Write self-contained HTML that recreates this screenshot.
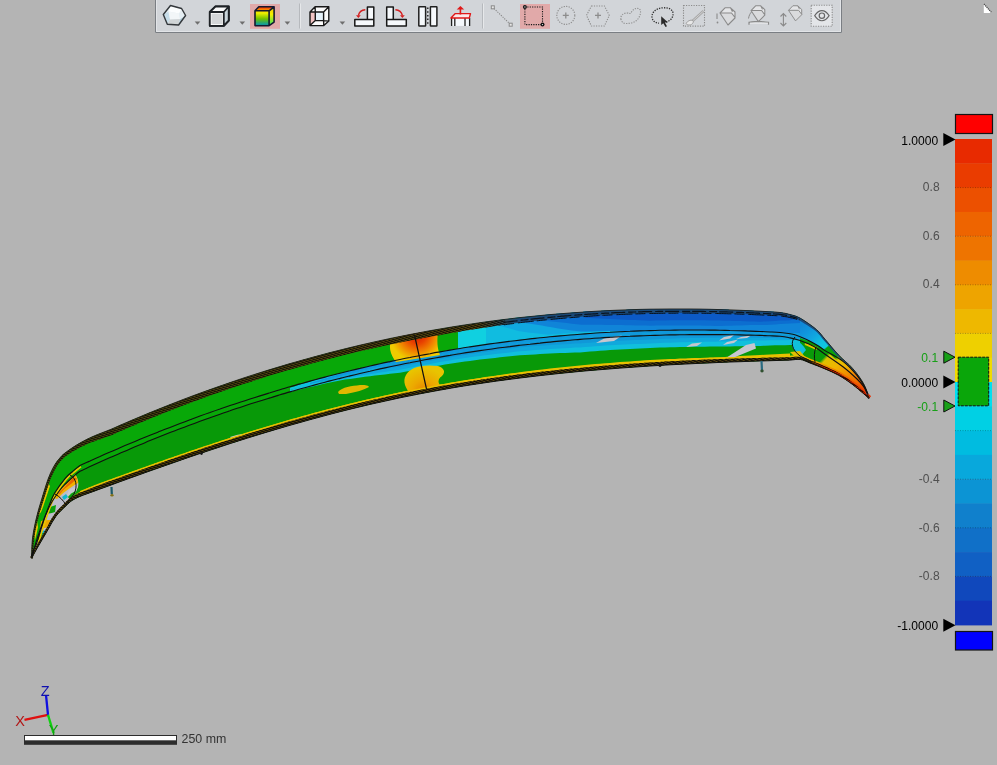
<!DOCTYPE html>
<html><head><meta charset="utf-8">
<style>
html,body{margin:0;padding:0;}
body{width:997px;height:765px;background:#b4b4b4;overflow:hidden;position:relative;font-family:"Liberation Sans",sans-serif;}
svg{position:absolute;left:0;top:0;font-family:"Liberation Sans",sans-serif;}
</style></head><body>
<svg width="997" height="765" viewBox="0 0 997 765">
<defs><clipPath id="bandclip"><path d="M31.5,558.3 C31.7,555.0 31.7,545.2 32.5,538.4 C33.3,531.6 35.0,524.0 36.5,517.5 C38.0,511.0 39.7,505.8 41.7,499.2 C43.7,492.6 46.3,483.8 48.5,478.0 C50.7,472.2 52.9,468.0 55.1,464.3 C57.4,460.6 59.9,457.9 62.0,455.6 C64.2,453.4 65.6,452.6 68.0,450.8 C70.4,449.1 73.3,447.0 76.5,445.1 C79.7,443.2 83.4,441.1 86.9,439.3 C90.4,437.6 93.6,436.2 97.4,434.6 C101.2,433.0 106.2,431.3 110.0,429.7 C113.8,428.2 116.7,426.8 120.0,425.3 C123.3,423.9 126.7,422.4 130.0,421.0 C133.3,419.6 136.7,418.2 140.0,416.8 C143.3,415.4 146.7,414.0 150.0,412.6 C153.3,411.3 156.7,409.9 160.0,408.6 C163.3,407.2 166.7,405.9 170.0,404.6 C173.3,403.3 176.7,402.0 180.0,400.7 C183.3,399.4 186.7,398.2 190.0,396.9 C193.3,395.7 196.7,394.4 200.0,393.2 C203.3,392.0 206.7,390.8 210.0,389.6 C213.3,388.4 216.7,387.2 220.0,386.1 C223.3,384.9 226.7,383.7 230.0,382.6 C233.3,381.5 236.7,380.3 240.0,379.2 C243.3,378.1 246.7,377.0 250.0,375.9 C253.3,374.9 256.7,373.8 260.0,372.7 C263.3,371.7 266.7,370.6 270.0,369.6 C273.3,368.6 276.7,367.6 280.0,366.6 C283.3,365.6 286.7,364.6 290.0,363.6 C293.3,362.7 296.7,361.7 300.0,360.8 C303.3,359.8 306.7,358.9 310.0,358.0 C313.3,357.0 316.7,356.1 320.0,355.3 C323.3,354.4 326.7,353.5 330.0,352.6 C333.3,351.8 336.7,350.9 340.0,350.1 C343.3,349.2 346.7,348.4 350.0,347.6 C353.3,346.8 356.7,346.0 360.0,345.2 C363.3,344.4 366.7,343.7 370.0,342.9 C373.3,342.2 376.7,341.4 380.0,340.7 C383.3,340.0 386.7,339.3 390.0,338.5 C393.3,337.8 396.7,337.2 400.0,336.5 C403.3,335.8 406.7,335.1 410.0,334.5 C413.3,333.8 416.7,333.2 420.0,332.6 C423.3,332.0 426.7,331.3 430.0,330.7 C433.3,330.1 436.7,329.6 440.0,329.0 C443.3,328.4 446.7,327.8 450.0,327.3 C453.3,326.8 456.7,326.2 460.0,325.7 C463.3,325.2 466.7,324.7 470.0,324.2 C473.3,323.7 476.7,323.2 480.0,322.7 C483.3,322.2 486.7,321.8 490.0,321.3 C493.3,320.9 496.7,320.5 500.0,320.0 C503.3,319.6 506.7,319.2 510.0,318.8 C513.3,318.4 516.7,318.0 520.0,317.6 C523.3,317.3 526.7,316.9 530.0,316.6 C533.3,316.2 536.7,315.9 540.0,315.6 C543.3,315.2 546.7,314.9 550.0,314.6 C553.3,314.3 556.7,314.0 560.0,313.8 C563.3,313.5 566.7,313.2 570.0,313.0 C573.3,312.7 576.7,312.5 580.0,312.3 C583.3,312.0 586.7,311.8 590.0,311.6 C593.3,311.4 596.7,311.2 600.0,311.0 C603.3,310.9 606.7,310.7 610.0,310.5 C613.3,310.4 616.7,310.2 620.0,310.1 C623.3,310.0 626.7,309.9 630.0,309.7 C633.3,309.6 636.7,309.5 640.0,309.4 C643.3,309.4 646.7,309.3 650.0,309.2 C653.3,309.2 656.7,309.1 660.0,309.1 C663.3,309.0 666.7,309.0 670.0,309.0 C673.3,309.0 676.7,309.0 680.0,309.0 C683.3,309.0 686.7,309.0 690.0,309.0 C693.3,309.0 696.7,309.1 700.0,309.1 C703.3,309.2 706.7,309.2 710.0,309.3 C713.3,309.4 716.7,309.5 720.0,309.6 C723.3,309.7 726.7,309.8 730.0,309.9 C733.3,310.0 736.7,310.1 740.0,310.3 C743.3,310.4 746.7,310.6 750.0,310.7 C753.3,310.9 756.7,311.1 760.0,311.2 C763.3,311.4 766.7,311.6 770.0,311.8 C773.3,312.0 776.7,312.0 780.0,312.5 C783.3,312.9 786.6,313.5 790.0,314.5 C793.4,315.5 796.0,315.8 800.4,318.3 C804.8,320.8 812.3,326.0 816.4,329.5 C820.5,333.0 821.3,334.9 825.0,339.2 C828.7,343.5 834.1,350.2 838.7,355.1 C843.3,360.0 848.4,363.6 852.5,368.3 C856.6,373.0 860.8,378.5 863.5,383.5 C866.2,388.5 868.1,396.0 869.0,398.5 L869.0,398.5 C868.1,397.7 866.2,395.9 863.5,393.6 C860.8,391.3 856.6,387.6 852.5,384.5 C848.4,381.4 843.3,377.9 838.7,375.3 C834.1,372.7 829.8,370.9 825.0,368.9 C820.2,366.8 814.1,364.6 810.0,363.0 C805.9,361.4 803.7,360.0 800.4,359.5 C797.1,359.0 793.4,359.9 790.0,360.1 C786.6,360.2 783.3,360.3 780.0,360.4 C776.7,360.5 773.3,360.6 770.0,360.7 C766.7,360.8 763.3,360.9 760.0,361.0 C756.7,361.1 753.3,361.2 750.0,361.3 C746.7,361.4 743.3,361.5 740.0,361.7 C736.7,361.8 733.3,361.9 730.0,362.0 C726.7,362.2 723.3,362.3 720.0,362.4 C716.7,362.6 713.3,362.7 710.0,362.9 C706.7,363.0 703.3,363.2 700.0,363.3 C696.7,363.5 693.3,363.6 690.0,363.8 C686.7,364.0 683.3,364.1 680.0,364.3 C676.7,364.5 673.3,364.7 670.0,364.8 C666.7,365.0 663.3,365.2 660.0,365.4 C656.7,365.6 653.3,365.8 650.0,366.0 C646.7,366.2 643.3,366.5 640.0,366.7 C636.7,366.9 633.3,367.1 630.0,367.4 C626.7,367.6 623.3,367.8 620.0,368.1 C616.7,368.3 613.3,368.6 610.0,368.9 C606.7,369.1 603.3,369.4 600.0,369.7 C596.7,370.0 593.3,370.2 590.0,370.5 C586.7,370.8 583.3,371.1 580.0,371.4 C576.7,371.8 573.3,372.1 570.0,372.4 C566.7,372.7 563.3,373.1 560.0,373.4 C556.7,373.8 553.3,374.1 550.0,374.5 C546.7,374.8 543.3,375.2 540.0,375.6 C536.7,376.0 533.3,376.4 530.0,376.8 C526.7,377.2 523.3,377.6 520.0,378.0 C516.7,378.4 513.3,378.8 510.0,379.3 C506.7,379.7 503.3,380.2 500.0,380.6 C496.7,381.1 493.3,381.5 490.0,382.0 C486.7,382.5 483.3,383.0 480.0,383.5 C476.7,384.0 473.3,384.5 470.0,385.0 C466.7,385.6 463.3,386.1 460.0,386.6 C456.7,387.2 453.3,387.8 450.0,388.3 C446.7,388.9 443.3,389.5 440.0,390.1 C436.7,390.7 433.3,391.3 430.0,391.9 C426.7,392.5 423.3,393.2 420.0,393.8 C416.7,394.4 413.3,395.1 410.0,395.8 C406.7,396.4 403.3,397.1 400.0,397.8 C396.7,398.5 393.3,399.2 390.0,400.0 C386.7,400.7 383.3,401.4 380.0,402.2 C376.7,402.9 373.3,403.7 370.0,404.4 C366.7,405.2 363.3,406.0 360.0,406.8 C356.7,407.6 353.3,408.4 350.0,409.2 C346.7,410.1 343.3,410.9 340.0,411.7 C336.7,412.6 333.3,413.5 330.0,414.3 C326.7,415.2 323.3,416.1 320.0,417.0 C316.7,417.9 313.3,418.8 310.0,419.7 C306.7,420.6 303.3,421.5 300.0,422.5 C296.7,423.4 293.3,424.3 290.0,425.3 C286.7,426.3 283.3,427.2 280.0,428.2 C276.7,429.2 273.3,430.2 270.0,431.2 C266.7,432.2 263.3,433.2 260.0,434.2 C256.7,435.2 253.3,436.3 250.0,437.3 C246.7,438.3 243.3,439.4 240.0,440.4 C236.7,441.5 233.3,442.6 230.0,443.6 C226.7,444.7 223.3,445.8 220.0,446.9 C216.7,448.0 213.3,449.1 210.0,450.2 C206.7,451.3 203.3,452.4 200.0,453.5 C196.7,454.7 193.3,455.8 190.0,456.9 C186.7,458.1 183.3,459.2 180.0,460.4 C176.7,461.5 173.3,462.7 170.0,463.9 C166.7,465.0 163.3,466.2 160.0,467.4 C156.7,468.6 153.3,469.7 150.0,470.9 C146.7,472.1 143.3,473.3 140.0,474.5 C136.7,475.7 133.3,476.9 130.0,478.1 C126.7,479.3 123.3,480.5 120.0,481.7 C116.7,482.9 113.3,484.2 110.0,485.4 C106.7,486.6 103.3,487.8 100.0,489.0 C96.7,490.3 93.3,491.5 90.0,492.7 C86.7,493.9 83.0,495.1 80.0,496.4 C77.0,497.7 74.3,498.9 72.0,500.5 C69.7,502.1 68.7,503.2 66.0,505.8 C63.3,508.4 59.0,512.3 56.0,516.2 C53.0,520.1 51.0,524.5 48.2,529.3 C45.4,534.1 41.8,540.2 39.0,545.0 C36.2,549.8 32.8,556.1 31.5,558.3Z"/></clipPath></defs>
<defs>
<radialGradient id="ob" cx="417" cy="334" r="27" gradientUnits="userSpaceOnUse"><stop offset="0" stop-color="#d01800"/><stop offset="0.35" stop-color="#e84000"/><stop offset="0.65" stop-color="#f08000"/><stop offset="0.9" stop-color="#f0b800"/><stop offset="1" stop-color="#f0cc00"/></radialGradient>
<radialGradient id="yb" cx="424" cy="392" r="24" gradientUnits="userSpaceOnUse"><stop offset="0" stop-color="#e88000"/><stop offset="0.5" stop-color="#eca800"/><stop offset="1" stop-color="#e8c400"/></radialGradient>
<linearGradient id="rimT" gradientUnits="userSpaceOnUse" x1="0" y1="0" x2="997" y2="0"><stop offset="0" stop-color="#4a4a14"/><stop offset="0.48" stop-color="#5a4a12"/><stop offset="0.52" stop-color="#1a4a78"/><stop offset="1" stop-color="#1a4a80"/></linearGradient>
<linearGradient id="tipU" gradientUnits="userSpaceOnUse" x1="805" y1="322" x2="868" y2="398"><stop offset="0" stop-color="#1088d8"/><stop offset="0.08" stop-color="#1094dc"/><stop offset="0.18" stop-color="#10a8e0"/><stop offset="0.26" stop-color="#10c0e0"/><stop offset="0.33" stop-color="#10c8e0"/><stop offset="0.345" stop-color="#0aa00a"/><stop offset="0.47" stop-color="#0aa00a"/><stop offset="0.51" stop-color="#e0c800"/><stop offset="0.62" stop-color="#f0b000"/><stop offset="0.74" stop-color="#f08000"/><stop offset="0.9" stop-color="#f04800"/><stop offset="1" stop-color="#e02000"/></linearGradient>
<linearGradient id="tipL" gradientUnits="userSpaceOnUse" x1="812" y1="345" x2="868" y2="398"><stop offset="0" stop-color="#0a9a0a"/><stop offset="0.22" stop-color="#0a9a0a"/><stop offset="0.26" stop-color="#e0c000"/><stop offset="0.42" stop-color="#f0b400"/><stop offset="0.58" stop-color="#f09000"/><stop offset="0.78" stop-color="#f06000"/><stop offset="1" stop-color="#e02800"/></linearGradient>
</defs>
<path d="M31.5,558.3 C31.7,555.0 31.7,545.2 32.5,538.4 C33.3,531.6 35.0,524.0 36.5,517.5 C38.0,511.0 39.7,505.8 41.7,499.2 C43.7,492.6 46.3,483.8 48.5,478.0 C50.7,472.2 52.9,468.0 55.1,464.3 C57.4,460.6 59.9,457.9 62.0,455.6 C64.2,453.4 65.6,452.6 68.0,450.8 C70.4,449.1 73.3,447.0 76.5,445.1 C79.7,443.2 83.4,441.1 86.9,439.3 C90.4,437.6 93.6,436.2 97.4,434.6 C101.2,433.0 106.2,431.3 110.0,429.7 C113.8,428.2 116.7,426.8 120.0,425.3 C123.3,423.9 126.7,422.4 130.0,421.0 C133.3,419.6 136.7,418.2 140.0,416.8 C143.3,415.4 146.7,414.0 150.0,412.6 C153.3,411.3 156.7,409.9 160.0,408.6 C163.3,407.2 166.7,405.9 170.0,404.6 C173.3,403.3 176.7,402.0 180.0,400.7 C183.3,399.4 186.7,398.2 190.0,396.9 C193.3,395.7 196.7,394.4 200.0,393.2 C203.3,392.0 206.7,390.8 210.0,389.6 C213.3,388.4 216.7,387.2 220.0,386.1 C223.3,384.9 226.7,383.7 230.0,382.6 C233.3,381.5 236.7,380.3 240.0,379.2 C243.3,378.1 246.7,377.0 250.0,375.9 C253.3,374.9 256.7,373.8 260.0,372.7 C263.3,371.7 266.7,370.6 270.0,369.6 C273.3,368.6 276.7,367.6 280.0,366.6 C283.3,365.6 286.7,364.6 290.0,363.6 C293.3,362.7 296.7,361.7 300.0,360.8 C303.3,359.8 306.7,358.9 310.0,358.0 C313.3,357.0 316.7,356.1 320.0,355.3 C323.3,354.4 326.7,353.5 330.0,352.6 C333.3,351.8 336.7,350.9 340.0,350.1 C343.3,349.2 346.7,348.4 350.0,347.6 C353.3,346.8 356.7,346.0 360.0,345.2 C363.3,344.4 366.7,343.7 370.0,342.9 C373.3,342.2 376.7,341.4 380.0,340.7 C383.3,340.0 386.7,339.3 390.0,338.5 C393.3,337.8 396.7,337.2 400.0,336.5 C403.3,335.8 406.7,335.1 410.0,334.5 C413.3,333.8 416.7,333.2 420.0,332.6 C423.3,332.0 426.7,331.3 430.0,330.7 C433.3,330.1 436.7,329.6 440.0,329.0 C443.3,328.4 446.7,327.8 450.0,327.3 C453.3,326.8 456.7,326.2 460.0,325.7 C463.3,325.2 466.7,324.7 470.0,324.2 C473.3,323.7 476.7,323.2 480.0,322.7 C483.3,322.2 486.7,321.8 490.0,321.3 C493.3,320.9 496.7,320.5 500.0,320.0 C503.3,319.6 506.7,319.2 510.0,318.8 C513.3,318.4 516.7,318.0 520.0,317.6 C523.3,317.3 526.7,316.9 530.0,316.6 C533.3,316.2 536.7,315.9 540.0,315.6 C543.3,315.2 546.7,314.9 550.0,314.6 C553.3,314.3 556.7,314.0 560.0,313.8 C563.3,313.5 566.7,313.2 570.0,313.0 C573.3,312.7 576.7,312.5 580.0,312.3 C583.3,312.0 586.7,311.8 590.0,311.6 C593.3,311.4 596.7,311.2 600.0,311.0 C603.3,310.9 606.7,310.7 610.0,310.5 C613.3,310.4 616.7,310.2 620.0,310.1 C623.3,310.0 626.7,309.9 630.0,309.7 C633.3,309.6 636.7,309.5 640.0,309.4 C643.3,309.4 646.7,309.3 650.0,309.2 C653.3,309.2 656.7,309.1 660.0,309.1 C663.3,309.0 666.7,309.0 670.0,309.0 C673.3,309.0 676.7,309.0 680.0,309.0 C683.3,309.0 686.7,309.0 690.0,309.0 C693.3,309.0 696.7,309.1 700.0,309.1 C703.3,309.2 706.7,309.2 710.0,309.3 C713.3,309.4 716.7,309.5 720.0,309.6 C723.3,309.7 726.7,309.8 730.0,309.9 C733.3,310.0 736.7,310.1 740.0,310.3 C743.3,310.4 746.7,310.6 750.0,310.7 C753.3,310.9 756.7,311.1 760.0,311.2 C763.3,311.4 766.7,311.6 770.0,311.8 C773.3,312.0 776.7,312.0 780.0,312.5 C783.3,312.9 786.6,313.5 790.0,314.5 C793.4,315.5 796.0,315.8 800.4,318.3 C804.8,320.8 812.3,326.0 816.4,329.5 C820.5,333.0 821.3,334.9 825.0,339.2 C828.7,343.5 834.1,350.2 838.7,355.1 C843.3,360.0 848.4,363.6 852.5,368.3 C856.6,373.0 860.8,378.5 863.5,383.5 C866.2,388.5 868.1,396.0 869.0,398.5 L869.0,398.5 C868.1,397.7 866.2,395.9 863.5,393.6 C860.8,391.3 856.6,387.6 852.5,384.5 C848.4,381.4 843.3,377.9 838.7,375.3 C834.1,372.7 829.8,370.9 825.0,368.9 C820.2,366.8 814.1,364.6 810.0,363.0 C805.9,361.4 803.7,360.0 800.4,359.5 C797.1,359.0 793.4,359.9 790.0,360.1 C786.6,360.2 783.3,360.3 780.0,360.4 C776.7,360.5 773.3,360.6 770.0,360.7 C766.7,360.8 763.3,360.9 760.0,361.0 C756.7,361.1 753.3,361.2 750.0,361.3 C746.7,361.4 743.3,361.5 740.0,361.7 C736.7,361.8 733.3,361.9 730.0,362.0 C726.7,362.2 723.3,362.3 720.0,362.4 C716.7,362.6 713.3,362.7 710.0,362.9 C706.7,363.0 703.3,363.2 700.0,363.3 C696.7,363.5 693.3,363.6 690.0,363.8 C686.7,364.0 683.3,364.1 680.0,364.3 C676.7,364.5 673.3,364.7 670.0,364.8 C666.7,365.0 663.3,365.2 660.0,365.4 C656.7,365.6 653.3,365.8 650.0,366.0 C646.7,366.2 643.3,366.5 640.0,366.7 C636.7,366.9 633.3,367.1 630.0,367.4 C626.7,367.6 623.3,367.8 620.0,368.1 C616.7,368.3 613.3,368.6 610.0,368.9 C606.7,369.1 603.3,369.4 600.0,369.7 C596.7,370.0 593.3,370.2 590.0,370.5 C586.7,370.8 583.3,371.1 580.0,371.4 C576.7,371.8 573.3,372.1 570.0,372.4 C566.7,372.7 563.3,373.1 560.0,373.4 C556.7,373.8 553.3,374.1 550.0,374.5 C546.7,374.8 543.3,375.2 540.0,375.6 C536.7,376.0 533.3,376.4 530.0,376.8 C526.7,377.2 523.3,377.6 520.0,378.0 C516.7,378.4 513.3,378.8 510.0,379.3 C506.7,379.7 503.3,380.2 500.0,380.6 C496.7,381.1 493.3,381.5 490.0,382.0 C486.7,382.5 483.3,383.0 480.0,383.5 C476.7,384.0 473.3,384.5 470.0,385.0 C466.7,385.6 463.3,386.1 460.0,386.6 C456.7,387.2 453.3,387.8 450.0,388.3 C446.7,388.9 443.3,389.5 440.0,390.1 C436.7,390.7 433.3,391.3 430.0,391.9 C426.7,392.5 423.3,393.2 420.0,393.8 C416.7,394.4 413.3,395.1 410.0,395.8 C406.7,396.4 403.3,397.1 400.0,397.8 C396.7,398.5 393.3,399.2 390.0,400.0 C386.7,400.7 383.3,401.4 380.0,402.2 C376.7,402.9 373.3,403.7 370.0,404.4 C366.7,405.2 363.3,406.0 360.0,406.8 C356.7,407.6 353.3,408.4 350.0,409.2 C346.7,410.1 343.3,410.9 340.0,411.7 C336.7,412.6 333.3,413.5 330.0,414.3 C326.7,415.2 323.3,416.1 320.0,417.0 C316.7,417.9 313.3,418.8 310.0,419.7 C306.7,420.6 303.3,421.5 300.0,422.5 C296.7,423.4 293.3,424.3 290.0,425.3 C286.7,426.3 283.3,427.2 280.0,428.2 C276.7,429.2 273.3,430.2 270.0,431.2 C266.7,432.2 263.3,433.2 260.0,434.2 C256.7,435.2 253.3,436.3 250.0,437.3 C246.7,438.3 243.3,439.4 240.0,440.4 C236.7,441.5 233.3,442.6 230.0,443.6 C226.7,444.7 223.3,445.8 220.0,446.9 C216.7,448.0 213.3,449.1 210.0,450.2 C206.7,451.3 203.3,452.4 200.0,453.5 C196.7,454.7 193.3,455.8 190.0,456.9 C186.7,458.1 183.3,459.2 180.0,460.4 C176.7,461.5 173.3,462.7 170.0,463.9 C166.7,465.0 163.3,466.2 160.0,467.4 C156.7,468.6 153.3,469.7 150.0,470.9 C146.7,472.1 143.3,473.3 140.0,474.5 C136.7,475.7 133.3,476.9 130.0,478.1 C126.7,479.3 123.3,480.5 120.0,481.7 C116.7,482.9 113.3,484.2 110.0,485.4 C106.7,486.6 103.3,487.8 100.0,489.0 C96.7,490.3 93.3,491.5 90.0,492.7 C86.7,493.9 83.0,495.1 80.0,496.4 C77.0,497.7 74.3,498.9 72.0,500.5 C69.7,502.1 68.7,503.2 66.0,505.8 C63.3,508.4 59.0,512.3 56.0,516.2 C53.0,520.1 51.0,524.5 48.2,529.3 C45.4,534.1 41.8,540.2 39.0,545.0 C36.2,549.8 32.8,556.1 31.5,558.3Z" fill="#08a808"/>
<g clip-path="url(#bandclip)">
<path d="M32.5,556.0 C32.7,555.0 32.7,553.8 33.8,550.0 C34.9,546.2 37.0,538.8 39.0,533.0 C41.0,527.2 43.4,520.2 45.6,515.0 C47.8,509.8 49.6,506.0 52.0,501.8 C54.4,497.6 57.7,493.1 60.0,490.0 C62.3,486.9 63.7,485.8 66.0,483.5 C68.3,481.2 71.7,478.0 74.0,476.0 C76.3,474.0 77.3,472.9 80.0,471.3 C82.7,469.7 86.7,468.2 90.0,466.6 C93.3,465.1 96.7,463.6 100.0,462.1 C103.3,460.6 106.7,459.1 110.0,457.6 C113.3,456.1 116.7,454.7 120.0,453.2 C123.3,451.8 126.7,450.4 130.0,448.9 C133.3,447.5 136.7,446.1 140.0,444.7 C143.3,443.3 146.7,442.0 150.0,440.6 C153.3,439.3 156.7,437.9 160.0,436.6 C163.3,435.3 166.7,433.9 170.0,432.6 C173.3,431.3 176.7,430.1 180.0,428.8 C183.3,427.5 186.7,426.3 190.0,425.0 C193.3,423.8 196.7,422.5 200.0,421.3 C203.3,420.1 206.7,418.9 210.0,417.7 C213.3,416.5 216.7,415.4 220.0,414.2 C223.3,413.0 226.7,411.9 230.0,410.8 C233.3,409.6 236.7,408.5 240.0,407.4 C243.3,406.3 246.7,405.2 250.0,404.1 C253.3,403.1 256.7,402.0 260.0,401.0 C263.3,399.9 266.7,398.9 270.0,397.9 C273.3,396.8 276.7,395.8 280.0,394.8 C283.3,393.8 286.7,392.9 290.0,391.9 C293.3,390.9 296.7,390.0 300.0,389.0 C303.3,388.1 306.7,387.2 310.0,386.2 C313.3,385.3 316.7,384.4 320.0,383.5 C323.3,382.6 326.7,381.8 330.0,380.9 C333.3,380.0 336.7,379.2 340.0,378.4 C343.3,377.5 346.7,376.7 350.0,375.9 C353.3,375.1 356.7,374.3 360.0,373.5 C363.3,372.7 366.7,371.9 370.0,371.2 C373.3,370.4 376.7,369.7 380.0,368.9 C383.3,368.2 386.7,367.5 390.0,366.8 C393.3,366.1 396.7,365.4 400.0,364.7 C403.3,364.0 406.7,363.3 410.0,362.7 C413.3,362.0 416.7,361.4 420.0,360.7 C423.3,360.1 426.7,359.5 430.0,358.9 C433.3,358.3 436.7,357.7 440.0,357.1 C443.3,356.5 446.7,355.9 450.0,355.4 C453.3,354.8 456.7,354.3 460.0,353.7 C463.3,353.2 466.7,352.7 470.0,352.1 C473.3,351.6 476.7,351.1 480.0,350.6 C483.3,350.2 486.7,349.7 490.0,349.2 C493.3,348.7 496.7,348.3 500.0,347.8 C503.3,347.4 506.7,347.0 510.0,346.6 C513.3,346.1 516.7,345.7 520.0,345.3 C523.3,344.9 526.7,344.5 530.0,344.2 C533.3,343.8 536.7,343.4 540.0,343.1 C543.3,342.7 546.7,342.4 550.0,342.1 C553.3,341.7 556.7,341.4 560.0,341.1 C563.3,340.8 566.7,340.5 570.0,340.2 C573.3,339.9 576.7,339.7 580.0,339.4 C583.3,339.1 586.7,338.9 590.0,338.7 C593.3,338.4 596.7,338.2 600.0,338.0 C603.3,337.7 606.7,337.5 610.0,337.3 C613.3,337.1 616.7,337.0 620.0,336.8 C623.3,336.6 626.7,336.4 630.0,336.3 C633.3,336.1 636.7,336.0 640.0,335.9 C643.3,335.7 646.7,335.6 650.0,335.5 C653.3,335.4 656.7,335.3 660.0,335.2 C663.3,335.1 666.7,335.0 670.0,334.9 C673.3,334.9 676.7,334.8 680.0,334.8 C683.3,334.7 686.7,334.7 690.0,334.6 C693.3,334.6 696.7,334.6 700.0,334.6 C703.3,334.6 706.7,334.6 710.0,334.6 C713.3,334.6 716.7,334.6 720.0,334.6 C723.3,334.7 726.7,334.7 730.0,334.7 C733.3,334.8 736.7,334.8 740.0,334.9 C743.3,335.0 746.7,335.1 750.0,335.1 C753.3,335.2 756.7,335.3 760.0,335.4 C763.3,335.5 766.7,335.7 770.0,335.8 C773.3,335.9 777.0,335.9 780.0,336.2 C783.0,336.5 785.1,336.8 788.3,337.5 C791.5,338.2 795.0,338.8 799.3,340.3 C803.6,341.8 809.6,344.2 813.9,346.5 C818.2,348.8 820.1,350.8 825.0,354.2 C829.9,357.6 838.0,362.9 843.3,367.0 C848.6,371.1 853.6,375.8 857.0,379.0 C860.4,382.2 861.8,384.0 863.5,386.3 C865.2,388.6 866.4,391.9 867.0,393.0 L870,430 L20,620Z" fill="#089908"/>
<path d="M32,558 C34,550 36,542 39,533 C41,526 43,520 45.6,515 C48,509 50,505 52,501.8 C55,497 57,493 60,490 C63,487 64,485 66,483.5 C70,480 72,477 75,474.5 C78,478 79,483 78,487 C76,493 73,497 69,501 L40,562Z" fill="#bcbcc8"/>
<path d="M54,498 C56,495 58,492 60,490 C64,486 68,481 75,474.5 C77,477 78,480 78,483 C74,485 70,488 66,491 C62,494 60,496 57,499Z" fill="#f0b000"/>
<path d="M58,494 C62,490 66,486 72,479 C74,477.5 76,477 77,479 C73,482 70,485 67,487 C64,489 62,491 60,494Z" fill="#e86800"/>
<path d="M69,490 C72,488 75,487 78,486 C77,490 74,494 71,497 L67,495Z" fill="#c8c8d0"/>
<path d="M68,497 C70,494 73,492 76,491 L74,496 L70,500Z" fill="#0aa00a"/>
<path d="M62,497 L66,494 L68,497 L64,500Z" fill="#10b8d0"/>
<path d="M47,508 C50,507 53,506 56,505 L55,512 C52,513 49,513.6 46.5,513.6Z" fill="#0aa00a"/>
<path d="M41,521 C44,520 48,520 51,520 L49,527 C46,528 43,528 40,528Z" fill="#eca800"/>
<path d="M40,531 C42,530.6 44,530.6 45.6,530.6 L43,535 C41,535.5 40.5,535.8 39.5,536Z" fill="#10b8d0"/>
<path d="M35,535 C37,534 40,533 43,533 L41,539 L34.5,542Z" fill="#0aa00a"/>
<path d="M38.5,500 C40,493 43,487 47,482 L50,486 C48,492 46,498 44,504 C43,507 42,510 41,512Z" fill="#e8c400"/>
<path d="M38,510 C39,508 40,507 41,506 L41,512 L39,515Z" fill="#e8c400"/>
<path d="M33.5,531 C34.5,527 35.5,524 37,521 L38,527 C37,532 36,536 35,540Z" fill="#e8c400"/>
<path d="M72,468 C76,467 80,466 84,465 L86,470 C82,471 78,472 74,473Z" fill="#08a808"/>
<path d="M32.1,556.2 L32.3,555.5 L32.6,554.6 L32.9,553.6 L33.3,552.4 L33.6,551.3 L34.1,550.2 L34.4,549.4 L34.8,548.8 L35.2,548.1 L35.7,547.2 L36.3,545.8 L37.1,543.9 L38.0,541.2 L39.0,537.9 L40.1,534.1 L41.3,530.2 L42.4,526.4 L43.6,522.9 L44.7,519.6 L45.8,516.4 L46.9,513.2 L48.0,510.1 L49.0,507.2 L50.1,504.6 L51.0,502.3 L51.7,500.3 L52.5,498.5 L53.2,496.8 L54.2,495.0 L55.3,493.0 L56.8,490.7 L58.5,488.1 L60.4,485.5 L62.3,483.0 L64.1,480.6 L65.7,478.7 L67.0,477.2 L68.1,476.0 L69.1,475.1 L70.2,474.3 L71.2,473.4 L72.4,472.5 L73.7,471.3 L75.3,470.1 L76.8,468.8 L78.3,467.7 L79.5,466.7 L80.4,466.0 L81.5,467.4 L80.6,468.1 L79.4,469.1 L77.9,470.2 L76.4,471.5 L74.9,472.7 L73.5,473.8 L72.4,474.8 L71.3,475.7 L70.3,476.5 L69.3,477.3 L68.3,478.4 L67.0,479.8 L65.5,481.7 L63.7,484.0 L61.8,486.6 L60.0,489.2 L58.3,491.7 L56.9,493.9 L55.7,495.9 L54.9,497.6 L54.1,499.3 L53.4,501.0 L52.6,503.0 L51.7,505.3 L50.7,507.9 L49.7,510.7 L48.6,513.8 L47.5,516.9 L46.4,520.2 L45.3,523.4 L44.2,526.9 L43.0,530.7 L41.8,534.6 L40.7,538.4 L39.7,541.7 L38.8,544.5 L38.0,546.5 L37.4,548.0 L36.8,549.0 L36.3,549.7 L36.0,550.2 L35.7,550.9 L35.3,551.9 L35.0,553.0 L34.6,554.1 L34.3,555.2 L34.0,556.1 L33.8,556.7Z" fill="#e8c400"/>
<path d="M458.0,318.0 L463.0,317.2 L468.1,316.5 L473.1,315.7 L478.1,315.0 L483.1,314.3 L488.2,313.6 L493.2,312.9 L498.2,312.3 L503.3,311.6 L508.3,311.0 L513.3,310.4 L518.4,309.8 L523.4,309.3 L528.4,308.7 L533.4,308.2 L538.5,307.7 L543.5,307.2 L548.5,306.8 L553.6,306.3 L558.6,305.9 L563.6,305.5 L568.6,305.1 L573.7,304.7 L578.7,304.3 L583.7,304.0 L588.8,303.7 L593.8,303.4 L598.8,303.1 L603.9,302.8 L608.9,302.6 L613.9,302.4 L618.9,302.1 L624.0,302.0 L629.0,301.8 L634.0,301.6 L639.1,301.5 L644.1,301.3 L649.1,301.2 L654.1,301.2 L659.2,301.1 L664.2,301.0 L669.2,301.0 L674.3,301.0 L679.3,301.0 L684.3,301.0 L689.4,301.0 L694.4,301.1 L699.4,301.1 L704.4,301.2 L709.5,301.3 L714.5,301.4 L719.5,301.6 L724.6,301.7 L729.6,301.9 L734.6,302.1 L739.6,302.3 L744.7,302.5 L749.7,302.7 L754.7,303.0 L759.8,303.2 L764.8,303.5 L769.8,303.8 L774.9,304.1 L779.9,304.5 L784.9,304.8 L789.9,305.2 L795.0,305.6 L800.0,306.0 L800.0,334.8 L795.0,334.4 L789.9,334.1 L784.9,333.8 L779.9,333.5 L774.9,333.2 L769.8,333.0 L764.8,332.7 L759.8,332.5 L754.7,332.3 L749.7,332.1 L744.7,331.9 L739.6,331.7 L734.6,331.6 L729.6,331.4 L724.6,331.3 L719.5,331.2 L714.5,331.2 L709.5,331.1 L704.4,331.0 L699.4,331.0 L694.4,331.0 L689.4,331.0 L684.3,331.0 L679.3,331.0 L674.3,331.1 L669.2,331.2 L664.2,331.3 L659.2,331.4 L654.1,331.5 L649.1,331.6 L644.1,331.8 L639.1,331.9 L634.0,332.1 L629.0,332.3 L624.0,332.6 L618.9,332.8 L613.9,333.0 L608.9,333.3 L603.9,333.6 L598.8,333.9 L593.8,334.2 L588.8,334.6 L583.7,335.0 L578.7,335.3 L573.7,335.7 L568.6,336.1 L563.6,336.6 L558.6,337.0 L553.6,337.5 L548.5,338.0 L543.5,338.5 L538.5,339.0 L533.4,339.5 L528.4,340.1 L523.4,340.7 L518.4,341.3 L513.3,341.9 L508.3,342.5 L503.3,343.1 L498.2,343.8 L493.2,344.5 L488.2,345.2 L483.1,345.9 L478.1,346.7 L473.1,347.4 L468.1,348.2 L463.0,349.0 L458.0,349.8Z" fill="#10d0e0" />
<path d="M486.0,313.9 L491.0,313.2 L496.0,312.5 L501.0,311.9 L505.9,311.3 L510.9,310.7 L515.9,310.1 L520.9,309.5 L525.9,309.0 L530.9,308.5 L535.8,308.0 L540.8,307.5 L545.8,307.0 L550.8,306.6 L555.8,306.1 L560.8,305.7 L565.7,305.3 L570.7,304.9 L575.7,304.6 L580.7,304.2 L585.7,303.9 L590.7,303.6 L595.7,303.3 L600.6,303.0 L605.6,302.7 L610.6,302.5 L615.6,302.3 L620.6,302.1 L625.6,301.9 L630.5,301.7 L635.5,301.6 L640.5,301.4 L645.5,301.3 L650.5,301.2 L655.5,301.1 L660.4,301.1 L665.4,301.0 L670.4,301.0 L675.4,301.0 L680.4,301.0 L685.4,301.0 L690.3,301.0 L695.3,301.1 L700.3,301.1 L705.3,301.2 L710.3,301.3 L715.3,301.4 L720.3,301.6 L725.2,301.7 L730.2,301.9 L735.2,302.1 L740.2,302.3 L745.2,302.5 L750.2,302.7 L755.1,303.0 L760.1,303.2 L765.1,303.5 L770.1,303.8 L775.1,304.1 L780.1,304.5 L785.0,304.8 L790.0,305.2 L795.0,305.6 L800.0,306.0 L800.0,334.8 L795.0,334.4 L790.0,334.1 L785.0,333.8 L780.1,333.5 L775.1,333.2 L770.1,333.0 L765.1,332.7 L760.1,332.5 L755.1,332.3 L750.2,332.1 L745.2,331.9 L740.2,331.7 L735.2,331.6 L730.2,331.5 L725.2,331.3 L720.3,331.2 L715.3,331.2 L710.3,331.1 L705.3,331.0 L700.3,331.0 L695.3,331.0 L690.3,331.0 L685.4,331.0 L680.4,331.0 L675.4,331.1 L670.4,331.1 L665.4,331.2 L660.4,331.3 L655.5,331.4 L650.5,331.6 L645.5,331.7 L640.5,331.9 L635.5,332.1 L630.5,332.3 L625.6,332.5 L620.6,332.7 L615.6,333.0 L610.6,333.2 L605.6,333.5 L600.6,333.8 L595.7,334.1 L590.7,334.5 L585.7,334.8 L580.7,335.2 L575.7,335.6 L570.7,336.0 L565.7,336.4 L560.8,336.8 L555.8,337.3 L550.8,337.8 L545.8,338.2 L540.8,338.8 L535.8,339.3 L530.9,339.8 L525.9,340.4 L520.9,341.0 L515.9,341.6 L510.9,342.2 L505.9,342.8 L501.0,343.5 L496.0,344.1 L491.0,344.8 L486.0,345.5Z" fill="#10bce0" />
<path d="M498.0,312.3 L503.0,311.7 L508.1,311.0 L513.1,310.4 L518.1,309.9 L523.2,309.3 L528.2,308.8 L533.2,308.2 L538.3,307.7 L543.3,307.2 L548.3,306.8 L553.4,306.3 L558.4,305.9 L563.4,305.5 L568.5,305.1 L573.5,304.7 L578.5,304.4 L583.6,304.0 L588.6,303.7 L593.6,303.4 L598.7,303.1 L603.7,302.8 L608.7,302.6 L613.8,302.4 L618.8,302.2 L623.8,302.0 L628.9,301.8 L633.9,301.6 L638.9,301.5 L644.0,301.4 L649.0,301.2 L654.0,301.2 L659.1,301.1 L664.1,301.0 L669.1,301.0 L674.2,301.0 L679.2,301.0 L684.2,301.0 L689.3,301.0 L694.3,301.1 L699.3,301.1 L704.4,301.2 L709.4,301.3 L714.4,301.4 L719.5,301.6 L724.5,301.7 L729.5,301.9 L734.6,302.1 L739.6,302.3 L744.6,302.5 L749.7,302.7 L754.7,303.0 L759.7,303.2 L764.8,303.5 L769.8,303.8 L774.8,304.1 L779.9,304.5 L784.9,304.8 L789.9,305.2 L795.0,305.6 L800.0,306.0 L800.0,334.0 L795.0,333.6 L789.9,333.2 L784.9,332.8 L779.9,332.5 L774.8,332.1 L769.8,331.8 L764.8,331.5 L759.7,331.2 L754.7,331.0 L749.7,330.7 L744.6,330.5 L739.6,330.3 L734.6,330.1 L729.5,329.9 L724.5,329.7 L719.5,329.6 L714.4,329.4 L709.4,329.3 L704.4,329.2 L699.3,329.1 L694.3,329.1 L689.3,329.0 L684.2,329.0 L679.2,329.0 L674.2,329.0 L669.1,329.0 L664.1,329.0 L659.1,329.1 L654.0,329.2 L649.0,329.2 L644.0,329.4 L638.9,329.5 L633.9,329.6 L628.9,329.8 L623.8,330.0 L618.8,330.2 L613.8,330.4 L608.7,330.6 L603.7,330.8 L598.7,331.1 L593.6,331.4 L588.6,331.7 L583.6,332.0 L578.5,332.4 L573.5,332.7 L568.5,333.1 L563.4,333.5 L558.4,333.9 L553.4,334.3 L548.3,334.8 L543.3,334.2 L538.3,333.6 L533.2,333.0 L528.2,332.4 L523.2,331.8 L518.1,330.9 L513.1,329.5 L508.1,328.1 L503.0,326.7 L498.0,325.3Z" fill="#10a8e0" />
<path d="M522.0,309.4 L527.0,308.9 L531.9,308.4 L536.9,307.9 L541.9,307.4 L546.8,306.9 L551.8,306.5 L556.8,306.0 L561.7,305.6 L566.7,305.2 L571.6,304.9 L576.6,304.5 L581.6,304.2 L586.5,303.8 L591.5,303.5 L596.5,303.2 L601.4,303.0 L606.4,302.7 L611.4,302.5 L616.3,302.3 L621.3,302.1 L626.2,301.9 L631.2,301.7 L636.2,301.6 L641.1,301.4 L646.1,301.3 L651.1,301.2 L656.0,301.1 L661.0,301.1 L666.0,301.0 L670.9,301.0 L675.9,301.0 L680.9,301.0 L685.8,301.0 L690.8,301.0 L695.8,301.1 L700.7,301.1 L705.7,301.2 L710.6,301.3 L715.6,301.5 L720.6,301.6 L725.5,301.7 L730.5,301.9 L735.5,302.1 L740.4,302.3 L745.4,302.5 L750.4,302.7 L755.3,303.0 L760.3,303.3 L765.2,303.5 L770.2,303.8 L775.2,304.1 L780.1,304.5 L785.1,304.8 L790.1,305.2 L795.0,305.6 L800.0,306.0 L800.0,335.0 L795.0,334.6 L790.1,334.2 L785.1,333.8 L780.1,333.5 L775.2,333.1 L770.2,332.8 L765.2,332.5 L760.3,332.3 L755.3,332.0 L750.4,331.7 L745.4,331.5 L740.4,331.3 L735.5,331.1 L730.5,330.9 L725.5,330.7 L720.6,330.6 L715.6,330.5 L710.6,330.5 L705.7,330.4 L700.7,330.4 L695.8,330.4 L690.8,330.4 L685.8,330.5 L680.9,330.5 L675.9,330.6 L670.9,330.7 L666.0,330.8 L661.0,330.9 L656.0,331.0 L651.1,331.2 L646.1,331.2 L641.1,331.1 L636.2,331.0 L631.2,331.0 L626.2,331.0 L621.3,331.0 L616.3,331.0 L611.4,331.0 L606.4,331.1 L601.4,331.2 L596.5,331.2 L591.5,331.4 L586.5,331.5 L581.6,331.6 L576.6,331.1 L571.6,330.4 L566.7,329.7 L561.7,329.0 L556.8,328.2 L551.8,327.3 L546.8,326.4 L541.9,325.6 L536.9,324.8 L531.9,324.0 L527.0,323.2 L522.0,322.4Z" fill="#1084d8" />
<path d="M542.0,307.4 L547.0,306.9 L551.9,306.5 L556.9,306.0 L561.9,305.6 L566.8,305.2 L571.8,304.8 L576.7,304.5 L581.7,304.1 L586.7,303.8 L591.6,303.5 L596.6,303.2 L601.6,303.0 L606.5,302.7 L611.5,302.5 L616.5,302.2 L621.4,302.0 L626.4,301.9 L631.3,301.7 L636.3,301.5 L641.3,301.4 L646.2,301.3 L651.2,301.2 L656.2,301.1 L661.1,301.1 L666.1,301.0 L671.1,301.0 L676.0,301.0 L681.0,301.0 L685.9,301.0 L690.9,301.0 L695.9,301.1 L700.8,301.1 L705.8,301.2 L710.8,301.3 L715.7,301.5 L720.7,301.6 L725.7,301.7 L730.6,301.9 L735.6,302.1 L740.5,302.3 L745.5,302.5 L750.5,302.7 L755.4,303.0 L760.4,303.3 L765.4,303.5 L770.3,303.8 L775.3,304.2 L780.3,304.5 L785.2,304.8 L790.2,305.2 L795.1,305.6 L800.1,306.0 L805.1,306.4 L810.0,306.8 L815.0,307.2 L815.0,319.2 L810.0,320.4 L805.1,321.7 L800.1,322.9 L795.1,323.2 L790.2,323.5 L785.2,323.8 L780.3,324.1 L775.3,324.5 L770.3,324.8 L765.4,324.9 L760.4,324.9 L755.4,325.0 L750.5,325.1 L745.5,325.2 L740.5,325.4 L735.6,325.5 L730.6,325.7 L725.7,325.8 L720.7,326.0 L715.7,326.0 L710.8,325.8 L705.8,325.7 L700.8,325.6 L695.9,325.6 L690.9,325.5 L685.9,325.5 L681.0,325.5 L676.0,325.5 L671.1,325.5 L666.1,325.5 L661.1,325.6 L656.2,325.6 L651.2,325.7 L646.2,325.6 L641.3,325.5 L636.3,325.4 L631.3,325.3 L626.4,325.2 L621.4,325.1 L616.5,325.0 L611.5,324.9 L606.5,324.9 L601.6,324.8 L596.6,324.8 L591.6,324.7 L586.7,324.7 L581.7,324.8 L576.7,324.3 L571.8,323.7 L566.8,323.1 L561.9,322.5 L556.9,322.0 L551.9,321.4 L547.0,320.9 L542.0,320.4Z" fill="#0c6ed0" />
<path d="M585.0,303.9 L590.0,303.6 L595.0,303.3 L600.0,303.0 L605.0,302.8 L610.0,302.5 L615.0,302.3 L620.0,302.1 L625.0,301.9 L630.0,301.7 L635.0,301.6 L640.0,301.4 L645.0,301.3 L650.0,301.2 L655.0,301.1 L660.0,301.1 L665.0,301.0 L670.0,301.0 L675.0,301.0 L680.0,301.0 L685.0,301.0 L690.0,301.0 L695.0,301.1 L700.0,301.1 L705.0,301.2 L710.0,301.3 L715.0,301.4 L720.0,301.6 L725.0,301.7 L730.0,301.9 L735.0,302.1 L740.0,302.3 L745.0,302.5 L750.0,302.7 L755.0,303.0 L760.0,303.2 L765.0,303.5 L770.0,303.8 L775.0,304.1 L780.0,304.5 L785.0,304.8 L790.0,305.2 L795.0,305.6 L800.0,306.0 L805.0,306.4 L805.0,317.4 L800.0,318.3 L795.0,319.2 L790.0,320.2 L785.0,320.4 L780.0,320.6 L775.0,320.9 L770.0,321.2 L765.0,321.4 L760.0,321.7 L755.0,321.5 L750.0,321.4 L745.0,321.2 L740.0,321.0 L735.0,320.9 L730.0,320.8 L725.0,320.7 L720.0,320.6 L715.0,320.5 L710.0,320.4 L705.0,320.3 L700.0,320.3 L695.0,320.2 L690.0,320.2 L685.0,320.2 L680.0,320.3 L675.0,320.3 L670.0,320.3 L665.0,320.4 L660.0,320.5 L655.0,320.6 L650.0,320.7 L645.0,320.5 L640.0,320.3 L635.0,320.1 L630.0,319.9 L625.0,319.7 L620.0,319.6 L615.0,319.3 L610.0,319.0 L605.0,318.8 L600.0,318.5 L595.0,318.3 L590.0,318.1 L585.0,317.9Z" fill="#0c5ac6" />
<path d="M290.0,387.8 L295.0,386.2 L300.0,384.6 L305.0,383.0 L310.0,381.5 L315.0,379.9 L320.0,378.4 L325.0,377.1 L330.0,375.8 L335.0,374.5 L340.0,373.2 L345.0,372.0 L350.0,370.8 L355.0,369.5 L360.0,368.4 L365.0,367.2 L370.0,366.0 L375.0,364.9 L380.0,363.8 L385.0,362.7 L390.0,361.6 L395.0,360.5 L400.0,359.5 L405.0,358.5 L410.0,357.5 L415.0,356.5 L420.0,355.5 L425.0,354.6 L430.0,353.7 L435.0,352.7 L440.0,351.9 L445.0,351.0 L450.0,350.1 L455.0,349.3 L460.0,348.5 L465.0,347.7 L470.0,346.9 L475.0,346.1 L480.0,345.4 L485.0,344.7 L490.0,343.9 L495.0,343.3 L500.0,342.6 L505.0,341.9 L510.0,341.3 L515.0,340.7 L520.0,340.1 L525.0,339.5 L530.0,338.9 L535.0,338.4 L540.0,337.8 L545.0,337.3 L550.0,336.8 L555.0,336.4 L560.0,335.9 L565.0,335.5 L570.0,335.0 L575.0,334.6 L580.0,334.2 L585.0,333.9 L590.0,333.5 L595.0,333.2 L600.0,332.8 L605.0,332.5 L610.0,332.3 L615.0,332.0 L620.0,331.7 L625.0,331.5 L630.0,331.3 L635.0,331.1 L640.0,330.9 L645.0,330.7 L650.0,330.6 L655.0,330.5 L660.0,330.3 L665.0,330.2 L670.0,330.2 L675.0,330.1 L680.0,330.0 L685.0,330.0 L690.0,330.0 L695.0,330.0 L700.0,330.0 L705.0,330.0 L710.0,330.1 L715.0,330.2 L720.0,330.2 L725.0,330.3 L730.0,330.5 L735.0,330.6 L740.0,330.7 L745.0,330.9 L750.0,331.1 L755.0,331.3 L760.0,331.5 L765.0,331.7 L770.0,332.0 L775.0,332.2 L780.0,332.5 L785.0,332.8 L790.0,333.1 L795.0,333.4 L800.0,333.8 L800.0,337.2 L795.0,336.9 L790.0,336.6 L785.0,336.4 L780.0,336.2 L775.0,336.0 L770.0,335.8 L765.0,335.6 L760.0,335.4 L755.0,335.3 L750.0,335.1 L745.0,335.0 L740.0,334.9 L735.0,334.8 L730.0,334.7 L725.0,334.7 L720.0,334.6 L715.0,334.6 L710.0,334.6 L705.0,334.6 L700.0,334.6 L695.0,334.6 L690.0,334.6 L685.0,334.7 L680.0,334.8 L675.0,334.8 L670.0,334.9 L665.0,335.1 L660.0,335.2 L655.0,335.3 L650.0,335.5 L645.0,335.7 L640.0,335.9 L635.0,336.1 L630.0,336.3 L625.0,336.5 L620.0,336.8 L615.0,337.1 L610.0,337.3 L605.0,337.6 L600.0,338.0 L595.0,338.3 L590.0,338.7 L585.0,339.0 L580.0,339.4 L575.0,339.8 L570.0,340.2 L565.0,340.7 L560.0,341.1 L555.0,341.6 L550.0,342.1 L545.0,342.6 L540.0,343.1 L535.0,343.6 L530.0,344.2 L525.0,344.7 L520.0,345.3 L515.0,345.9 L510.0,346.6 L505.0,347.2 L500.0,347.8 L495.0,348.5 L490.0,349.2 L485.0,349.9 L480.0,350.6 L475.0,351.4 L470.0,352.1 L465.0,352.9 L460.0,353.7 L455.0,354.5 L450.0,355.4 L445.0,356.2 L440.0,357.1 L435.0,358.0 L430.0,358.9 L425.0,359.8 L420.0,360.7 L415.0,361.7 L410.0,362.7 L405.0,363.7 L400.0,364.7 L395.0,365.7 L390.0,366.8 L385.0,367.9 L380.0,368.9 L375.0,370.1 L370.0,371.2 L365.0,372.3 L360.0,373.5 L355.0,374.7 L350.0,375.9 L345.0,377.1 L340.0,378.4 L335.0,379.6 L330.0,380.9 L325.0,382.0 L320.0,383.0 L315.0,384.1 L310.0,385.2 L305.0,386.4 L300.0,387.5 L295.0,388.7 L290.0,389.9Z" fill="#10c0e0" />
<path d="M310.0,383.1 L315.0,381.6 L320.0,380.0 L325.0,378.5 L330.0,377.0 L335.0,375.5 L340.0,374.0 L345.0,372.6 L350.0,371.2 L355.0,369.7 L360.0,368.4 L365.0,367.2 L370.0,366.0 L375.0,364.9 L380.0,363.8 L385.0,362.7 L390.0,361.6 L395.0,360.5 L400.0,359.5 L405.0,358.5 L410.0,357.5 L415.0,356.5 L420.0,355.5 L425.0,354.6 L430.0,353.7 L435.0,352.7 L440.0,351.9 L445.0,351.0 L450.0,350.1 L455.0,349.3 L460.0,348.5 L465.0,347.7 L470.0,346.9 L475.0,346.1 L480.0,345.4 L485.0,344.7 L490.0,343.9 L495.0,343.3 L500.0,342.6 L505.0,341.9 L510.0,341.3 L515.0,340.7 L520.0,340.1 L525.0,339.5 L530.0,338.9 L535.0,338.4 L540.0,337.8 L545.0,337.3 L550.0,336.8 L555.0,336.4 L560.0,335.9 L565.0,335.5 L570.0,335.0 L575.0,334.6 L580.0,334.2 L585.0,333.9 L590.0,333.5 L595.0,333.2 L600.0,332.8 L605.0,332.5 L610.0,332.3 L615.0,332.0 L620.0,331.7 L625.0,331.5 L630.0,331.3 L635.0,331.1 L640.0,330.9 L645.0,330.7 L650.0,330.6 L655.0,330.5 L660.0,330.3 L665.0,330.2 L670.0,330.2 L675.0,330.1 L680.0,330.0 L685.0,330.0 L690.0,330.0 L695.0,330.0 L700.0,330.0 L705.0,330.0 L710.0,330.1 L715.0,330.2 L720.0,330.2 L725.0,330.3 L730.0,330.5 L735.0,330.6 L740.0,330.7 L745.0,330.9 L750.0,331.1 L755.0,331.3 L760.0,331.5 L765.0,331.7 L770.0,332.0 L775.0,332.2 L780.0,332.5 L785.0,332.8 L790.0,333.1 L795.0,333.4 L800.0,333.8 L800.0,337.2 L795.0,336.9 L790.0,336.6 L785.0,336.4 L780.0,336.2 L775.0,336.0 L770.0,335.8 L765.0,335.6 L760.0,335.4 L755.0,335.3 L750.0,335.1 L745.0,335.0 L740.0,334.9 L735.0,334.8 L730.0,334.7 L725.0,334.7 L720.0,334.6 L715.0,334.6 L710.0,334.6 L705.0,334.6 L700.0,334.6 L695.0,334.6 L690.0,334.6 L685.0,334.7 L680.0,334.8 L675.0,334.8 L670.0,334.9 L665.0,335.1 L660.0,335.2 L655.0,335.3 L650.0,335.5 L645.0,335.7 L640.0,335.9 L635.0,336.1 L630.0,336.3 L625.0,336.5 L620.0,336.8 L615.0,337.1 L610.0,337.3 L605.0,337.6 L600.0,338.0 L595.0,338.3 L590.0,338.7 L585.0,339.0 L580.0,339.4 L575.0,339.8 L570.0,340.2 L565.0,340.7 L560.0,341.1 L555.0,341.6 L550.0,342.1 L545.0,342.6 L540.0,343.1 L535.0,343.6 L530.0,344.2 L525.0,344.7 L520.0,345.3 L515.0,345.9 L510.0,346.6 L505.0,347.2 L500.0,347.8 L495.0,348.5 L490.0,349.2 L485.0,349.9 L480.0,350.6 L475.0,351.4 L470.0,352.1 L465.0,352.9 L460.0,353.7 L455.0,354.5 L450.0,355.4 L445.0,356.2 L440.0,357.1 L435.0,358.0 L430.0,358.9 L425.0,359.8 L420.0,360.7 L415.0,361.7 L410.0,362.7 L405.0,363.7 L400.0,364.7 L395.0,365.7 L390.0,366.8 L385.0,367.9 L380.0,368.9 L375.0,370.1 L370.0,371.2 L365.0,372.3 L360.0,373.5 L355.0,374.5 L350.0,375.5 L345.0,376.5 L340.0,377.6 L335.0,378.6 L330.0,379.7 L325.0,380.8 L320.0,381.9 L315.0,383.1 L310.0,384.2Z" fill="#1098dc" />
<path d="M290.0,389.9 L295.0,388.4 L300.0,387.0 L305.0,385.6 L310.0,384.2 L315.0,382.9 L320.0,381.5 L325.0,380.2 L330.0,378.9 L335.0,377.6 L340.0,376.4 L345.0,375.1 L350.0,373.9 L355.0,372.7 L360.0,371.5 L365.0,370.3 L370.0,369.2 L375.0,368.1 L380.0,366.9 L385.0,365.9 L390.0,364.8 L395.0,363.7 L400.0,362.7 L405.0,361.7 L410.0,360.7 L415.0,359.7 L420.0,358.7 L425.0,357.8 L430.0,356.9 L435.0,356.0 L440.0,355.1 L445.0,354.2 L450.0,353.4 L455.0,352.5 L460.0,351.7 L465.0,350.9 L470.0,350.1 L475.0,349.4 L480.0,348.6 L485.0,347.9 L490.0,347.2 L495.0,346.5 L500.0,345.8 L505.0,345.2 L510.0,344.6 L515.0,343.9 L520.0,343.3 L525.0,342.7 L530.0,342.2 L535.0,341.6 L540.0,341.1 L545.0,340.6 L550.0,340.1 L555.0,339.6 L560.0,339.1 L565.0,338.7 L570.0,338.2 L575.0,337.8 L580.0,337.4 L585.0,337.0 L590.0,336.7 L595.0,336.3 L600.0,336.0 L605.0,335.6 L610.0,335.3 L615.0,335.1 L620.0,334.8 L625.0,334.5 L630.0,334.3 L635.0,334.1 L640.0,333.9 L645.0,333.7 L650.0,333.5 L655.0,333.3 L660.0,333.2 L665.0,333.1 L670.0,332.9 L675.0,332.8 L680.0,332.8 L685.0,332.7 L690.0,332.6 L695.0,332.6 L700.0,332.6 L705.0,332.6 L710.0,332.6 L715.0,332.6 L720.0,332.6 L725.0,332.7 L730.0,332.7 L735.0,332.8 L740.0,332.9 L745.0,333.0 L750.0,333.1 L755.0,333.3 L760.0,333.4 L765.0,333.6 L770.0,333.8 L775.0,334.0 L780.0,334.2 L785.0,334.4 L790.0,334.6 L795.0,334.9 L800.0,335.2 L800.0,345.2 L795.0,345.1 L790.0,345.1 L785.0,345.2 L780.0,345.2 L775.0,345.3 L770.0,345.5 L765.0,345.7 L760.0,345.9 L755.0,346.0 L750.0,346.0 L745.0,346.1 L740.0,346.2 L735.0,346.3 L730.0,346.4 L725.0,346.5 L720.0,346.6 L715.0,346.6 L710.0,346.6 L705.0,346.7 L700.0,346.7 L695.0,346.8 L690.0,346.8 L685.0,346.9 L680.0,347.0 L675.0,347.2 L670.0,347.3 L665.0,347.4 L660.0,347.6 L655.0,347.8 L650.0,348.0 L645.0,348.2 L640.0,348.4 L635.0,348.7 L630.0,348.9 L625.0,349.2 L620.0,349.5 L615.0,349.8 L610.0,350.1 L605.0,350.5 L600.0,350.8 L595.0,351.2 L590.0,351.6 L585.0,352.0 L580.0,352.4 L575.0,352.6 L570.0,352.7 L565.0,352.9 L560.0,353.1 L555.0,353.3 L550.0,353.6 L545.0,353.8 L540.0,354.1 L535.0,354.4 L530.0,354.7 L525.0,355.0 L520.0,355.3 L515.0,355.8 L510.0,356.3 L505.0,356.8 L500.0,357.3 L495.0,357.9 L490.0,358.5 L485.0,359.0 L480.0,359.6 L475.0,360.3 L470.0,360.9 L465.0,361.5 L460.0,362.2 L455.0,363.0 L450.0,363.8 L445.0,364.6 L440.0,365.4 L435.0,366.3 L430.0,367.1 L425.0,368.0 L420.0,368.9 L415.0,369.8 L410.0,370.8 L405.0,371.7 L400.0,372.7 L395.0,373.2 L390.0,373.8 L385.0,374.4 L380.0,374.9 L375.0,375.6 L370.0,376.2 L365.0,376.8 L360.0,377.5 L355.0,378.2 L350.0,378.9 L345.0,379.6 L340.0,380.4 L335.0,381.4 L330.0,382.5 L325.0,383.6 L320.0,384.7 L315.0,385.9 L310.0,387.0 L305.0,388.2 L300.0,389.4 L295.0,390.6 L290.0,391.9Z" fill="#10c0dc" />
<path d="M320.0,381.5 L325.0,380.2 L330.0,378.9 L335.0,377.6 L340.0,376.4 L345.0,375.1 L350.0,373.9 L355.0,372.7 L360.0,371.5 L365.0,370.3 L370.0,369.2 L375.0,368.1 L380.0,366.9 L385.0,365.9 L390.0,364.8 L395.0,363.7 L400.0,362.7 L405.0,361.7 L410.0,360.7 L415.0,359.7 L420.0,358.7 L425.0,357.8 L430.0,356.9 L435.0,356.0 L440.0,355.1 L445.0,354.2 L450.0,353.4 L455.0,352.5 L460.0,351.7 L465.0,350.9 L470.0,350.1 L475.0,349.4 L480.0,348.6 L485.0,347.9 L490.0,347.2 L495.0,346.5 L500.0,345.8 L505.0,345.2 L510.0,344.6 L515.0,343.9 L520.0,343.3 L525.0,342.7 L530.0,342.2 L535.0,341.6 L540.0,341.1 L545.0,340.6 L550.0,340.1 L555.0,339.6 L560.0,339.1 L565.0,338.7 L570.0,338.2 L575.0,337.8 L580.0,337.4 L585.0,337.0 L590.0,336.7 L595.0,336.3 L600.0,336.0 L605.0,335.6 L610.0,335.3 L615.0,335.1 L620.0,334.8 L625.0,334.5 L630.0,334.3 L635.0,334.1 L640.0,333.9 L645.0,333.7 L650.0,333.5 L655.0,333.3 L660.0,333.2 L665.0,333.1 L670.0,332.9 L675.0,332.8 L680.0,332.8 L685.0,332.7 L690.0,332.6 L695.0,332.6 L700.0,332.6 L705.0,332.6 L710.0,332.6 L715.0,332.6 L720.0,332.6 L725.0,332.7 L730.0,332.7 L735.0,332.8 L740.0,332.9 L745.0,333.0 L750.0,333.1 L755.0,333.3 L760.0,333.4 L765.0,333.6 L770.0,333.8 L775.0,334.0 L780.0,334.2 L785.0,334.4 L790.0,334.6 L795.0,334.9 L800.0,335.2 L800.0,340.2 L795.0,340.1 L790.0,340.1 L785.0,340.2 L780.0,340.2 L775.0,340.2 L770.0,340.3 L765.0,340.4 L760.0,340.4 L755.0,340.5 L750.0,340.6 L745.0,340.8 L740.0,340.9 L735.0,341.1 L730.0,341.2 L725.0,341.4 L720.0,341.6 L715.0,341.7 L710.0,341.7 L705.0,341.8 L700.0,341.9 L695.0,342.0 L690.0,342.1 L685.0,342.2 L680.0,342.3 L675.0,342.5 L670.0,342.7 L665.0,342.8 L660.0,343.0 L655.0,343.3 L650.0,343.5 L645.0,343.7 L640.0,343.9 L635.0,344.1 L630.0,344.3 L625.0,344.5 L620.0,344.8 L615.0,345.1 L610.0,345.3 L605.0,345.6 L600.0,346.0 L595.0,346.3 L590.0,346.7 L585.0,347.0 L580.0,347.4 L575.0,347.6 L570.0,347.9 L565.0,348.2 L560.0,348.4 L555.0,348.7 L550.0,349.1 L545.0,349.4 L540.0,349.8 L535.0,350.1 L530.0,350.5 L525.0,350.9 L520.0,351.3 L515.0,351.8 L510.0,352.4 L505.0,352.9 L500.0,353.5 L495.0,354.1 L490.0,354.7 L485.0,355.3 L480.0,356.0 L475.0,356.6 L470.0,357.3 L465.0,358.0 L460.0,358.7 L455.0,359.5 L450.0,360.4 L445.0,361.2 L440.0,362.1 L435.0,363.0 L430.0,363.9 L425.0,364.8 L420.0,365.7 L415.0,366.7 L410.0,367.7 L405.0,368.7 L400.0,369.7 L395.0,370.4 L390.0,371.1 L385.0,371.9 L380.0,372.6 L375.0,373.4 L370.0,374.2 L365.0,375.0 L360.0,375.8 L355.0,376.7 L350.0,377.6 L345.0,378.5 L340.0,379.4 L335.0,380.4 L330.0,381.4 L325.0,382.5 L320.0,383.5Z" fill="#10a8dc" />
<path d="M380.0,366.9 L385.0,365.9 L390.0,364.8 L395.0,363.7 L400.0,362.7 L405.0,361.7 L410.0,360.7 L415.0,359.7 L420.0,358.7 L425.0,357.8 L430.0,356.9 L435.0,356.0 L440.0,355.1 L445.0,354.2 L450.0,353.4 L455.0,352.5 L460.0,351.7 L465.0,350.9 L470.0,350.1 L475.0,349.4 L480.0,348.6 L485.0,347.9 L490.0,347.2 L495.0,346.5 L500.0,345.8 L505.0,345.2 L510.0,344.6 L515.0,343.9 L520.0,343.3 L525.0,342.7 L530.0,342.2 L535.0,341.6 L540.0,341.1 L545.0,340.6 L550.0,340.1 L555.0,339.6 L560.0,339.1 L565.0,338.7 L570.0,338.2 L575.0,337.8 L580.0,337.4 L585.0,337.0 L590.0,336.7 L595.0,336.3 L600.0,336.0 L605.0,335.6 L610.0,335.3 L615.0,335.1 L620.0,334.8 L625.0,334.5 L630.0,334.3 L635.0,334.1 L640.0,333.9 L645.0,333.7 L650.0,333.5 L655.0,333.3 L660.0,333.2 L665.0,333.1 L670.0,332.9 L675.0,332.8 L680.0,332.8 L685.0,332.7 L690.0,332.6 L695.0,332.6 L700.0,332.6 L705.0,332.6 L710.0,332.6 L715.0,332.6 L720.0,332.6 L725.0,332.7 L730.0,332.7 L735.0,332.8 L740.0,332.9 L745.0,333.0 L750.0,333.1 L755.0,333.3 L760.0,333.4 L765.0,333.6 L770.0,333.8 L775.0,334.0 L780.0,334.2 L785.0,334.4 L790.0,334.6 L795.0,334.9 L800.0,335.2 L800.0,338.2 L795.0,338.1 L790.0,338.1 L785.0,338.2 L780.0,338.2 L775.0,338.1 L770.0,337.9 L765.0,337.9 L760.0,337.8 L755.0,337.7 L750.0,337.6 L745.0,337.6 L740.0,337.6 L735.0,337.6 L730.0,337.6 L725.0,337.6 L720.0,337.6 L715.0,337.7 L710.0,337.7 L705.0,337.8 L700.0,337.9 L695.0,338.0 L690.0,338.1 L685.0,338.2 L680.0,338.3 L675.0,338.5 L670.0,338.7 L665.0,338.8 L660.0,339.0 L655.0,339.3 L650.0,339.5 L645.0,339.7 L640.0,339.9 L635.0,340.1 L630.0,340.3 L625.0,340.5 L620.0,340.8 L615.0,341.1 L610.0,341.3 L605.0,341.6 L600.0,342.0 L595.0,342.3 L590.0,342.7 L585.0,343.0 L580.0,343.4 L575.0,343.6 L570.0,343.9 L565.0,344.2 L560.0,344.4 L555.0,344.7 L550.0,345.1 L545.0,345.4 L540.0,345.8 L535.0,346.1 L530.0,346.5 L525.0,346.9 L520.0,347.3 L515.0,347.9 L510.0,348.6 L505.0,349.2 L500.0,349.8 L495.0,350.5 L490.0,351.2 L485.0,351.9 L480.0,352.6 L475.0,353.4 L470.0,354.1 L465.0,354.9 L460.0,355.7 L455.0,356.5 L450.0,357.4 L445.0,358.2 L440.0,359.1 L435.0,360.0 L430.0,360.9 L425.0,361.8 L420.0,362.7 L415.0,363.7 L410.0,364.7 L405.0,365.7 L400.0,366.7 L395.0,367.2 L390.0,367.8 L385.0,368.4 L380.0,368.9Z" fill="#1098d8" />
<path d="M80.0,490.9 L85.0,489.1 L90.0,487.2 L95.0,485.4 L100.0,483.5 L105.0,481.7 L110.0,479.9 L115.0,478.1 L120.0,476.2 L125.0,474.4 L130.0,472.6 L135.0,470.8 L140.0,469.0 L145.0,467.2 L150.0,465.4 L155.0,463.6 L160.0,461.9 L165.0,460.1 L170.0,458.4 L175.0,456.6 L180.0,454.9 L185.0,453.2 L190.0,451.4 L195.0,449.7 L200.0,448.0 L205.0,446.4 L210.0,444.7 L215.0,443.0 L220.0,441.4 L225.0,439.8 L230.0,438.1 L235.0,436.5 L240.0,434.9 L245.0,433.4 L250.0,431.8 L255.0,430.2 L260.0,428.7 L265.0,427.2 L270.0,425.7 L275.0,424.2 L280.0,422.7 L285.0,421.2 L290.0,419.8 L295.0,418.4 L300.0,417.0 L305.0,415.6 L310.0,414.2 L315.0,412.8 L320.0,411.5 L325.0,410.1 L330.0,408.8 L335.0,407.5 L340.0,406.2 L345.0,405.0 L350.0,403.7 L355.0,402.5 L360.0,401.3 L365.0,400.1 L370.0,398.9 L375.0,397.8 L380.0,396.7 L385.0,395.5 L390.0,394.5 L395.0,393.4 L400.0,392.3 L405.0,391.3 L410.0,390.3 L415.0,389.3 L420.0,388.3 L425.0,387.3 L430.0,386.4 L435.0,385.5 L440.0,384.6 L445.0,383.7 L450.0,382.8 L455.0,382.0 L460.0,381.1 L465.0,380.3 L470.0,379.5 L475.0,378.7 L480.0,377.9 L485.0,377.1 L490.0,376.4 L495.0,375.7 L500.0,374.9 L505.0,374.2 L510.0,373.6 L515.0,372.9 L520.0,372.2 L525.0,371.6 L530.0,371.0 L535.0,370.3 L540.0,369.7 L545.0,369.2 L550.0,368.6 L555.0,368.0 L560.0,367.5 L565.0,367.0 L570.0,366.4 L575.0,365.9 L580.0,365.4 L585.0,365.0 L590.0,364.5 L595.0,364.1 L600.0,363.7 L605.0,363.3 L610.0,362.9 L615.0,362.5 L620.0,362.1 L625.0,361.7 L630.0,361.4 L635.0,361.0 L640.0,360.7 L645.0,360.3 L650.0,360.0 L655.0,359.8 L660.0,359.5 L665.0,359.3 L670.0,359.1 L675.0,358.9 L680.0,358.6 L685.0,358.4 L690.0,358.2 L695.0,358.1 L700.0,357.9 L705.0,357.7 L710.0,357.5 L715.0,357.4 L720.0,357.2 L725.0,356.9 L730.0,356.6 L735.0,356.4 L740.0,356.1 L745.0,355.8 L750.0,355.5 L755.0,355.2 L760.0,355.0 L765.0,354.7 L770.0,354.5 L775.0,354.3 L780.0,354.0 L785.0,353.8 L790.0,353.6 L790.0,360.1 L785.0,360.2 L780.0,360.4 L775.0,360.5 L770.0,360.7 L765.0,360.8 L760.0,361.0 L755.0,361.1 L750.0,361.3 L745.0,361.5 L740.0,361.7 L735.0,361.9 L730.0,362.0 L725.0,362.2 L720.0,362.4 L715.0,362.6 L710.0,362.9 L705.0,363.1 L700.0,363.3 L695.0,363.5 L690.0,363.8 L685.0,364.0 L680.0,364.3 L675.0,364.6 L670.0,364.8 L665.0,365.1 L660.0,365.4 L655.0,365.7 L650.0,366.0 L645.0,366.3 L640.0,366.7 L635.0,367.0 L630.0,367.4 L625.0,367.7 L620.0,368.1 L615.0,368.5 L610.0,368.9 L605.0,369.3 L600.0,369.7 L595.0,370.1 L590.0,370.5 L585.0,371.0 L580.0,371.4 L575.0,371.9 L570.0,372.4 L565.0,372.9 L560.0,373.4 L555.0,373.9 L550.0,374.5 L545.0,375.0 L540.0,375.6 L535.0,376.2 L530.0,376.8 L525.0,377.4 L520.0,378.0 L515.0,378.6 L510.0,379.3 L505.0,379.9 L500.0,380.6 L495.0,381.3 L490.0,382.0 L485.0,382.8 L480.0,383.5 L475.0,384.3 L470.0,385.0 L465.0,385.8 L460.0,386.6 L455.0,387.5 L450.0,388.3 L445.0,389.2 L440.0,390.1 L435.0,391.0 L430.0,391.9 L425.0,392.8 L420.0,393.8 L415.0,394.8 L410.0,395.8 L405.0,396.8 L400.0,397.8 L395.0,398.9 L390.0,400.0 L385.0,401.0 L380.0,402.2 L375.0,403.3 L370.0,404.4 L365.0,405.6 L360.0,406.8 L355.0,408.0 L350.0,409.2 L345.0,410.5 L340.0,411.7 L335.0,413.0 L330.0,414.3 L325.0,415.6 L320.0,417.0 L315.0,418.3 L310.0,419.7 L305.0,421.1 L300.0,422.5 L295.0,423.9 L290.0,425.3 L285.0,426.7 L280.0,428.2 L275.0,429.7 L270.0,431.2 L265.0,432.7 L260.0,434.2 L255.0,435.7 L250.0,437.3 L245.0,438.9 L240.0,440.4 L235.0,442.0 L230.0,443.6 L225.0,445.3 L220.0,446.9 L215.0,448.5 L210.0,450.2 L205.0,451.9 L200.0,453.5 L195.0,455.2 L190.0,456.9 L185.0,458.7 L180.0,460.4 L175.0,462.1 L170.0,463.9 L165.0,465.6 L160.0,467.4 L155.0,469.1 L150.0,470.9 L145.0,472.7 L140.0,474.5 L135.0,476.3 L130.0,478.1 L125.0,479.9 L120.0,481.7 L115.0,483.6 L110.0,485.4 L105.0,487.2 L100.0,489.0 L95.0,490.9 L90.0,492.7 L85.0,494.6 L80.0,496.4Z" fill="#e8c000" />
<path d="M392,338 C388,346 390,354 396,362 L440,355 C437,348 437,340 438,332 L412,332 Z" fill="url(#ob)"/>
<path d="M406,375 C410,368 420,364 438,366 C444,368 446,372 442,376 C436,380 438,386 446,390 L410,394 C406,388 402,382 406,375Z" fill="url(#yb)"/>
<path d="M338,392 C342,387 352,386 360,385 C364,385 368,385 369,387 C364,390 356,392 346,394 L339,394Z" fill="#e0b800"/>
<path d="M596,343 L604,338.5 L622,335.5 L614,341Z" fill="#c6c6ce"/>
<path d="M686,347 L692,343.5 L702,342.5 L697,346Z" fill="#c6c6ce"/>
<path d="M719,340.5 L724,337 L734,335 L730,338.5Z" fill="#c6c6ce"/>
<path d="M723,345 L727,342 L738,339.5 L734,343Z" fill="#c6c6ce"/>
<path d="M736,339 L741,337 L751,335.5 L747,338Z" fill="#c6c6ce"/>
<path d="M726,358 L734,357.5 L756,348.5 L754.5,343 L746,345Z" fill="#c6c6ce"/>
<path d="M230,437 C236,435 240,434 244,434 C240,436 236,437 231,438Z" fill="#c6c6ce"/>
<path d="M800,300 L840,330 L880,400 L868,400 C855,383 842,366 826,352 C818,346 810,341 800,338Z" fill="url(#tipU)"/>
<path d="M808,340 C820,346 832,355 843,366 C852,376 860,386 868,398 L870,420 L800,380 L800,352Z" fill="url(#tipL)"/>
<path d="M793,340 C790,346 794,352 801,356 L806,350 C804,346 800,342 795,339Z" fill="#10c0dc"/>
<path d="M804.8,343 C810,344 815,346 818,348 L816,350 C812,348 808,346 804.8,345Z" fill="#e0c000"/>
<path d="M790,352 L800,351 L806,358 L796,358Z" fill="#e0c000"/>
</g>
<defs><pattern id="hatch" patternUnits="userSpaceOnUse" width="2.3" height="4" patternTransform="rotate(-68)"><rect x="0" y="0" width="1.2" height="4" fill="#000" fill-opacity="0.8"/></pattern><pattern id="hatchB" patternUnits="userSpaceOnUse" width="2.4" height="4" patternTransform="rotate(-66)"><rect x="0" y="0" width="1.4" height="4" fill="#000" fill-opacity="0.85"/></pattern></defs>
<defs><linearGradient id="yBg" gradientUnits="userSpaceOnUse" x1="0" y1="0" x2="997" y2="0"><stop offset="0" stop-color="#e8c000"/><stop offset="0.8" stop-color="#e8c000"/><stop offset="0.84" stop-color="#f08000"/><stop offset="0.87" stop-color="#e83000"/><stop offset="1" stop-color="#e02000"/></linearGradient></defs>
<path d="M30.2,557.6 L30.9,556.1 L32.0,554.2 L33.3,551.8 L34.6,549.3 L36.1,546.7 L37.5,544.1 L38.9,541.6 L40.4,538.9 L41.9,536.2 L43.4,533.4 L44.9,530.7 L46.4,528.2 L47.7,525.9 L48.9,523.6 L50.1,521.3 L51.3,519.1 L52.6,516.9 L54.1,514.7 L55.7,512.6 L57.4,510.6 L59.2,508.6 L61.0,506.8 L62.6,505.2 L64.0,503.8 L65.2,502.5 L66.2,501.5 L67.1,500.6 L68.1,499.7 L69.1,498.8 L70.3,497.9 L71.6,497.1 L72.9,496.3 L74.3,495.5 L75.7,494.8 L77.2,494.0 L78.7,493.3 L80.3,492.6 L82.0,491.9 L83.7,491.2 L85.4,490.6 L87.1,489.9 L88.7,489.3 L90.4,488.6 L92.0,487.9 L93.7,487.3 L95.3,486.6 L97.0,486.0 L98.6,485.3 L100.3,484.7 L102.0,484.1 L103.6,483.5 L105.3,482.8 L107.0,482.2 L108.6,481.6 L110.3,481.0 L112.0,480.4 L113.6,479.8 L115.3,479.2 L117.0,478.6 L118.6,478.0 L120.3,477.4 L122.0,476.8 L123.6,476.2 L125.3,475.6 L127.0,475.0 L128.6,474.4 L130.3,473.8 L132.0,473.2 L133.7,472.6 L135.3,472.0 L137.0,471.4 L138.7,470.8 L140.3,470.2 L142.0,469.6 L143.7,469.0 L145.3,468.4 L147.0,467.8 L148.7,467.2 L150.3,466.6 L152.0,466.0 L153.7,465.4 L155.3,464.8 L157.0,464.2 L158.7,463.7 L160.4,463.1 L162.0,462.5 L163.7,461.9 L165.4,461.3 L167.0,460.7 L168.7,460.1 L170.4,459.6 L172.0,459.0 L173.7,458.4 L175.4,457.8 L177.0,457.2 L178.7,456.7 L180.4,456.1 L182.1,455.5 L183.7,454.9 L185.4,454.4 L187.1,453.8 L188.7,453.2 L190.4,452.7 L192.1,452.1 L193.7,451.5 L195.4,451.0 L197.1,450.4 L198.7,449.8 L200.4,449.3 L202.1,448.7 L203.8,448.1 L205.4,447.6 L207.1,447.0 L208.8,446.5 L210.4,445.9 L212.1,445.4 L213.8,444.8 L215.4,444.3 L217.1,443.7 L218.8,443.2 L220.5,442.6 L222.1,442.1 L223.8,441.5 L225.5,441.0 L227.1,440.5 L228.8,439.9 L230.5,439.4 L232.1,438.9 L233.8,438.3 L235.5,437.8 L237.2,437.3 L238.8,436.7 L240.5,436.2 L242.2,435.7 L243.8,435.2 L245.5,434.6 L247.2,434.1 L248.8,433.6 L250.5,433.1 L252.2,432.6 L253.9,432.0 L255.5,431.5 L257.2,431.0 L258.9,430.5 L260.5,430.0 L262.2,429.5 L263.9,429.0 L265.6,428.5 L267.2,428.0 L268.9,427.5 L270.6,427.0 L272.2,426.5 L273.9,426.0 L275.6,425.5 L277.2,425.0 L278.9,424.5 L280.6,424.0 L282.3,423.5 L283.9,423.1 L285.6,422.6 L287.3,422.1 L288.9,421.6 L290.6,421.1 L292.3,420.7 L294.0,420.2 L295.6,419.7 L297.3,419.2 L299.0,418.8 L300.6,418.3 L302.3,417.8 L304.0,417.4 L305.6,416.9 L307.3,416.5 L309.0,416.0 L310.7,415.5 L312.3,415.1 L314.0,414.6 L315.7,414.2 L317.3,413.7 L319.0,413.3 L320.7,412.8 L322.4,412.4 L324.0,412.0 L325.7,411.5 L327.4,411.1 L329.0,410.6 L330.7,410.2 L332.4,409.8 L334.1,409.3 L335.7,408.9 L337.4,408.5 L339.1,408.1 L340.7,407.6 L342.4,407.2 L344.1,406.8 L345.7,406.4 L347.4,406.0 L349.1,405.6 L350.8,405.1 L352.4,404.7 L354.1,404.3 L355.8,403.9 L357.4,403.5 L359.1,403.1 L360.8,402.7 L362.5,402.3 L364.1,401.9 L365.8,401.5 L367.5,401.2 L369.1,400.8 L370.8,400.4 L372.5,400.0 L374.2,399.6 L375.8,399.2 L377.5,398.9 L379.2,398.5 L380.8,398.1 L382.5,397.7 L384.2,397.4 L385.9,397.0 L387.5,396.6 L389.2,396.3 L390.9,395.9 L392.5,395.6 L394.2,395.2 L395.9,394.9 L397.6,394.5 L399.2,394.2 L400.9,393.8 L402.6,393.5 L404.2,393.1 L405.9,392.8 L407.6,392.4 L409.3,392.1 L410.9,391.8 L412.6,391.4 L414.3,391.1 L415.9,390.8 L417.6,390.5 L419.3,390.1 L421.0,389.8 L422.6,389.5 L424.3,389.2 L426.0,388.9 L427.6,388.5 L429.3,388.2 L431.0,387.9 L432.7,387.6 L434.3,387.3 L436.0,387.0 L437.7,386.7 L439.3,386.4 L441.0,386.1 L442.7,385.8 L444.4,385.5 L446.0,385.2 L447.7,385.0 L449.4,384.7 L451.0,384.4 L452.7,384.1 L454.4,383.8 L456.1,383.5 L457.7,383.3 L459.4,383.0 L461.1,382.7 L462.7,382.5 L464.4,382.2 L466.1,381.9 L467.8,381.7 L469.4,381.4 L471.1,381.1 L472.8,380.9 L474.4,380.6 L476.1,380.4 L477.8,380.1 L479.5,379.9 L481.1,379.6 L482.8,379.4 L484.5,379.1 L486.1,378.9 L487.8,378.6 L489.5,378.4 L491.1,378.1 L492.8,377.9 L494.5,377.7 L496.2,377.4 L497.8,377.2 L499.5,377.0 L501.2,376.8 L502.8,376.5 L504.5,376.3 L506.2,376.1 L507.9,375.9 L509.5,375.6 L511.2,375.4 L512.9,375.2 L514.5,375.0 L516.2,374.8 L517.9,374.6 L519.5,374.4 L521.2,374.1 L522.9,373.9 L524.6,373.7 L526.2,373.5 L527.9,373.3 L529.6,373.1 L531.2,372.9 L532.9,372.7 L534.6,372.5 L536.2,372.4 L537.9,372.2 L539.6,372.0 L541.3,371.8 L542.9,371.6 L544.6,371.4 L546.3,371.2 L547.9,371.0 L549.6,370.9 L551.3,370.7 L552.9,370.5 L554.6,370.3 L556.3,370.2 L558.0,370.0 L559.6,369.8 L561.3,369.6 L563.0,369.5 L564.6,369.3 L566.3,369.1 L568.0,369.0 L569.6,368.8 L571.3,368.6 L573.0,368.5 L574.7,368.3 L576.3,368.2 L578.0,368.0 L579.7,367.9 L581.3,367.7 L583.0,367.6 L584.7,367.4 L586.3,367.3 L588.0,367.1 L589.7,367.0 L591.4,366.8 L593.0,366.7 L594.7,366.5 L596.4,366.4 L598.0,366.2 L599.7,366.1 L601.4,366.0 L603.0,365.8 L604.7,365.7 L606.4,365.6 L608.0,365.4 L609.7,365.3 L611.4,365.2 L613.1,365.0 L614.7,364.9 L616.4,364.8 L618.1,364.7 L619.7,364.5 L621.4,364.4 L623.1,364.3 L624.7,364.2 L626.4,364.1 L628.1,363.9 L629.7,363.8 L631.4,363.7 L633.1,363.6 L634.8,363.5 L636.4,363.4 L638.1,363.2 L639.8,363.1 L641.4,363.0 L643.1,362.9 L644.8,362.8 L646.4,362.7 L648.1,362.6 L649.8,362.5 L651.4,362.4 L653.1,362.3 L654.8,362.2 L656.5,362.1 L658.1,362.0 L659.8,361.9 L661.5,361.8 L663.1,361.7 L664.8,361.6 L666.5,361.5 L668.1,361.4 L669.8,361.3 L671.5,361.2 L673.1,361.1 L674.8,361.1 L676.5,361.0 L678.1,360.9 L679.8,360.8 L681.5,360.7 L683.2,360.6 L684.8,360.5 L686.5,360.5 L688.2,360.4 L689.8,360.3 L691.5,360.2 L693.2,360.1 L694.8,360.0 L696.5,360.0 L698.2,359.9 L699.8,359.8 L701.5,359.8 L703.2,359.7 L704.8,359.6 L706.5,359.6 L708.2,359.5 L709.9,359.4 L711.5,359.4 L713.2,359.3 L714.9,359.2 L716.5,359.2 L718.2,359.1 L719.9,359.1 L721.5,359.0 L723.2,359.0 L724.9,358.9 L726.5,358.8 L728.2,358.8 L729.9,358.7 L731.5,358.7 L733.2,358.6 L734.9,358.6 L736.5,358.5 L738.2,358.5 L739.9,358.4 L741.6,358.4 L743.2,358.3 L744.9,358.3 L746.6,358.2 L748.2,358.2 L749.9,358.1 L751.6,358.1 L753.2,358.0 L754.9,358.0 L756.6,357.9 L758.2,357.9 L759.9,357.9 L761.6,357.8 L763.2,357.8 L764.9,357.7 L766.6,357.7 L768.2,357.7 L769.9,357.6 L771.6,357.6 L773.2,357.5 L774.9,357.5 L776.6,357.5 L778.2,357.4 L779.9,357.4 L781.6,357.4 L783.2,357.3 L784.9,357.3 L786.6,357.3 L788.2,357.3 L789.8,357.3 L791.5,357.2 L793.1,357.0 L794.9,356.8 L796.8,356.7 L798.8,356.7 L800.8,356.9 L802.6,357.3 L804.3,357.8 L805.9,358.4 L807.5,359.1 L809.1,359.9 L810.9,360.7 L813.1,361.5 L815.5,362.5 L818.1,363.5 L820.8,364.6 L823.4,365.7 L825.9,366.8 L828.2,367.8 L830.5,368.9 L832.8,369.9 L835.1,371.0 L837.4,372.2 L839.7,373.5 L842.1,375.0 L844.5,376.5 L846.8,378.1 L849.2,379.8 L851.4,381.5 L853.6,383.1 L855.6,384.7 L857.7,386.4 L859.6,388.0 L861.4,389.6 L863.1,391.1 L864.5,392.4 L865.8,393.5 L867.0,394.6 L868.0,395.5 L868.8,396.3 L869.5,396.9 L870.0,397.4 L871.1,396.2 L870.6,395.7 L869.9,395.1 L869.0,394.3 L868.0,393.4 L866.9,392.3 L865.6,391.2 L864.1,389.9 L862.5,388.4 L860.6,386.8 L858.7,385.1 L856.6,383.4 L854.5,381.8 L852.4,380.2 L850.1,378.5 L847.7,376.8 L845.3,375.2 L842.9,373.6 L840.5,372.1 L838.1,370.8 L835.8,369.6 L833.5,368.5 L831.2,367.4 L828.9,366.4 L826.5,365.3 L824.0,364.2 L821.4,363.1 L818.7,362.0 L816.1,361.0 L813.7,360.0 L811.5,359.2 L809.7,358.4 L808.1,357.7 L806.5,357.0 L804.9,356.3 L803.0,355.7 L801.0,355.3 L798.8,355.1 L796.7,355.1 L794.8,355.2 L793.0,355.4 L791.3,355.6 L789.7,355.7 L788.2,355.7 L786.5,355.7 L784.9,355.7 L783.2,355.7 L781.5,355.8 L779.9,355.8 L778.2,355.8 L776.5,355.9 L774.9,355.9 L773.2,355.9 L771.5,356.0 L769.9,356.0 L768.2,356.1 L766.5,356.1 L764.9,356.1 L763.2,356.2 L761.5,356.2 L759.8,356.3 L758.2,356.3 L756.5,356.3 L754.8,356.4 L753.2,356.4 L751.5,356.5 L749.8,356.5 L748.2,356.6 L746.5,356.6 L744.8,356.7 L743.2,356.7 L741.5,356.8 L739.8,356.8 L738.2,356.9 L736.5,356.9 L734.8,357.0 L733.1,357.0 L731.5,357.1 L729.8,357.1 L728.1,357.2 L726.5,357.2 L724.8,357.3 L723.1,357.4 L721.5,357.4 L719.8,357.5 L718.1,357.5 L716.5,357.6 L714.8,357.6 L713.1,357.7 L711.4,357.8 L709.8,357.8 L708.1,357.9 L706.4,358.0 L704.8,358.0 L703.1,358.1 L701.4,358.2 L699.8,358.2 L698.1,358.3 L696.4,358.4 L694.8,358.5 L693.1,358.5 L691.4,358.6 L689.7,358.7 L688.1,358.8 L686.4,358.9 L684.7,358.9 L683.1,359.0 L681.4,359.1 L679.7,359.2 L678.1,359.3 L676.4,359.4 L674.7,359.5 L673.1,359.5 L671.4,359.6 L669.7,359.7 L668.0,359.8 L666.4,359.9 L664.7,360.0 L663.0,360.1 L661.4,360.2 L659.7,360.3 L658.0,360.4 L656.4,360.5 L654.7,360.6 L653.0,360.7 L651.3,360.8 L649.7,360.9 L648.0,361.0 L646.3,361.1 L644.7,361.2 L643.0,361.3 L641.3,361.4 L639.7,361.5 L638.0,361.6 L636.3,361.8 L634.6,361.9 L633.0,362.0 L631.3,362.1 L629.6,362.2 L628.0,362.3 L626.3,362.5 L624.6,362.6 L623.0,362.7 L621.3,362.8 L619.6,362.9 L617.9,363.1 L616.3,363.2 L614.6,363.3 L612.9,363.4 L611.3,363.6 L609.6,363.7 L607.9,363.8 L606.3,364.0 L604.6,364.1 L602.9,364.2 L601.2,364.4 L599.6,364.5 L597.9,364.7 L596.2,364.8 L594.6,364.9 L592.9,365.1 L591.2,365.2 L589.5,365.4 L587.9,365.5 L586.2,365.7 L584.5,365.8 L582.9,366.0 L581.2,366.1 L579.5,366.3 L577.8,366.4 L576.2,366.6 L574.5,366.7 L572.8,366.9 L571.2,367.1 L569.5,367.2 L567.8,367.4 L566.1,367.5 L564.5,367.7 L562.8,367.9 L561.1,368.0 L559.5,368.2 L557.8,368.4 L556.1,368.6 L554.4,368.7 L552.8,368.9 L551.1,369.1 L549.4,369.3 L547.8,369.5 L546.1,369.6 L544.4,369.8 L542.7,370.0 L541.1,370.2 L539.4,370.4 L537.7,370.6 L536.1,370.8 L534.4,371.0 L532.7,371.2 L531.0,371.3 L529.4,371.5 L527.7,371.7 L526.0,371.9 L524.4,372.2 L522.7,372.4 L521.0,372.6 L519.3,372.8 L517.7,373.0 L516.0,373.2 L514.3,373.4 L512.7,373.6 L511.0,373.8 L509.3,374.1 L507.6,374.3 L506.0,374.5 L504.3,374.7 L502.6,374.9 L501.0,375.2 L499.3,375.4 L497.6,375.6 L495.9,375.9 L494.3,376.1 L492.6,376.3 L490.9,376.6 L489.2,376.8 L487.6,377.0 L485.9,377.3 L484.2,377.5 L482.6,377.8 L480.9,378.0 L479.2,378.3 L477.5,378.5 L475.9,378.8 L474.2,379.0 L472.5,379.3 L470.8,379.6 L469.2,379.8 L467.5,380.1 L465.8,380.3 L464.2,380.6 L462.5,380.9 L460.8,381.1 L459.1,381.4 L457.5,381.7 L455.8,382.0 L454.1,382.2 L452.4,382.5 L450.8,382.8 L449.1,383.1 L447.4,383.4 L445.8,383.7 L444.1,384.0 L442.4,384.3 L440.7,384.5 L439.1,384.8 L437.4,385.1 L435.7,385.4 L434.0,385.7 L432.4,386.0 L430.7,386.4 L429.0,386.7 L427.4,387.0 L425.7,387.3 L424.0,387.6 L422.3,387.9 L420.7,388.2 L419.0,388.6 L417.3,388.9 L415.6,389.2 L414.0,389.5 L412.3,389.9 L410.6,390.2 L408.9,390.5 L407.3,390.9 L405.6,391.2 L403.9,391.5 L402.3,391.9 L400.6,392.2 L398.9,392.6 L397.2,392.9 L395.6,393.3 L393.9,393.6 L392.2,394.0 L390.5,394.4 L388.9,394.7 L387.2,395.1 L385.5,395.4 L383.8,395.8 L382.2,396.2 L380.5,396.6 L378.8,396.9 L377.2,397.3 L375.5,397.7 L373.8,398.1 L372.1,398.4 L370.5,398.8 L368.8,399.2 L367.1,399.6 L365.4,400.0 L363.8,400.4 L362.1,400.8 L360.4,401.2 L358.7,401.6 L357.1,402.0 L355.4,402.4 L353.7,402.8 L352.1,403.2 L350.4,403.6 L348.7,404.0 L347.0,404.4 L345.4,404.8 L343.7,405.3 L342.0,405.7 L340.3,406.1 L338.7,406.5 L337.0,406.9 L335.3,407.4 L333.7,407.8 L332.0,408.2 L330.3,408.7 L328.6,409.1 L327.0,409.5 L325.3,410.0 L323.6,410.4 L321.9,410.8 L320.3,411.3 L318.6,411.7 L316.9,412.2 L315.3,412.6 L313.6,413.1 L311.9,413.5 L310.2,414.0 L308.6,414.5 L306.9,414.9 L305.2,415.4 L303.5,415.8 L301.9,416.3 L300.2,416.8 L298.5,417.2 L296.9,417.7 L295.2,418.2 L293.5,418.6 L291.8,419.1 L290.2,419.6 L288.5,420.1 L286.8,420.6 L285.2,421.0 L283.5,421.5 L281.8,422.0 L280.1,422.5 L278.5,423.0 L276.8,423.5 L275.1,424.0 L273.4,424.5 L271.8,425.0 L270.1,425.5 L268.4,425.9 L266.8,426.5 L265.1,427.0 L263.4,427.5 L261.7,428.0 L260.1,428.5 L258.4,429.0 L256.7,429.5 L255.1,430.0 L253.4,430.5 L251.7,431.0 L250.0,431.5 L248.4,432.1 L246.7,432.6 L245.0,433.1 L243.4,433.6 L241.7,434.2 L240.0,434.7 L238.3,435.2 L236.7,435.7 L235.0,436.3 L233.3,436.8 L231.7,437.3 L230.0,437.9 L228.3,438.4 L226.6,438.9 L225.0,439.5 L223.3,440.0 L221.6,440.6 L220.0,441.1 L218.3,441.7 L216.6,442.2 L214.9,442.8 L213.3,443.3 L211.6,443.9 L209.9,444.4 L208.3,445.0 L206.6,445.5 L204.9,446.1 L203.2,446.6 L201.6,447.2 L199.9,447.8 L198.2,448.3 L196.6,448.9 L194.9,449.4 L193.2,450.0 L191.6,450.6 L189.9,451.1 L188.2,451.7 L186.5,452.3 L184.9,452.9 L183.2,453.4 L181.5,454.0 L179.9,454.6 L178.2,455.2 L176.5,455.7 L174.8,456.3 L173.2,456.9 L171.5,457.5 L169.8,458.0 L168.2,458.6 L166.5,459.2 L164.8,459.8 L163.2,460.4 L161.5,461.0 L159.8,461.6 L158.2,462.1 L156.5,462.7 L154.8,463.3 L153.1,463.9 L151.5,464.5 L149.8,465.1 L148.1,465.7 L146.5,466.3 L144.8,466.9 L143.1,467.5 L141.5,468.1 L139.8,468.7 L138.1,469.3 L136.4,469.9 L134.8,470.5 L133.1,471.1 L131.4,471.7 L129.8,472.3 L128.1,472.9 L126.4,473.5 L124.8,474.1 L123.1,474.7 L121.4,475.3 L119.8,475.9 L118.1,476.5 L116.4,477.1 L114.8,477.7 L113.1,478.3 L111.4,478.9 L109.7,479.5 L108.1,480.1 L106.4,480.7 L104.7,481.3 L103.1,482.0 L101.4,482.6 L99.7,483.2 L98.1,483.8 L96.4,484.4 L94.8,485.1 L93.1,485.8 L91.5,486.4 L89.8,487.1 L88.2,487.8 L86.6,488.6 L85.0,489.4 L83.3,490.2 L81.6,491.0 L80.0,491.8 L78.4,492.7 L77.0,493.5 L75.5,494.4 L74.2,495.2 L72.8,496.1 L71.5,497.0 L70.3,497.9 L69.1,498.8 L68.1,499.7 L67.1,500.6 L66.2,501.5 L65.2,502.5 L64.0,503.8 L62.6,505.2 L61.0,506.8 L59.2,508.6 L57.4,510.6 L55.7,512.6 L54.1,514.7 L52.6,516.9 L51.3,519.1 L50.1,521.3 L48.9,523.6 L47.7,525.9 L46.4,528.2 L44.9,530.7 L43.4,533.4 L41.9,536.2 L40.4,538.9 L38.9,541.6 L37.5,544.1 L36.1,546.7 L34.6,549.3 L33.3,551.8 L32.0,554.2 L30.9,556.1 L30.2,557.6Z" fill="url(#yBg)"/>
<path d="M31.5,558.3 L31.6,556.1 L31.6,553.2 L31.8,549.7 L31.9,545.8 L32.1,542.0 L32.5,538.4 L33.0,534.9 L33.6,531.4 L34.2,527.9 L35.0,524.3 L35.7,520.8 L36.5,517.5 L37.3,514.3 L38.1,511.3 L38.9,508.4 L39.8,505.4 L40.7,502.4 L41.7,499.2 L42.7,495.7 L43.9,492.1 L45.0,488.3 L46.2,484.6 L47.4,481.1 L48.5,478.0 L49.6,475.2 L50.7,472.7 L51.8,470.4 L52.9,468.2 L54.0,466.2 L55.1,464.3 L56.2,462.5 L57.4,460.9 L58.6,459.4 L59.8,458.0 L60.9,456.8 L62.0,455.6 L63.0,454.6 L64.0,453.7 L64.9,453.0 L65.8,452.3 L66.9,451.6 L68.0,450.8 L69.3,449.9 L70.6,449.0 L72.0,448.0 L73.4,447.0 L74.9,446.1 L76.5,445.1 L78.1,444.1 L79.8,443.1 L81.6,442.1 L83.4,441.2 L85.1,440.2 L86.9,439.3 L88.6,438.5 L90.3,437.7 L92.0,436.9 L93.7,436.1 L95.5,435.4 L97.4,434.6 L99.4,433.8 L101.5,433.0 L103.7,432.2 L105.9,431.3 L108.0,430.5 L110.0,429.7 L111.8,429.0 L113.5,428.2 L115.2,427.5 L116.8,426.8 L118.4,426.1 L120.0,425.3 L121.7,424.6 L123.3,423.9 L125.0,423.2 L126.7,422.4 L128.3,421.7 L130.0,421.0 L131.7,420.3 L133.3,419.6 L135.0,418.9 L136.7,418.2 L138.3,417.5 L140.0,416.8 L141.7,416.1 L143.3,415.4 L145.0,414.7 L146.7,414.0 L148.3,413.3 L150.0,412.6 L151.7,412.0 L153.3,411.3 L155.0,410.6 L156.7,409.9 L158.3,409.3 L160.0,408.6 L161.7,407.9 L163.3,407.2 L165.0,406.6 L166.7,405.9 L168.3,405.3 L170.0,404.6 L171.7,404.0 L173.3,403.3 L175.0,402.7 L176.7,402.0 L178.3,401.4 L180.0,400.7 L181.7,400.1 L183.3,399.5 L185.0,398.8 L186.7,398.2 L188.3,397.6 L190.0,396.9 L191.7,396.3 L193.3,395.7 L195.0,395.1 L196.7,394.4 L198.3,393.8 L200.0,393.2 L201.7,392.6 L203.3,392.0 L205.0,391.4 L206.7,390.8 L208.3,390.2 L210.0,389.6 L211.7,389.0 L213.3,388.4 L215.0,387.8 L216.7,387.2 L218.3,386.6 L220.0,386.1 L221.7,385.5 L223.3,384.9 L225.0,384.3 L226.7,383.7 L228.3,383.2 L230.0,382.6 L231.7,382.0 L233.3,381.5 L235.0,380.9 L236.7,380.3 L238.3,379.8 L240.0,379.2 L241.7,378.7 L243.3,378.1 L245.0,377.6 L246.7,377.0 L248.3,376.5 L250.0,375.9 L251.7,375.4 L253.3,374.9 L255.0,374.3 L256.7,373.8 L258.3,373.3 L260.0,372.7 L261.7,372.2 L263.3,371.7 L265.0,371.2 L266.7,370.6 L268.3,370.1 L270.0,369.6 L271.7,369.1 L273.3,368.6 L275.0,368.1 L276.7,367.6 L278.3,367.1 L280.0,366.6 L281.7,366.1 L283.3,365.6 L285.0,365.1 L286.7,364.6 L288.3,364.1 L290.0,363.6 L291.7,363.1 L293.3,362.7 L295.0,362.2 L296.7,361.7 L298.3,361.2 L300.0,360.8 L301.7,360.3 L303.3,359.8 L305.0,359.3 L306.7,358.9 L308.3,358.4 L310.0,358.0 L311.7,357.5 L313.3,357.1 L315.0,356.6 L316.7,356.1 L318.3,355.7 L320.0,355.3 L321.7,354.8 L323.3,354.4 L325.0,353.9 L326.7,353.5 L328.3,353.1 L330.0,352.6 L331.7,352.2 L333.3,351.8 L335.0,351.3 L336.7,350.9 L338.3,350.5 L340.0,350.1 L341.7,349.7 L343.3,349.3 L345.0,348.8 L346.7,348.4 L348.3,348.0 L350.0,347.6 L351.7,347.2 L353.3,346.8 L355.0,346.4 L356.7,346.0 L358.3,345.6 L360.0,345.2 L361.7,344.8 L363.3,344.5 L365.0,344.1 L366.7,343.7 L368.3,343.3 L370.0,342.9 L371.7,342.5 L373.3,342.2 L375.0,341.8 L376.7,341.4 L378.3,341.1 L380.0,340.7 L381.7,340.3 L383.3,340.0 L385.0,339.6 L386.7,339.3 L388.3,338.9 L390.0,338.5 L391.7,338.2 L393.3,337.9 L395.0,337.5 L396.7,337.2 L398.3,336.8 L400.0,336.5 L401.7,336.1 L403.3,335.8 L405.0,335.5 L406.7,335.1 L408.3,334.8 L410.0,334.5 L411.7,334.2 L413.3,333.8 L415.0,333.5 L416.7,333.2 L418.3,332.9 L420.0,332.6 L421.7,332.3 L423.3,332.0 L425.0,331.6 L426.7,331.3 L428.3,331.0 L430.0,330.7 L431.7,330.4 L433.3,330.1 L435.0,329.9 L436.7,329.6 L438.3,329.3 L440.0,329.0 L441.7,328.7 L443.3,328.4 L445.0,328.1 L446.7,327.9 L448.3,327.6 L450.0,327.3 L451.7,327.0 L453.3,326.8 L455.0,326.5 L456.7,326.2 L458.3,326.0 L460.0,325.7 L461.7,325.4 L463.3,325.2 L465.0,324.9 L466.7,324.7 L468.3,324.4 L470.0,324.2 L471.7,323.9 L473.3,323.7 L475.0,323.4 L476.7,323.2 L478.3,323.0 L480.0,322.7 L481.7,322.5 L483.3,322.2 L485.0,322.0 L486.7,321.8 L488.3,321.6 L490.0,321.3 L491.7,321.1 L493.3,320.9 L495.0,320.7 L496.7,320.5 L498.3,320.2 L500.0,320.0 L501.7,319.8 L503.3,319.6 L505.0,319.4 L506.7,319.2 L508.3,319.0 L510.0,318.8 L511.7,318.6 L513.3,318.4 L515.0,318.2 L516.7,318.0 L518.3,317.8 L520.0,317.6 L521.7,317.5 L523.3,317.3 L525.0,317.1 L526.7,316.9 L528.3,316.7 L530.0,316.6 L531.7,316.4 L533.3,316.2 L535.0,316.1 L536.7,315.9 L538.3,315.7 L540.0,315.6 L541.7,315.4 L543.3,315.2 L545.0,315.1 L546.7,314.9 L548.3,314.8 L550.0,314.6 L551.7,314.5 L553.3,314.3 L555.0,314.2 L556.7,314.0 L558.3,313.9 L560.0,313.8 L561.7,313.6 L563.3,313.5 L565.0,313.4 L566.7,313.2 L568.3,313.1 L570.0,313.0 L571.7,312.9 L573.3,312.7 L575.0,312.6 L576.7,312.5 L578.3,312.4 L580.0,312.3 L581.7,312.1 L583.3,312.0 L585.0,311.9 L586.7,311.8 L588.3,311.7 L590.0,311.6 L591.7,311.5 L593.3,311.4 L595.0,311.3 L596.7,311.2 L598.3,311.1 L600.0,311.0 L601.7,311.0 L603.3,310.9 L605.0,310.8 L606.7,310.7 L608.3,310.6 L610.0,310.5 L611.7,310.5 L613.3,310.4 L615.0,310.3 L616.7,310.2 L618.3,310.2 L620.0,310.1 L621.7,310.0 L623.3,310.0 L625.0,309.9 L626.7,309.9 L628.3,309.8 L630.0,309.7 L631.7,309.7 L633.3,309.6 L635.0,309.6 L636.7,309.5 L638.3,309.5 L640.0,309.4 L641.7,309.4 L643.3,309.4 L645.0,309.3 L646.7,309.3 L648.3,309.3 L650.0,309.2 L651.7,309.2 L653.3,309.2 L655.0,309.1 L656.7,309.1 L658.3,309.1 L660.0,309.1 L661.7,309.1 L663.3,309.0 L665.0,309.0 L666.7,309.0 L668.3,309.0 L670.0,309.0 L671.7,309.0 L673.3,309.0 L675.0,309.0 L676.7,309.0 L678.3,309.0 L680.0,309.0 L681.7,309.0 L683.3,309.0 L685.0,309.0 L686.7,309.0 L688.3,309.0 L690.0,309.0 L691.7,309.0 L693.3,309.0 L695.0,309.1 L696.7,309.1 L698.3,309.1 L700.0,309.1 L701.7,309.2 L703.3,309.2 L705.0,309.2 L706.7,309.3 L708.3,309.3 L710.0,309.3 L711.7,309.4 L713.3,309.4 L715.0,309.4 L716.7,309.5 L718.3,309.5 L720.0,309.6 L721.7,309.6 L723.3,309.7 L725.0,309.7 L726.7,309.8 L728.3,309.8 L730.0,309.9 L731.7,310.0 L733.3,310.0 L735.0,310.1 L736.7,310.1 L738.3,310.2 L740.0,310.3 L741.7,310.3 L743.3,310.4 L745.0,310.5 L746.7,310.6 L748.3,310.6 L750.0,310.7 L751.7,310.8 L753.3,310.9 L755.0,311.0 L756.7,311.1 L758.3,311.2 L760.0,311.2 L761.7,311.3 L763.3,311.4 L765.0,311.5 L766.7,311.6 L768.3,311.7 L770.0,311.8 L771.7,311.9 L773.3,312.0 L775.0,312.1 L776.7,312.1 L778.3,312.3 L780.0,312.5 L781.7,312.7 L783.3,313.0 L785.0,313.3 L786.6,313.6 L788.3,314.0 L790.0,314.5 L791.6,314.9 L793.2,315.4 L794.8,315.8 L796.5,316.4 L798.3,317.2 L800.4,318.3 L802.8,319.8 L805.6,321.5 L808.5,323.5 L811.4,325.6 L814.1,327.6 L816.4,329.5 L818.2,331.1 L819.6,332.6 L820.8,334.1 L822.0,335.6 L823.4,337.2 L825.0,339.2 L827.0,341.5 L829.2,344.1 L831.5,346.9 L833.9,349.8 L836.4,352.5 L838.7,355.1 L841.0,357.4 L843.4,359.6 L845.8,361.7 L848.1,363.9 L850.4,366.0 L852.5,368.3 L854.6,370.7 L856.6,373.2 L858.5,375.8 L860.3,378.4 L862.0,381.0 L863.5,383.5 L864.8,386.2 L865.9,389.1 L866.9,391.9 L867.8,394.6 L868.5,396.9 L869.0,398.5 L868.0,398.8 L867.5,397.2 L866.8,394.9 L866.0,392.3 L865.0,389.4 L863.8,386.6 L862.6,384.0 L861.1,381.5 L859.4,379.0 L857.6,376.5 L855.7,373.9 L853.7,371.5 L851.6,369.1 L849.5,366.9 L847.2,364.8 L844.9,362.7 L842.5,360.6 L840.1,358.4 L837.7,356.0 L835.3,353.5 L832.9,350.7 L830.4,347.9 L828.0,345.1 L825.8,342.5 L823.8,340.2 L822.1,338.2 L820.8,336.5 L819.6,335.1 L818.4,333.7 L817.0,332.3 L815.3,330.8 L812.9,329.1 L810.2,327.2 L807.3,325.3 L804.3,323.4 L801.6,321.8 L799.2,320.5 L797.2,319.5 L795.5,318.9 L794.0,318.5 L792.5,318.1 L790.9,317.8 L789.2,317.4 L787.5,317.0 L785.9,316.7 L784.3,316.5 L782.7,316.3 L781.1,316.1 L779.6,315.9 L778.0,315.8 L776.4,315.7 L774.8,315.6 L773.2,315.5 L771.5,315.5 L769.8,315.4 L768.1,315.3 L766.5,315.2 L764.8,315.1 L763.1,315.1 L761.5,315.0 L759.8,314.9 L758.1,314.8 L756.5,314.8 L754.8,314.7 L753.1,314.6 L751.5,314.5 L749.8,314.5 L748.2,314.4 L746.5,314.3 L744.8,314.3 L743.2,314.2 L741.5,314.2 L739.8,314.1 L738.2,314.1 L736.5,314.0 L734.9,313.9 L733.2,313.9 L731.5,313.9 L729.9,313.8 L728.2,313.8 L726.5,313.7 L724.9,313.7 L723.2,313.6 L721.5,313.6 L719.9,313.6 L718.2,313.5 L716.6,313.5 L714.9,313.5 L713.2,313.4 L711.6,313.4 L709.9,313.4 L708.2,313.3 L706.6,313.3 L704.9,313.3 L703.3,313.3 L701.6,313.2 L699.9,313.2 L698.3,313.2 L696.6,313.2 L695.0,313.2 L693.3,313.2 L691.6,313.2 L690.0,313.1 L688.3,313.1 L686.6,313.1 L685.0,313.1 L683.3,313.1 L681.7,313.1 L680.0,313.1 L678.3,313.1 L676.7,313.1 L675.0,313.2 L673.3,313.2 L671.7,313.2 L670.0,313.2 L668.4,313.2 L666.7,313.2 L665.0,313.2 L663.4,313.3 L661.7,313.3 L660.1,313.3 L658.4,313.3 L656.7,313.4 L655.1,313.4 L653.4,313.4 L651.7,313.5 L650.1,313.5 L648.4,313.6 L646.8,313.6 L645.1,313.6 L643.4,313.7 L641.8,313.7 L640.1,313.8 L638.5,313.8 L636.8,313.9 L635.1,313.9 L633.5,314.0 L631.8,314.1 L630.1,314.1 L628.5,314.2 L626.8,314.2 L625.2,314.3 L623.5,314.4 L621.8,314.4 L620.2,314.5 L618.5,314.6 L616.9,314.7 L615.2,314.7 L613.5,314.8 L611.9,314.9 L610.2,315.0 L608.5,315.1 L606.9,315.2 L605.2,315.3 L603.6,315.3 L601.9,315.4 L600.2,315.5 L598.6,315.6 L596.9,315.7 L595.3,315.8 L593.6,315.9 L591.9,316.1 L590.3,316.2 L588.6,316.3 L587.0,316.4 L585.3,316.5 L583.6,316.6 L582.0,316.8 L580.3,316.9 L578.7,317.0 L577.0,317.1 L575.3,317.3 L573.7,317.4 L572.0,317.5 L570.4,317.7 L568.7,317.8 L567.0,317.9 L565.4,318.1 L563.7,318.2 L562.1,318.4 L560.4,318.5 L558.7,318.6 L557.1,318.8 L555.4,319.0 L553.8,319.1 L552.1,319.3 L550.4,319.4 L548.8,319.6 L547.1,319.7 L545.5,319.9 L543.8,320.1 L542.1,320.2 L540.5,320.4 L538.8,320.6 L537.2,320.8 L535.5,320.9 L533.8,321.1 L532.2,321.3 L530.5,321.5 L528.9,321.7 L527.2,321.9 L525.5,322.0 L523.9,322.2 L522.2,322.4 L520.6,322.6 L518.9,322.8 L517.2,323.0 L515.6,323.2 L513.9,323.5 L512.3,323.7 L510.6,323.9 L508.9,324.1 L507.3,324.3 L505.6,324.6 L504.0,324.8 L502.3,325.0 L500.7,325.2 L499.0,325.5 L497.3,325.7 L495.7,325.9 L494.0,326.2 L492.4,326.4 L490.7,326.7 L489.1,326.9 L487.4,327.2 L485.7,327.4 L484.1,327.7 L482.4,327.9 L480.8,328.2 L479.1,328.4 L477.5,328.7 L475.8,328.9 L474.1,329.2 L472.5,329.5 L470.8,329.7 L469.2,330.0 L467.5,330.3 L465.9,330.5 L464.2,330.8 L462.5,331.1 L460.9,331.4 L459.2,331.7 L457.6,331.9 L455.9,332.2 L454.3,332.5 L452.6,332.8 L451.0,333.1 L449.3,333.4 L447.6,333.7 L446.0,334.0 L444.3,334.3 L442.7,334.6 L441.0,334.9 L439.4,335.2 L437.7,335.5 L436.0,335.8 L434.4,336.0 L432.7,336.3 L431.1,336.6 L429.4,336.9 L427.7,337.2 L426.1,337.5 L424.4,337.8 L422.8,338.1 L421.1,338.4 L419.4,338.8 L417.8,339.1 L416.1,339.4 L414.5,339.7 L412.8,340.0 L411.1,340.3 L409.5,340.7 L407.8,341.0 L406.2,341.3 L404.5,341.6 L402.8,342.0 L401.2,342.3 L399.5,342.6 L397.9,343.0 L396.2,343.3 L394.5,343.7 L392.9,344.0 L391.2,344.3 L389.6,344.7 L387.9,345.0 L386.2,345.4 L384.6,345.8 L382.9,346.1 L381.3,346.5 L379.6,346.8 L377.9,347.2 L376.3,347.6 L374.6,347.9 L373.0,348.3 L371.3,348.7 L369.6,349.1 L368.0,349.4 L366.3,349.8 L364.7,350.2 L363.0,350.6 L361.3,351.0 L359.7,351.3 L358.0,351.7 L356.4,352.1 L354.7,352.5 L353.0,352.9 L351.4,353.3 L349.7,353.7 L348.1,354.1 L346.4,354.5 L344.7,354.9 L343.1,355.3 L341.4,355.8 L339.8,356.2 L338.1,356.6 L336.4,357.0 L334.8,357.4 L333.1,357.9 L331.5,358.3 L329.8,358.7 L328.1,359.1 L326.5,359.6 L324.8,360.0 L323.2,360.4 L321.5,360.9 L319.8,361.3 L318.2,361.8 L316.5,362.2 L314.9,362.7 L313.2,363.1 L311.5,363.6 L309.9,364.0 L308.2,364.5 L306.6,364.9 L304.9,365.4 L303.2,365.9 L301.6,366.3 L299.9,366.8 L298.3,367.3 L296.6,367.7 L294.9,368.2 L293.3,368.7 L291.6,369.2 L290.0,369.7 L288.3,370.1 L286.6,370.6 L285.0,371.1 L283.3,371.6 L281.7,372.1 L280.0,372.6 L278.3,373.1 L276.7,373.6 L275.0,374.1 L273.4,374.6 L271.7,375.1 L270.0,375.6 L268.4,376.1 L266.7,376.6 L265.0,377.2 L263.4,377.7 L261.7,378.2 L260.1,378.7 L258.4,379.3 L256.7,379.8 L255.1,380.3 L253.4,380.8 L251.8,381.4 L250.1,381.9 L248.4,382.5 L246.8,383.0 L245.1,383.5 L243.5,384.1 L241.8,384.6 L240.1,385.2 L238.5,385.7 L236.8,386.3 L235.2,386.9 L233.5,387.4 L231.8,388.0 L230.2,388.5 L228.5,389.1 L226.9,389.7 L225.2,390.3 L223.5,390.8 L221.9,391.4 L220.2,392.0 L218.6,392.6 L216.9,393.2 L215.2,393.7 L213.6,394.3 L211.9,394.9 L210.2,395.5 L208.6,396.1 L206.9,396.7 L205.3,397.3 L203.6,397.9 L201.9,398.5 L200.3,399.1 L198.6,399.7 L197.0,400.4 L195.3,401.0 L193.6,401.6 L192.0,402.2 L190.3,402.8 L188.7,403.4 L187.0,404.1 L185.3,404.7 L183.7,405.3 L182.0,406.0 L180.4,406.6 L178.7,407.2 L177.0,407.9 L175.4,408.5 L173.7,409.2 L172.0,409.8 L170.4,410.5 L168.7,411.1 L167.1,411.8 L165.4,412.4 L163.7,413.1 L162.1,413.8 L160.4,414.4 L158.8,415.1 L157.1,415.8 L155.4,416.4 L153.8,417.1 L152.1,417.8 L150.5,418.5 L148.8,419.2 L147.1,419.8 L145.5,420.5 L143.8,421.2 L142.1,421.9 L140.5,422.6 L138.8,423.3 L137.2,424.0 L135.5,424.7 L133.8,425.4 L132.2,426.1 L130.5,426.8 L128.9,427.5 L127.2,428.2 L125.5,429.0 L123.9,429.7 L122.2,430.4 L120.6,431.1 L119.0,431.8 L117.4,432.5 L115.8,433.3 L114.0,434.1 L112.1,434.9 L110.0,435.7 L107.9,436.5 L105.7,437.3 L103.5,438.1 L101.4,438.9 L99.4,439.5 L97.5,440.1 L95.7,440.8 L94.0,441.4 L92.3,442.0 L90.6,442.6 L88.9,443.3 L87.2,444.1 L85.4,444.9 L83.6,445.7 L81.8,446.6 L80.1,447.5 L78.5,448.3 L76.9,449.2 L75.4,450.1 L73.9,450.9 L72.5,451.8 L71.2,452.6 L69.9,453.5 L68.7,454.2 L67.7,454.9 L66.8,455.5 L65.9,456.1 L65.1,456.8 L64.1,457.6 L63.0,458.7 L61.8,459.9 L60.7,461.1 L59.5,462.5 L58.4,464.0 L57.2,465.6 L56.1,467.4 L55.0,469.4 L53.9,471.4 L52.9,473.7 L51.8,476.1 L50.6,478.8 L49.5,481.9 L48.3,485.3 L47.1,489.0 L45.9,492.7 L44.7,496.4 L43.7,499.8 L42.7,503.0 L41.7,506.0 L40.8,508.9 L39.9,511.8 L39.1,514.8 L38.3,517.9 L37.4,521.2 L36.6,524.7 L35.9,528.2 L35.2,531.7 L34.6,535.2 L34.1,538.6 L33.7,542.1 L33.5,545.9 L33.3,549.7 L33.2,553.2 L33.1,556.2 L33.0,558.4Z" fill="url(#rimT)"/>
<path d="M31.5,558.3 L31.6,556.1 L31.6,553.2 L31.8,549.7 L31.9,545.8 L32.1,542.0 L32.5,538.4 L33.0,534.9 L33.6,531.4 L34.2,527.9 L35.0,524.3 L35.7,520.8 L36.5,517.5 L37.3,514.3 L38.1,511.3 L38.9,508.4 L39.8,505.4 L40.7,502.4 L41.7,499.2 L42.7,495.7 L43.9,492.1 L45.0,488.3 L46.2,484.6 L47.4,481.1 L48.5,478.0 L49.6,475.2 L50.7,472.7 L51.8,470.4 L52.9,468.2 L54.0,466.2 L55.1,464.3 L56.2,462.5 L57.4,460.9 L58.6,459.4 L59.8,458.0 L60.9,456.8 L62.0,455.6 L63.0,454.6 L64.0,453.7 L64.9,453.0 L65.8,452.3 L66.9,451.6 L68.0,450.8 L69.3,449.9 L70.6,449.0 L72.0,448.0 L73.4,447.0 L74.9,446.1 L76.5,445.1 L78.1,444.1 L79.8,443.1 L81.6,442.1 L83.4,441.2 L85.1,440.2 L86.9,439.3 L88.6,438.5 L90.3,437.7 L92.0,436.9 L93.7,436.1 L95.5,435.4 L97.4,434.6 L99.4,433.8 L101.5,433.0 L103.7,432.2 L105.9,431.3 L108.0,430.5 L110.0,429.7 L111.8,429.0 L113.5,428.2 L115.2,427.5 L116.8,426.8 L118.4,426.1 L120.0,425.3 L121.7,424.6 L123.3,423.9 L125.0,423.2 L126.7,422.4 L128.3,421.7 L130.0,421.0 L131.7,420.3 L133.3,419.6 L135.0,418.9 L136.7,418.2 L138.3,417.5 L140.0,416.8 L141.7,416.1 L143.3,415.4 L145.0,414.7 L146.7,414.0 L148.3,413.3 L150.0,412.6 L151.7,412.0 L153.3,411.3 L155.0,410.6 L156.7,409.9 L158.3,409.3 L160.0,408.6 L161.7,407.9 L163.3,407.2 L165.0,406.6 L166.7,405.9 L168.3,405.3 L170.0,404.6 L171.7,404.0 L173.3,403.3 L175.0,402.7 L176.7,402.0 L178.3,401.4 L180.0,400.7 L181.7,400.1 L183.3,399.5 L185.0,398.8 L186.7,398.2 L188.3,397.6 L190.0,396.9 L191.7,396.3 L193.3,395.7 L195.0,395.1 L196.7,394.4 L198.3,393.8 L200.0,393.2 L201.7,392.6 L203.3,392.0 L205.0,391.4 L206.7,390.8 L208.3,390.2 L210.0,389.6 L211.7,389.0 L213.3,388.4 L215.0,387.8 L216.7,387.2 L218.3,386.6 L220.0,386.1 L221.7,385.5 L223.3,384.9 L225.0,384.3 L226.7,383.7 L228.3,383.2 L230.0,382.6 L231.7,382.0 L233.3,381.5 L235.0,380.9 L236.7,380.3 L238.3,379.8 L240.0,379.2 L241.7,378.7 L243.3,378.1 L245.0,377.6 L246.7,377.0 L248.3,376.5 L250.0,375.9 L251.7,375.4 L253.3,374.9 L255.0,374.3 L256.7,373.8 L258.3,373.3 L260.0,372.7 L261.7,372.2 L263.3,371.7 L265.0,371.2 L266.7,370.6 L268.3,370.1 L270.0,369.6 L271.7,369.1 L273.3,368.6 L275.0,368.1 L276.7,367.6 L278.3,367.1 L280.0,366.6 L281.7,366.1 L283.3,365.6 L285.0,365.1 L286.7,364.6 L288.3,364.1 L290.0,363.6 L291.7,363.1 L293.3,362.7 L295.0,362.2 L296.7,361.7 L298.3,361.2 L300.0,360.8 L301.7,360.3 L303.3,359.8 L305.0,359.3 L306.7,358.9 L308.3,358.4 L310.0,358.0 L311.7,357.5 L313.3,357.1 L315.0,356.6 L316.7,356.1 L318.3,355.7 L320.0,355.3 L321.7,354.8 L323.3,354.4 L325.0,353.9 L326.7,353.5 L328.3,353.1 L330.0,352.6 L331.7,352.2 L333.3,351.8 L335.0,351.3 L336.7,350.9 L338.3,350.5 L340.0,350.1 L341.7,349.7 L343.3,349.3 L345.0,348.8 L346.7,348.4 L348.3,348.0 L350.0,347.6 L351.7,347.2 L353.3,346.8 L355.0,346.4 L356.7,346.0 L358.3,345.6 L360.0,345.2 L361.7,344.8 L363.3,344.5 L365.0,344.1 L366.7,343.7 L368.3,343.3 L370.0,342.9 L371.7,342.5 L373.3,342.2 L375.0,341.8 L376.7,341.4 L378.3,341.1 L380.0,340.7 L381.7,340.3 L383.3,340.0 L385.0,339.6 L386.7,339.3 L388.3,338.9 L390.0,338.5 L391.7,338.2 L393.3,337.9 L395.0,337.5 L396.7,337.2 L398.3,336.8 L400.0,336.5 L401.7,336.1 L403.3,335.8 L405.0,335.5 L406.7,335.1 L408.3,334.8 L410.0,334.5 L411.7,334.2 L413.3,333.8 L415.0,333.5 L416.7,333.2 L418.3,332.9 L420.0,332.6 L421.7,332.3 L423.3,332.0 L425.0,331.6 L426.7,331.3 L428.3,331.0 L430.0,330.7 L431.7,330.4 L433.3,330.1 L435.0,329.9 L436.7,329.6 L438.3,329.3 L440.0,329.0 L441.7,328.7 L443.3,328.4 L445.0,328.1 L446.7,327.9 L448.3,327.6 L450.0,327.3 L451.7,327.0 L453.3,326.8 L455.0,326.5 L456.7,326.2 L458.3,326.0 L460.0,325.7 L461.7,325.4 L463.3,325.2 L465.0,324.9 L466.7,324.7 L468.3,324.4 L470.0,324.2 L471.7,323.9 L473.3,323.7 L475.0,323.4 L476.7,323.2 L478.3,323.0 L480.0,322.7 L481.7,322.5 L483.3,322.2 L485.0,322.0 L486.7,321.8 L488.3,321.6 L490.0,321.3 L491.7,321.1 L493.3,320.9 L495.0,320.7 L496.7,320.5 L498.3,320.2 L500.0,320.0 L501.7,319.8 L503.3,319.6 L505.0,319.4 L505.6,324.6 L504.0,324.8 L502.3,325.0 L500.7,325.2 L499.0,325.5 L497.3,325.7 L495.7,325.9 L494.0,326.2 L492.4,326.4 L490.7,326.7 L489.1,326.9 L487.4,327.2 L485.7,327.4 L484.1,327.7 L482.4,327.9 L480.8,328.2 L479.1,328.4 L477.5,328.7 L475.8,328.9 L474.1,329.2 L472.5,329.5 L470.8,329.7 L469.2,330.0 L467.5,330.3 L465.9,330.5 L464.2,330.8 L462.5,331.1 L460.9,331.4 L459.2,331.7 L457.6,331.9 L455.9,332.2 L454.3,332.5 L452.6,332.8 L451.0,333.1 L449.3,333.4 L447.6,333.7 L446.0,334.0 L444.3,334.3 L442.7,334.6 L441.0,334.9 L439.4,335.2 L437.7,335.5 L436.0,335.8 L434.4,336.0 L432.7,336.3 L431.1,336.6 L429.4,336.9 L427.7,337.2 L426.1,337.5 L424.4,337.8 L422.8,338.1 L421.1,338.4 L419.4,338.8 L417.8,339.1 L416.1,339.4 L414.5,339.7 L412.8,340.0 L411.1,340.3 L409.5,340.7 L407.8,341.0 L406.2,341.3 L404.5,341.6 L402.8,342.0 L401.2,342.3 L399.5,342.6 L397.9,343.0 L396.2,343.3 L394.5,343.7 L392.9,344.0 L391.2,344.3 L389.6,344.7 L387.9,345.0 L386.2,345.4 L384.6,345.8 L382.9,346.1 L381.3,346.5 L379.6,346.8 L377.9,347.2 L376.3,347.6 L374.6,347.9 L373.0,348.3 L371.3,348.7 L369.6,349.1 L368.0,349.4 L366.3,349.8 L364.7,350.2 L363.0,350.6 L361.3,351.0 L359.7,351.3 L358.0,351.7 L356.4,352.1 L354.7,352.5 L353.0,352.9 L351.4,353.3 L349.7,353.7 L348.1,354.1 L346.4,354.5 L344.7,354.9 L343.1,355.3 L341.4,355.8 L339.8,356.2 L338.1,356.6 L336.4,357.0 L334.8,357.4 L333.1,357.9 L331.5,358.3 L329.8,358.7 L328.1,359.1 L326.5,359.6 L324.8,360.0 L323.2,360.4 L321.5,360.9 L319.8,361.3 L318.2,361.8 L316.5,362.2 L314.9,362.7 L313.2,363.1 L311.5,363.6 L309.9,364.0 L308.2,364.5 L306.6,364.9 L304.9,365.4 L303.2,365.9 L301.6,366.3 L299.9,366.8 L298.3,367.3 L296.6,367.7 L294.9,368.2 L293.3,368.7 L291.6,369.2 L290.0,369.7 L288.3,370.1 L286.6,370.6 L285.0,371.1 L283.3,371.6 L281.7,372.1 L280.0,372.6 L278.3,373.1 L276.7,373.6 L275.0,374.1 L273.4,374.6 L271.7,375.1 L270.0,375.6 L268.4,376.1 L266.7,376.6 L265.0,377.2 L263.4,377.7 L261.7,378.2 L260.1,378.7 L258.4,379.3 L256.7,379.8 L255.1,380.3 L253.4,380.8 L251.8,381.4 L250.1,381.9 L248.4,382.5 L246.8,383.0 L245.1,383.5 L243.5,384.1 L241.8,384.6 L240.1,385.2 L238.5,385.7 L236.8,386.3 L235.2,386.9 L233.5,387.4 L231.8,388.0 L230.2,388.5 L228.5,389.1 L226.9,389.7 L225.2,390.3 L223.5,390.8 L221.9,391.4 L220.2,392.0 L218.6,392.6 L216.9,393.2 L215.2,393.7 L213.6,394.3 L211.9,394.9 L210.2,395.5 L208.6,396.1 L206.9,396.7 L205.3,397.3 L203.6,397.9 L201.9,398.5 L200.3,399.1 L198.6,399.7 L197.0,400.4 L195.3,401.0 L193.6,401.6 L192.0,402.2 L190.3,402.8 L188.7,403.4 L187.0,404.1 L185.3,404.7 L183.7,405.3 L182.0,406.0 L180.4,406.6 L178.7,407.2 L177.0,407.9 L175.4,408.5 L173.7,409.2 L172.0,409.8 L170.4,410.5 L168.7,411.1 L167.1,411.8 L165.4,412.4 L163.7,413.1 L162.1,413.8 L160.4,414.4 L158.8,415.1 L157.1,415.8 L155.4,416.4 L153.8,417.1 L152.1,417.8 L150.5,418.5 L148.8,419.2 L147.1,419.8 L145.5,420.5 L143.8,421.2 L142.1,421.9 L140.5,422.6 L138.8,423.3 L137.2,424.0 L135.5,424.7 L133.8,425.4 L132.2,426.1 L130.5,426.8 L128.9,427.5 L127.2,428.2 L125.5,429.0 L123.9,429.7 L122.2,430.4 L120.6,431.1 L119.0,431.8 L117.4,432.5 L115.8,433.3 L114.0,434.1 L112.1,434.9 L110.0,435.7 L107.9,436.5 L105.7,437.3 L103.5,438.1 L101.4,438.9 L99.4,439.5 L97.5,440.1 L95.7,440.8 L94.0,441.4 L92.3,442.0 L90.6,442.6 L88.9,443.3 L87.2,444.1 L85.4,444.9 L83.6,445.7 L81.8,446.6 L80.1,447.5 L78.5,448.3 L76.9,449.2 L75.4,450.1 L73.9,450.9 L72.5,451.8 L71.2,452.6 L69.9,453.5 L68.7,454.2 L67.7,454.9 L66.8,455.5 L65.9,456.1 L65.1,456.8 L64.1,457.6 L63.0,458.7 L61.8,459.9 L60.7,461.1 L59.5,462.5 L58.4,464.0 L57.2,465.6 L56.1,467.4 L55.0,469.4 L53.9,471.4 L52.9,473.7 L51.8,476.1 L50.6,478.8 L49.5,481.9 L48.3,485.3 L47.1,489.0 L45.9,492.7 L44.7,496.4 L43.7,499.8 L42.7,503.0 L41.7,506.0 L40.8,508.9 L39.9,511.8 L39.1,514.8 L38.3,517.9 L37.4,521.2 L36.6,524.7 L35.9,528.2 L35.2,531.7 L34.6,535.2 L34.1,538.6 L33.7,542.1 L33.5,545.9 L33.3,549.7 L33.2,553.2 L33.1,556.2 L33.0,558.4Z" fill="url(#hatch)"/>
<path d="M503.7,322.5 L505.3,322.2 L507.0,322.0 L508.7,321.8 L510.3,321.6 L512.0,321.4 L513.7,321.2 L515.3,321.0 L517.0,320.8 L518.6,320.6 L520.3,320.4 L522.0,320.2 L523.6,320.0 L525.3,319.8 L527.0,319.6 L528.6,319.4 L530.3,319.3 L531.9,319.1 L533.6,318.9 L535.3,318.7 L536.9,318.6 L538.6,318.4 L540.3,318.2 L541.9,318.1 L543.6,317.9 L545.2,317.7 L546.9,317.6 L548.6,317.4 L550.2,317.3 L551.9,317.1 L553.6,317.0 L555.2,316.8 L556.9,316.7 L558.6,316.5 L560.2,316.4 L561.9,316.2 L563.5,316.1 L565.2,315.9 L566.9,315.8 L568.5,315.7 L570.2,315.5 L571.9,315.4 L573.5,315.3 L575.2,315.2 L576.8,315.0 L578.5,314.9 L580.2,314.8 L581.8,314.7 L583.5,314.6 L585.2,314.4 L586.8,314.3 L588.5,314.2 L590.2,314.1 L591.8,314.0 L593.5,313.9 L595.1,313.8 L596.8,313.7 L598.5,313.6 L600.1,313.5 L601.8,313.4 L603.5,313.3 L605.1,313.2 L606.8,313.2 L608.5,313.1 L610.1,313.0 L611.8,312.9 L613.4,312.8 L615.1,312.7 L616.8,312.7 L618.4,312.6 L620.1,312.5 L621.8,312.5 L623.4,312.4 L625.1,312.3 L626.8,312.3 L628.4,312.2 L630.1,312.1 L631.7,312.1 L633.4,312.0 L635.1,312.0 L636.7,311.9 L638.4,311.9 L640.1,311.8 L641.7,311.8 L643.4,311.7 L645.1,311.7 L646.7,311.7 L648.4,311.6 L650.0,311.6 L651.7,311.6 L653.4,311.5 L655.0,311.5 L656.7,311.5 L658.4,311.4 L660.0,311.4 L661.7,311.4 L663.4,311.4 L665.0,311.3 L666.7,311.3 L668.3,311.3 L670.0,311.3 L671.7,311.3 L673.3,311.3 L675.0,311.3 L676.7,311.3 L678.3,311.3 L680.0,311.3 L681.7,311.3 L683.3,311.3 L685.0,311.3 L686.7,311.3 L688.3,311.3 L690.0,311.3 L691.6,311.3 L693.3,311.3 L695.0,311.3 L696.6,311.3 L698.3,311.4 L700.0,311.4 L701.6,311.4 L703.3,311.4 L705.0,311.5 L706.6,311.5 L708.3,311.5 L710.0,311.5 L711.6,311.6 L713.3,311.6 L714.9,311.6 L716.6,311.7 L718.3,311.7 L719.9,311.8 L721.6,311.8 L723.3,311.9 L724.9,311.9 L726.6,311.9 L728.3,312.0 L729.9,312.0 L731.6,312.1 L733.3,312.1 L734.9,312.2 L736.6,312.3 L738.2,312.3 L739.9,312.4 L741.6,312.4 L743.2,312.5 L744.9,312.6 L746.6,312.6 L748.2,312.7 L749.9,312.8 L751.6,312.9 L753.2,312.9 L754.9,313.0 L756.6,313.1 L758.2,313.2 L759.9,313.3 L761.6,313.3 L763.2,313.4 L764.9,313.5 L766.5,313.6 L768.2,313.7 L769.9,313.8 L771.6,313.9 L773.2,313.9 L774.9,314.0 L776.5,314.1 L778.1,314.2 L779.8,314.4 L781.4,314.6 L783.0,314.8 L784.6,315.0 L786.3,315.3 L787.9,315.7 L789.6,316.1 L791.2,316.5 L792.8,316.9 L794.4,317.3 L796.0,317.8 L797.7,318.5 L799.8,319.5" fill="none" stroke="#0a1420" stroke-width="1.2" stroke-dasharray="14 3 8 2"/>
<path d="M504.0,324.8 L505.6,324.6 L507.3,324.3 L508.9,324.1 L510.6,323.9 L512.3,323.7 L513.9,323.5 L515.6,323.2 L517.2,323.0 L518.9,322.8 L520.6,322.6 L522.2,322.4 L523.9,322.2 L525.5,322.0 L527.2,321.9 L528.9,321.7 L530.5,321.5 L532.2,321.3 L533.8,321.1 L535.5,320.9 L537.2,320.8 L538.8,320.6 L540.5,320.4 L542.1,320.2 L543.8,320.1 L545.5,319.9 L547.1,319.7 L548.8,319.6 L550.4,319.4 L552.1,319.3 L553.8,319.1 L555.4,319.0 L557.1,318.8 L558.7,318.6 L560.4,318.5 L562.1,318.4 L563.7,318.2 L565.4,318.1 L567.0,317.9 L568.7,317.8 L570.4,317.7 L572.0,317.5 L573.7,317.4 L575.3,317.3 L577.0,317.1 L578.7,317.0 L580.3,316.9 L582.0,316.8 L583.6,316.6 L585.3,316.5 L587.0,316.4 L588.6,316.3 L590.3,316.2 L591.9,316.1 L593.6,315.9 L595.3,315.8 L596.9,315.7 L598.6,315.6 L600.2,315.5 L601.9,315.4 L603.6,315.3 L605.2,315.3 L606.9,315.2 L608.5,315.1 L610.2,315.0 L611.9,314.9 L613.5,314.8 L615.2,314.7 L616.9,314.7 L618.5,314.6 L620.2,314.5 L621.8,314.4 L623.5,314.4 L625.2,314.3 L626.8,314.2 L628.5,314.2 L630.1,314.1 L631.8,314.1 L633.5,314.0 L635.1,313.9 L636.8,313.9 L638.5,313.8 L640.1,313.8 L641.8,313.7 L643.4,313.7 L645.1,313.6 L646.8,313.6 L648.4,313.6 L650.1,313.5 L651.7,313.5 L653.4,313.4 L655.1,313.4 L656.7,313.4 L658.4,313.3 L660.1,313.3 L661.7,313.3 L663.4,313.3 L665.0,313.2 L666.7,313.2 L668.4,313.2 L670.0,313.2 L671.7,313.2 L673.3,313.2 L675.0,313.2 L676.7,313.1 L678.3,313.1 L680.0,313.1 L681.7,313.1 L683.3,313.1 L685.0,313.1 L686.6,313.1 L688.3,313.1 L690.0,313.1 L691.6,313.2 L693.3,313.2 L695.0,313.2 L696.6,313.2 L698.3,313.2 L699.9,313.2 L701.6,313.2 L703.3,313.3 L704.9,313.3 L706.6,313.3 L708.2,313.3 L709.9,313.4 L711.6,313.4 L713.2,313.4 L714.9,313.5 L716.6,313.5 L718.2,313.5 L719.9,313.6 L721.5,313.6 L723.2,313.6 L724.9,313.7 L726.5,313.7 L728.2,313.8 L729.9,313.8 L731.5,313.9 L733.2,313.9 L734.9,313.9 L736.5,314.0 L738.2,314.1 L739.8,314.1 L741.5,314.2 L743.2,314.2 L744.8,314.3 L746.5,314.3 L748.2,314.4 L749.8,314.5 L751.5,314.5 L753.1,314.6 L754.8,314.7 L756.5,314.8 L758.1,314.8 L759.8,314.9 L761.5,315.0 L763.1,315.1 L764.8,315.1 L766.5,315.2 L768.1,315.3 L769.8,315.4 L771.5,315.5 L773.2,315.5 L774.8,315.6 L776.4,315.7 L778.0,315.8 L779.6,315.9 L781.1,316.1 L782.7,316.3 L784.3,316.5 L785.9,316.7 L787.5,317.0 L789.2,317.4 L790.9,317.8 L792.5,318.1 L794.0,318.5 L795.5,318.9 L797.2,319.5 L799.2,320.5" fill="none" stroke="#081018" stroke-width="1" stroke-dasharray="10 4 16 3"/>
<defs><linearGradient id="rimBg" gradientUnits="userSpaceOnUse" x1="0" y1="0" x2="997" y2="0"><stop offset="0" stop-color="#5a4810"/><stop offset="0.81" stop-color="#5a4810"/><stop offset="0.83" stop-color="#c82000"/><stop offset="1" stop-color="#e01800"/></linearGradient></defs>
<path d="M31.5,558.3 L32.3,556.9 L33.4,554.9 L34.7,552.6 L36.1,550.1 L37.6,547.5 L39.0,545.0 L40.5,542.5 L42.0,539.8 L43.6,537.1 L45.2,534.4 L46.7,531.8 L48.2,529.3 L49.6,526.9 L50.8,524.6 L52.0,522.4 L53.3,520.3 L54.6,518.2 L56.0,516.2 L57.6,514.3 L59.3,512.3 L61.1,510.5 L62.9,508.8 L64.5,507.2 L66.0,505.8 L67.2,504.6 L68.2,503.6 L69.1,502.8 L70.0,502.0 L70.9,501.3 L72.0,500.5 L73.2,499.7 L74.4,499.0 L75.8,498.4 L77.1,497.7 L78.5,497.0 L80.0,496.4 L81.6,495.8 L83.2,495.1 L84.9,494.5 L86.6,493.9 L88.3,493.3 L90.0,492.7 L91.7,492.1 L93.3,491.5 L95.0,490.9 L96.7,490.3 L98.3,489.7 L100.0,489.0 L101.7,488.4 L103.3,487.8 L105.0,487.2 L106.7,486.6 L108.3,486.0 L110.0,485.4 L111.7,484.8 L113.3,484.2 L115.0,483.6 L116.7,482.9 L118.3,482.3 L120.0,481.7 L121.7,481.1 L123.3,480.5 L125.0,479.9 L126.7,479.3 L128.3,478.7 L130.0,478.1 L131.7,477.5 L133.3,476.9 L135.0,476.3 L136.7,475.7 L138.3,475.1 L140.0,474.5 L141.7,473.9 L143.3,473.3 L145.0,472.7 L146.7,472.1 L148.3,471.5 L150.0,470.9 L151.7,470.3 L153.3,469.7 L155.0,469.1 L156.7,468.6 L158.3,468.0 L160.0,467.4 L161.7,466.8 L163.3,466.2 L165.0,465.6 L166.7,465.0 L168.3,464.4 L170.0,463.9 L171.7,463.3 L173.3,462.7 L175.0,462.1 L176.7,461.5 L178.3,461.0 L180.0,460.4 L181.7,459.8 L183.3,459.2 L185.0,458.7 L186.7,458.1 L188.3,457.5 L190.0,456.9 L191.7,456.4 L193.3,455.8 L195.0,455.2 L196.7,454.7 L198.3,454.1 L200.0,453.5 L201.7,453.0 L203.3,452.4 L205.0,451.9 L206.7,451.3 L208.3,450.7 L210.0,450.2 L211.7,449.6 L213.3,449.1 L215.0,448.5 L216.7,448.0 L218.3,447.4 L220.0,446.9 L221.7,446.3 L223.3,445.8 L225.0,445.3 L226.7,444.7 L228.3,444.2 L230.0,443.6 L231.7,443.1 L233.3,442.6 L235.0,442.0 L236.7,441.5 L238.3,441.0 L240.0,440.4 L241.7,439.9 L243.3,439.4 L245.0,438.9 L246.7,438.3 L248.3,437.8 L250.0,437.3 L251.7,436.8 L253.3,436.3 L255.0,435.7 L256.7,435.2 L258.3,434.7 L260.0,434.2 L261.7,433.7 L263.3,433.2 L265.0,432.7 L266.7,432.2 L268.3,431.7 L270.0,431.2 L271.7,430.7 L273.3,430.2 L275.0,429.7 L276.7,429.2 L278.3,428.7 L280.0,428.2 L281.7,427.7 L283.3,427.2 L285.0,426.7 L286.7,426.3 L288.3,425.8 L290.0,425.3 L291.7,424.8 L293.3,424.3 L295.0,423.9 L296.7,423.4 L298.3,422.9 L300.0,422.5 L301.7,422.0 L303.3,421.5 L305.0,421.1 L306.7,420.6 L308.3,420.1 L310.0,419.7 L311.7,419.2 L313.3,418.8 L315.0,418.3 L316.7,417.9 L318.3,417.4 L320.0,417.0 L321.7,416.5 L323.3,416.1 L325.0,415.6 L326.7,415.2 L328.3,414.8 L330.0,414.3 L331.7,413.9 L333.3,413.5 L335.0,413.0 L336.7,412.6 L338.3,412.2 L340.0,411.7 L341.7,411.3 L343.3,410.9 L345.0,410.5 L346.7,410.1 L348.3,409.7 L350.0,409.2 L351.7,408.8 L353.3,408.4 L355.0,408.0 L356.7,407.6 L358.3,407.2 L360.0,406.8 L361.7,406.4 L363.3,406.0 L365.0,405.6 L366.7,405.2 L368.3,404.8 L370.0,404.4 L371.7,404.1 L373.3,403.7 L375.0,403.3 L376.7,402.9 L378.3,402.5 L380.0,402.2 L381.7,401.8 L383.3,401.4 L385.0,401.0 L386.7,400.7 L388.3,400.3 L390.0,400.0 L391.7,399.6 L393.3,399.2 L395.0,398.9 L396.7,398.5 L398.3,398.2 L400.0,397.8 L401.7,397.5 L403.3,397.1 L405.0,396.8 L406.7,396.4 L408.3,396.1 L410.0,395.8 L411.7,395.4 L413.3,395.1 L415.0,394.8 L416.7,394.4 L418.3,394.1 L420.0,393.8 L421.7,393.5 L423.3,393.2 L425.0,392.8 L426.7,392.5 L428.3,392.2 L430.0,391.9 L431.7,391.6 L433.3,391.3 L435.0,391.0 L436.7,390.7 L438.3,390.4 L440.0,390.1 L441.7,389.8 L443.3,389.5 L445.0,389.2 L446.7,388.9 L448.3,388.6 L450.0,388.3 L451.7,388.0 L453.3,387.8 L455.0,387.5 L456.7,387.2 L458.3,386.9 L460.0,386.6 L461.7,386.4 L463.3,386.1 L465.0,385.8 L466.7,385.6 L468.3,385.3 L470.0,385.0 L471.7,384.8 L473.3,384.5 L475.0,384.3 L476.7,384.0 L478.3,383.8 L480.0,383.5 L481.7,383.2 L483.3,383.0 L485.0,382.8 L486.7,382.5 L488.3,382.3 L490.0,382.0 L491.7,381.8 L493.3,381.5 L495.0,381.3 L496.7,381.1 L498.3,380.8 L500.0,380.6 L501.7,380.4 L503.3,380.2 L505.0,379.9 L506.7,379.7 L508.3,379.5 L510.0,379.3 L511.7,379.0 L513.3,378.8 L515.0,378.6 L516.7,378.4 L518.3,378.2 L520.0,378.0 L521.7,377.8 L523.3,377.6 L525.0,377.4 L526.7,377.2 L528.3,377.0 L530.0,376.8 L531.7,376.6 L533.3,376.4 L535.0,376.2 L536.7,376.0 L538.3,375.8 L540.0,375.6 L541.7,375.4 L543.3,375.2 L545.0,375.0 L546.7,374.8 L548.3,374.6 L550.0,374.5 L551.7,374.3 L553.3,374.1 L555.0,373.9 L556.7,373.8 L558.3,373.6 L560.0,373.4 L561.7,373.2 L563.3,373.1 L565.0,372.9 L566.7,372.7 L568.3,372.6 L570.0,372.4 L571.7,372.2 L573.3,372.1 L575.0,371.9 L576.7,371.8 L578.3,371.6 L580.0,371.4 L581.7,371.3 L583.3,371.1 L585.0,371.0 L586.7,370.8 L588.3,370.7 L590.0,370.5 L591.7,370.4 L593.3,370.2 L595.0,370.1 L596.7,370.0 L598.3,369.8 L600.0,369.7 L601.7,369.5 L603.3,369.4 L605.0,369.3 L606.7,369.1 L608.3,369.0 L610.0,368.9 L611.7,368.7 L613.3,368.6 L615.0,368.5 L616.7,368.3 L618.3,368.2 L620.0,368.1 L621.7,368.0 L623.3,367.8 L625.0,367.7 L626.7,367.6 L628.3,367.5 L630.0,367.4 L631.7,367.2 L633.3,367.1 L635.0,367.0 L636.7,366.9 L638.3,366.8 L640.0,366.7 L641.7,366.6 L643.3,366.5 L645.0,366.3 L646.7,366.2 L648.3,366.1 L650.0,366.0 L651.7,365.9 L653.3,365.8 L655.0,365.7 L656.7,365.6 L658.3,365.5 L660.0,365.4 L661.7,365.3 L663.3,365.2 L665.0,365.1 L666.7,365.0 L668.3,364.9 L670.0,364.8 L671.7,364.8 L673.3,364.7 L675.0,364.6 L676.7,364.5 L678.3,364.4 L680.0,364.3 L681.7,364.2 L683.3,364.1 L685.0,364.0 L686.7,364.0 L688.3,363.9 L690.0,363.8 L691.7,363.7 L693.3,363.6 L695.0,363.5 L696.7,363.5 L698.3,363.4 L700.0,363.3 L701.7,363.2 L703.3,363.2 L705.0,363.1 L706.7,363.0 L708.3,362.9 L710.0,362.9 L711.7,362.8 L713.3,362.7 L715.0,362.6 L716.7,362.6 L718.3,362.5 L720.0,362.4 L721.7,362.4 L723.3,362.3 L725.0,362.2 L726.7,362.2 L728.3,362.1 L730.0,362.0 L731.7,362.0 L733.3,361.9 L735.0,361.9 L736.7,361.8 L738.3,361.7 L740.0,361.7 L741.7,361.6 L743.3,361.5 L745.0,361.5 L746.7,361.4 L748.3,361.4 L750.0,361.3 L751.7,361.3 L753.3,361.2 L755.0,361.1 L756.7,361.1 L758.3,361.0 L760.0,361.0 L761.7,360.9 L763.3,360.9 L765.0,360.8 L766.7,360.8 L768.3,360.7 L770.0,360.7 L771.7,360.6 L773.3,360.6 L775.0,360.5 L776.7,360.5 L778.3,360.4 L780.0,360.4 L781.7,360.3 L783.3,360.3 L785.0,360.3 L786.6,360.2 L788.3,360.2 L790.0,360.1 L791.7,360.0 L793.5,359.8 L795.2,359.6 L797.0,359.4 L798.7,359.4 L800.4,359.5 L802.0,359.8 L803.5,360.3 L804.9,360.8 L806.4,361.5 L808.1,362.2 L810.0,363.0 L812.2,363.8 L814.6,364.8 L817.2,365.8 L819.9,366.8 L822.5,367.9 L825.0,368.9 L827.4,369.9 L829.7,370.9 L831.9,371.9 L834.2,372.9 L836.4,374.1 L838.7,375.3 L841.0,376.7 L843.4,378.2 L845.8,379.7 L848.1,381.3 L850.4,382.9 L852.5,384.5 L854.6,386.1 L856.6,387.7 L858.5,389.3 L860.3,390.9 L862.0,392.3 L863.5,393.6 L864.8,394.7 L865.9,395.7 L866.9,396.6 L867.8,397.4 L868.5,398.0 L869.0,398.5 L870.0,397.4 L869.5,396.9 L868.8,396.3 L868.0,395.5 L867.0,394.6 L865.8,393.5 L864.5,392.4 L863.1,391.1 L861.4,389.6 L859.6,388.0 L857.7,386.4 L855.6,384.7 L853.6,383.1 L851.4,381.5 L849.2,379.8 L846.8,378.1 L844.5,376.5 L842.1,375.0 L839.7,373.5 L837.4,372.2 L835.1,371.0 L832.8,369.9 L830.5,368.9 L828.2,367.8 L825.9,366.8 L823.4,365.7 L820.8,364.6 L818.1,363.5 L815.5,362.5 L813.1,361.5 L810.9,360.7 L809.1,359.9 L807.5,359.1 L805.9,358.4 L804.3,357.8 L802.6,357.3 L800.8,356.9 L798.8,356.7 L796.8,356.7 L794.9,356.8 L793.1,357.0 L791.5,357.2 L789.8,357.3 L788.2,357.3 L786.6,357.3 L784.9,357.3 L783.2,357.3 L781.6,357.4 L779.9,357.4 L778.2,357.4 L776.6,357.5 L774.9,357.5 L773.2,357.5 L771.6,357.6 L769.9,357.6 L768.2,357.7 L766.6,357.7 L764.9,357.7 L763.2,357.8 L761.6,357.8 L759.9,357.9 L758.2,357.9 L756.6,357.9 L754.9,358.0 L753.2,358.0 L751.6,358.1 L749.9,358.1 L748.2,358.2 L746.6,358.2 L744.9,358.3 L743.2,358.3 L741.6,358.4 L739.9,358.4 L738.2,358.5 L736.5,358.5 L734.9,358.6 L733.2,358.6 L731.5,358.7 L729.9,358.7 L728.2,358.8 L726.5,358.8 L724.9,358.9 L723.2,359.0 L721.5,359.0 L719.9,359.1 L718.2,359.1 L716.5,359.2 L714.9,359.2 L713.2,359.3 L711.5,359.4 L709.9,359.4 L708.2,359.5 L706.5,359.6 L704.8,359.6 L703.2,359.7 L701.5,359.8 L699.8,359.8 L698.2,359.9 L696.5,360.0 L694.8,360.0 L693.2,360.1 L691.5,360.2 L689.8,360.3 L688.2,360.4 L686.5,360.5 L684.8,360.5 L683.2,360.6 L681.5,360.7 L679.8,360.8 L678.1,360.9 L676.5,361.0 L674.8,361.1 L673.1,361.1 L671.5,361.2 L669.8,361.3 L668.1,361.4 L666.5,361.5 L664.8,361.6 L663.1,361.7 L661.5,361.8 L659.8,361.9 L658.1,362.0 L656.5,362.1 L654.8,362.2 L653.1,362.3 L651.4,362.4 L649.8,362.5 L648.1,362.6 L646.4,362.7 L644.8,362.8 L643.1,362.9 L641.4,363.0 L639.8,363.1 L638.1,363.2 L636.4,363.4 L634.8,363.5 L633.1,363.6 L631.4,363.7 L629.7,363.8 L628.1,363.9 L626.4,364.1 L624.7,364.2 L623.1,364.3 L621.4,364.4 L619.7,364.5 L618.1,364.7 L616.4,364.8 L614.7,364.9 L613.1,365.0 L611.4,365.2 L609.7,365.3 L608.0,365.4 L606.4,365.6 L604.7,365.7 L603.0,365.8 L601.4,366.0 L599.7,366.1 L598.0,366.2 L596.4,366.4 L594.7,366.5 L593.0,366.7 L591.4,366.8 L589.7,367.0 L588.0,367.1 L586.3,367.3 L584.7,367.4 L583.0,367.6 L581.3,367.7 L579.7,367.9 L578.0,368.0 L576.3,368.2 L574.7,368.3 L573.0,368.5 L571.3,368.6 L569.6,368.8 L568.0,369.0 L566.3,369.1 L564.6,369.3 L563.0,369.5 L561.3,369.6 L559.6,369.8 L558.0,370.0 L556.3,370.2 L554.6,370.3 L552.9,370.5 L551.3,370.7 L549.6,370.9 L547.9,371.0 L546.3,371.2 L544.6,371.4 L542.9,371.6 L541.3,371.8 L539.6,372.0 L537.9,372.2 L536.2,372.4 L534.6,372.5 L532.9,372.7 L531.2,372.9 L529.6,373.1 L527.9,373.3 L526.2,373.5 L524.6,373.7 L522.9,373.9 L521.2,374.1 L519.5,374.4 L517.9,374.6 L516.2,374.8 L514.5,375.0 L512.9,375.2 L511.2,375.4 L509.5,375.6 L507.9,375.9 L506.2,376.1 L504.5,376.3 L502.8,376.5 L501.2,376.8 L499.5,377.0 L497.8,377.2 L496.2,377.4 L494.5,377.7 L492.8,377.9 L491.1,378.1 L489.5,378.4 L487.8,378.6 L486.1,378.9 L484.5,379.1 L482.8,379.4 L481.1,379.6 L479.5,379.9 L477.8,380.1 L476.1,380.4 L474.4,380.6 L472.8,380.9 L471.1,381.1 L469.4,381.4 L467.8,381.7 L466.1,381.9 L464.4,382.2 L462.7,382.5 L461.1,382.7 L459.4,383.0 L457.7,383.3 L456.1,383.5 L454.4,383.8 L452.7,384.1 L451.0,384.4 L449.4,384.7 L447.7,385.0 L446.0,385.2 L444.4,385.5 L442.7,385.8 L441.0,386.1 L439.3,386.4 L437.7,386.7 L436.0,387.0 L434.3,387.3 L432.7,387.6 L431.0,387.9 L429.3,388.2 L427.6,388.5 L426.0,388.9 L424.3,389.2 L422.6,389.5 L421.0,389.8 L419.3,390.1 L417.6,390.5 L415.9,390.8 L414.3,391.1 L412.6,391.4 L410.9,391.8 L409.3,392.1 L407.6,392.4 L405.9,392.8 L404.2,393.1 L402.6,393.5 L400.9,393.8 L399.2,394.2 L397.6,394.5 L395.9,394.9 L394.2,395.2 L392.5,395.6 L390.9,395.9 L389.2,396.3 L387.5,396.6 L385.9,397.0 L384.2,397.4 L382.5,397.7 L380.8,398.1 L379.2,398.5 L377.5,398.9 L375.8,399.2 L374.2,399.6 L372.5,400.0 L370.8,400.4 L369.1,400.8 L367.5,401.2 L365.8,401.5 L364.1,401.9 L362.5,402.3 L360.8,402.7 L359.1,403.1 L357.4,403.5 L355.8,403.9 L354.1,404.3 L352.4,404.7 L350.8,405.1 L349.1,405.6 L347.4,406.0 L345.7,406.4 L344.1,406.8 L342.4,407.2 L340.7,407.6 L339.1,408.1 L337.4,408.5 L335.7,408.9 L334.1,409.3 L332.4,409.8 L330.7,410.2 L329.0,410.6 L327.4,411.1 L325.7,411.5 L324.0,412.0 L322.4,412.4 L320.7,412.8 L319.0,413.3 L317.3,413.7 L315.7,414.2 L314.0,414.6 L312.3,415.1 L310.7,415.5 L309.0,416.0 L307.3,416.5 L305.6,416.9 L304.0,417.4 L302.3,417.8 L300.6,418.3 L299.0,418.8 L297.3,419.2 L295.6,419.7 L294.0,420.2 L292.3,420.7 L290.6,421.1 L288.9,421.6 L287.3,422.1 L285.6,422.6 L283.9,423.1 L282.3,423.5 L280.6,424.0 L278.9,424.5 L277.2,425.0 L275.6,425.5 L273.9,426.0 L272.2,426.5 L270.6,427.0 L268.9,427.5 L267.2,428.0 L265.6,428.5 L263.9,429.0 L262.2,429.5 L260.5,430.0 L258.9,430.5 L257.2,431.0 L255.5,431.5 L253.9,432.0 L252.2,432.6 L250.5,433.1 L248.8,433.6 L247.2,434.1 L245.5,434.6 L243.8,435.2 L242.2,435.7 L240.5,436.2 L238.8,436.7 L237.2,437.3 L235.5,437.8 L233.8,438.3 L232.1,438.9 L230.5,439.4 L228.8,439.9 L227.1,440.5 L225.5,441.0 L223.8,441.5 L222.1,442.1 L220.5,442.6 L218.8,443.2 L217.1,443.7 L215.4,444.3 L213.8,444.8 L212.1,445.4 L210.4,445.9 L208.8,446.5 L207.1,447.0 L205.4,447.6 L203.8,448.1 L202.1,448.7 L200.4,449.3 L198.7,449.8 L197.1,450.4 L195.4,451.0 L193.7,451.5 L192.1,452.1 L190.4,452.7 L188.7,453.2 L187.1,453.8 L185.4,454.4 L183.7,454.9 L182.1,455.5 L180.4,456.1 L178.7,456.7 L177.0,457.2 L175.4,457.8 L173.7,458.4 L172.0,459.0 L170.4,459.6 L168.7,460.1 L167.0,460.7 L165.4,461.3 L163.7,461.9 L162.0,462.5 L160.4,463.1 L158.7,463.7 L157.0,464.2 L155.3,464.8 L153.7,465.4 L152.0,466.0 L150.3,466.6 L148.7,467.2 L147.0,467.8 L145.3,468.4 L143.7,469.0 L142.0,469.6 L140.3,470.2 L138.7,470.8 L137.0,471.4 L135.3,472.0 L133.7,472.6 L132.0,473.2 L130.3,473.8 L128.6,474.4 L127.0,475.0 L125.3,475.6 L123.6,476.2 L122.0,476.8 L120.3,477.4 L118.6,478.0 L117.0,478.6 L115.3,479.2 L113.6,479.8 L112.0,480.4 L110.3,481.0 L108.6,481.6 L107.0,482.2 L105.3,482.8 L103.6,483.5 L102.0,484.1 L100.3,484.7 L98.6,485.3 L97.0,486.0 L95.3,486.6 L93.7,487.3 L92.0,487.9 L90.4,488.6 L88.7,489.3 L87.1,489.9 L85.4,490.6 L83.7,491.2 L82.0,491.9 L80.3,492.6 L78.7,493.3 L77.2,494.0 L75.7,494.8 L74.3,495.5 L72.9,496.3 L71.6,497.1 L70.3,497.9 L69.1,498.8 L68.1,499.7 L67.1,500.6 L66.2,501.5 L65.2,502.5 L64.0,503.8 L62.6,505.2 L61.0,506.8 L59.2,508.6 L57.4,510.6 L55.7,512.6 L54.1,514.7 L52.6,516.9 L51.3,519.1 L50.1,521.3 L48.9,523.6 L47.7,525.9 L46.4,528.2 L44.9,530.7 L43.4,533.4 L41.9,536.2 L40.4,538.9 L38.9,541.6 L37.5,544.1 L36.1,546.7 L34.6,549.3 L33.3,551.8 L32.0,554.2 L30.9,556.1 L30.2,557.6Z" fill="url(#rimBg)"/>
<path d="M31.5,558.3 L32.3,556.9 L33.4,554.9 L34.7,552.6 L36.1,550.1 L37.6,547.5 L39.0,545.0 L40.5,542.5 L42.0,539.8 L43.6,537.1 L45.2,534.4 L46.7,531.8 L48.2,529.3 L49.6,526.9 L50.8,524.6 L52.0,522.4 L53.3,520.3 L54.6,518.2 L56.0,516.2 L57.6,514.3 L59.3,512.3 L61.1,510.5 L62.9,508.8 L64.5,507.2 L66.0,505.8 L67.2,504.6 L68.2,503.6 L69.1,502.8 L70.0,502.0 L70.9,501.3 L72.0,500.5 L73.2,499.7 L74.4,499.0 L75.8,498.4 L77.1,497.7 L78.5,497.0 L80.0,496.4 L81.6,495.8 L83.2,495.1 L84.9,494.5 L86.6,493.9 L88.3,493.3 L90.0,492.7 L91.7,492.1 L93.3,491.5 L95.0,490.9 L96.7,490.3 L98.3,489.7 L100.0,489.0 L101.7,488.4 L103.3,487.8 L105.0,487.2 L106.7,486.6 L108.3,486.0 L110.0,485.4 L111.7,484.8 L113.3,484.2 L115.0,483.6 L116.7,482.9 L118.3,482.3 L120.0,481.7 L121.7,481.1 L123.3,480.5 L125.0,479.9 L126.7,479.3 L128.3,478.7 L130.0,478.1 L131.7,477.5 L133.3,476.9 L135.0,476.3 L136.7,475.7 L138.3,475.1 L140.0,474.5 L141.7,473.9 L143.3,473.3 L145.0,472.7 L146.7,472.1 L148.3,471.5 L150.0,470.9 L151.7,470.3 L153.3,469.7 L155.0,469.1 L156.7,468.6 L158.3,468.0 L160.0,467.4 L161.7,466.8 L163.3,466.2 L165.0,465.6 L166.7,465.0 L168.3,464.4 L170.0,463.9 L171.7,463.3 L173.3,462.7 L175.0,462.1 L176.7,461.5 L178.3,461.0 L180.0,460.4 L181.7,459.8 L183.3,459.2 L185.0,458.7 L186.7,458.1 L188.3,457.5 L190.0,456.9 L191.7,456.4 L193.3,455.8 L195.0,455.2 L196.7,454.7 L198.3,454.1 L200.0,453.5 L201.7,453.0 L203.3,452.4 L205.0,451.9 L206.7,451.3 L208.3,450.7 L210.0,450.2 L211.7,449.6 L213.3,449.1 L215.0,448.5 L216.7,448.0 L218.3,447.4 L220.0,446.9 L221.7,446.3 L223.3,445.8 L225.0,445.3 L226.7,444.7 L228.3,444.2 L230.0,443.6 L231.7,443.1 L233.3,442.6 L235.0,442.0 L236.7,441.5 L238.3,441.0 L240.0,440.4 L241.7,439.9 L243.3,439.4 L245.0,438.9 L246.7,438.3 L248.3,437.8 L250.0,437.3 L251.7,436.8 L253.3,436.3 L255.0,435.7 L256.7,435.2 L258.3,434.7 L260.0,434.2 L261.7,433.7 L263.3,433.2 L265.0,432.7 L266.7,432.2 L268.3,431.7 L270.0,431.2 L271.7,430.7 L273.3,430.2 L275.0,429.7 L276.7,429.2 L278.3,428.7 L280.0,428.2 L281.7,427.7 L283.3,427.2 L285.0,426.7 L286.7,426.3 L288.3,425.8 L290.0,425.3 L291.7,424.8 L293.3,424.3 L295.0,423.9 L296.7,423.4 L298.3,422.9 L300.0,422.5 L301.7,422.0 L303.3,421.5 L305.0,421.1 L306.7,420.6 L308.3,420.1 L310.0,419.7 L311.7,419.2 L313.3,418.8 L315.0,418.3 L316.7,417.9 L318.3,417.4 L320.0,417.0 L321.7,416.5 L323.3,416.1 L325.0,415.6 L326.7,415.2 L328.3,414.8 L330.0,414.3 L331.7,413.9 L333.3,413.5 L335.0,413.0 L336.7,412.6 L338.3,412.2 L340.0,411.7 L341.7,411.3 L343.3,410.9 L345.0,410.5 L346.7,410.1 L348.3,409.7 L350.0,409.2 L351.7,408.8 L353.3,408.4 L355.0,408.0 L356.7,407.6 L358.3,407.2 L360.0,406.8 L361.7,406.4 L363.3,406.0 L365.0,405.6 L366.7,405.2 L368.3,404.8 L370.0,404.4 L371.7,404.1 L373.3,403.7 L375.0,403.3 L376.7,402.9 L378.3,402.5 L380.0,402.2 L381.7,401.8 L383.3,401.4 L385.0,401.0 L386.7,400.7 L388.3,400.3 L390.0,400.0 L391.7,399.6 L393.3,399.2 L395.0,398.9 L396.7,398.5 L398.3,398.2 L400.0,397.8 L401.7,397.5 L403.3,397.1 L405.0,396.8 L406.7,396.4 L408.3,396.1 L410.0,395.8 L411.7,395.4 L413.3,395.1 L415.0,394.8 L416.7,394.4 L418.3,394.1 L420.0,393.8 L421.7,393.5 L423.3,393.2 L425.0,392.8 L426.7,392.5 L428.3,392.2 L430.0,391.9 L431.7,391.6 L433.3,391.3 L435.0,391.0 L436.7,390.7 L438.3,390.4 L440.0,390.1 L441.7,389.8 L443.3,389.5 L445.0,389.2 L446.7,388.9 L448.3,388.6 L450.0,388.3 L451.7,388.0 L453.3,387.8 L455.0,387.5 L456.7,387.2 L458.3,386.9 L460.0,386.6 L461.7,386.4 L463.3,386.1 L465.0,385.8 L466.7,385.6 L468.3,385.3 L470.0,385.0 L471.7,384.8 L473.3,384.5 L475.0,384.3 L476.7,384.0 L478.3,383.8 L480.0,383.5 L481.7,383.2 L483.3,383.0 L485.0,382.8 L486.7,382.5 L488.3,382.3 L490.0,382.0 L491.7,381.8 L493.3,381.5 L495.0,381.3 L496.7,381.1 L498.3,380.8 L500.0,380.6 L501.7,380.4 L503.3,380.2 L505.0,379.9 L506.7,379.7 L508.3,379.5 L510.0,379.3 L511.7,379.0 L513.3,378.8 L515.0,378.6 L516.7,378.4 L518.3,378.2 L520.0,378.0 L521.7,377.8 L523.3,377.6 L525.0,377.4 L526.7,377.2 L528.3,377.0 L530.0,376.8 L531.7,376.6 L533.3,376.4 L535.0,376.2 L536.7,376.0 L538.3,375.8 L540.0,375.6 L541.7,375.4 L543.3,375.2 L545.0,375.0 L546.7,374.8 L548.3,374.6 L550.0,374.5 L551.7,374.3 L553.3,374.1 L555.0,373.9 L556.7,373.8 L558.3,373.6 L560.0,373.4 L561.7,373.2 L563.3,373.1 L565.0,372.9 L566.7,372.7 L568.3,372.6 L570.0,372.4 L571.7,372.2 L573.3,372.1 L575.0,371.9 L576.7,371.8 L578.3,371.6 L580.0,371.4 L581.7,371.3 L583.3,371.1 L585.0,371.0 L586.7,370.8 L588.3,370.7 L590.0,370.5 L591.7,370.4 L593.3,370.2 L595.0,370.1 L596.7,370.0 L598.3,369.8 L600.0,369.7 L601.7,369.5 L603.3,369.4 L605.0,369.3 L606.7,369.1 L608.3,369.0 L610.0,368.9 L611.7,368.7 L613.3,368.6 L615.0,368.5 L616.7,368.3 L618.3,368.2 L620.0,368.1 L621.7,368.0 L623.3,367.8 L625.0,367.7 L626.7,367.6 L628.3,367.5 L630.0,367.4 L631.7,367.2 L633.3,367.1 L635.0,367.0 L636.7,366.9 L638.3,366.8 L640.0,366.7 L641.7,366.6 L643.3,366.5 L645.0,366.3 L646.7,366.2 L648.3,366.1 L650.0,366.0 L651.7,365.9 L653.3,365.8 L655.0,365.7 L656.7,365.6 L658.3,365.5 L660.0,365.4 L661.7,365.3 L663.3,365.2 L665.0,365.1 L666.7,365.0 L668.3,364.9 L670.0,364.8 L671.7,364.8 L673.3,364.7 L675.0,364.6 L676.7,364.5 L678.3,364.4 L680.0,364.3 L681.7,364.2 L683.3,364.1 L685.0,364.0 L686.7,364.0 L688.3,363.9 L690.0,363.8 L691.7,363.7 L693.3,363.6 L695.0,363.5 L696.7,363.5 L698.3,363.4 L700.0,363.3 L701.7,363.2 L703.3,363.2 L705.0,363.1 L706.7,363.0 L708.3,362.9 L710.0,362.9 L711.7,362.8 L713.3,362.7 L715.0,362.6 L716.7,362.6 L718.3,362.5 L720.0,362.4 L721.7,362.4 L723.3,362.3 L725.0,362.2 L726.7,362.2 L728.3,362.1 L730.0,362.0 L731.7,362.0 L733.3,361.9 L735.0,361.9 L736.7,361.8 L738.3,361.7 L740.0,361.7 L741.7,361.6 L743.3,361.5 L745.0,361.5 L746.7,361.4 L748.3,361.4 L750.0,361.3 L751.7,361.3 L753.3,361.2 L755.0,361.1 L756.7,361.1 L758.3,361.0 L760.0,361.0 L761.7,360.9 L763.3,360.9 L765.0,360.8 L766.7,360.8 L768.3,360.7 L770.0,360.7 L771.7,360.6 L773.3,360.6 L775.0,360.5 L776.7,360.5 L778.3,360.4 L780.0,360.4 L781.7,360.3 L783.3,360.3 L785.0,360.3 L786.6,360.2 L788.3,360.2 L790.0,360.1 L791.7,360.0 L793.5,359.8 L795.2,359.6 L797.0,359.4 L798.7,359.4 L800.4,359.5 L802.0,359.8 L803.5,360.3 L804.9,360.8 L806.4,361.5 L808.1,362.2 L810.0,363.0 L812.2,363.8 L814.6,364.8 L817.2,365.8 L819.9,366.8 L822.5,367.9 L825.0,368.9 L827.4,369.9 L829.7,370.9 L831.9,371.9 L834.2,372.9 L836.4,374.1 L838.7,375.3 L841.0,376.7 L843.4,378.2 L845.8,379.7 L848.1,381.3 L850.4,382.9 L852.5,384.5 L854.6,386.1 L856.6,387.7 L858.5,389.3 L860.3,390.9 L862.0,392.3 L863.5,393.6 L864.8,394.7 L865.9,395.7 L866.9,396.6 L867.8,397.4 L868.5,398.0 L869.0,398.5 L870.0,397.4 L869.5,396.9 L868.8,396.3 L868.0,395.5 L867.0,394.6 L865.8,393.5 L864.5,392.4 L863.1,391.1 L861.4,389.6 L859.6,388.0 L857.7,386.4 L855.6,384.7 L853.6,383.1 L851.4,381.5 L849.2,379.8 L846.8,378.1 L844.5,376.5 L842.1,375.0 L839.7,373.5 L837.4,372.2 L835.1,371.0 L832.8,369.9 L830.5,368.9 L828.2,367.8 L825.9,366.8 L823.4,365.7 L820.8,364.6 L818.1,363.5 L815.5,362.5 L813.1,361.5 L810.9,360.7 L809.1,359.9 L807.5,359.1 L805.9,358.4 L804.3,357.8 L802.6,357.3 L800.8,356.9 L798.8,356.7 L796.8,356.7 L794.9,356.8 L793.1,357.0 L791.5,357.2 L789.8,357.3 L788.2,357.3 L786.6,357.3 L784.9,357.3 L783.2,357.3 L781.6,357.4 L779.9,357.4 L778.2,357.4 L776.6,357.5 L774.9,357.5 L773.2,357.5 L771.6,357.6 L769.9,357.6 L768.2,357.7 L766.6,357.7 L764.9,357.7 L763.2,357.8 L761.6,357.8 L759.9,357.9 L758.2,357.9 L756.6,357.9 L754.9,358.0 L753.2,358.0 L751.6,358.1 L749.9,358.1 L748.2,358.2 L746.6,358.2 L744.9,358.3 L743.2,358.3 L741.6,358.4 L739.9,358.4 L738.2,358.5 L736.5,358.5 L734.9,358.6 L733.2,358.6 L731.5,358.7 L729.9,358.7 L728.2,358.8 L726.5,358.8 L724.9,358.9 L723.2,359.0 L721.5,359.0 L719.9,359.1 L718.2,359.1 L716.5,359.2 L714.9,359.2 L713.2,359.3 L711.5,359.4 L709.9,359.4 L708.2,359.5 L706.5,359.6 L704.8,359.6 L703.2,359.7 L701.5,359.8 L699.8,359.8 L698.2,359.9 L696.5,360.0 L694.8,360.0 L693.2,360.1 L691.5,360.2 L689.8,360.3 L688.2,360.4 L686.5,360.5 L684.8,360.5 L683.2,360.6 L681.5,360.7 L679.8,360.8 L678.1,360.9 L676.5,361.0 L674.8,361.1 L673.1,361.1 L671.5,361.2 L669.8,361.3 L668.1,361.4 L666.5,361.5 L664.8,361.6 L663.1,361.7 L661.5,361.8 L659.8,361.9 L658.1,362.0 L656.5,362.1 L654.8,362.2 L653.1,362.3 L651.4,362.4 L649.8,362.5 L648.1,362.6 L646.4,362.7 L644.8,362.8 L643.1,362.9 L641.4,363.0 L639.8,363.1 L638.1,363.2 L636.4,363.4 L634.8,363.5 L633.1,363.6 L631.4,363.7 L629.7,363.8 L628.1,363.9 L626.4,364.1 L624.7,364.2 L623.1,364.3 L621.4,364.4 L619.7,364.5 L618.1,364.7 L616.4,364.8 L614.7,364.9 L613.1,365.0 L611.4,365.2 L609.7,365.3 L608.0,365.4 L606.4,365.6 L604.7,365.7 L603.0,365.8 L601.4,366.0 L599.7,366.1 L598.0,366.2 L596.4,366.4 L594.7,366.5 L593.0,366.7 L591.4,366.8 L589.7,367.0 L588.0,367.1 L586.3,367.3 L584.7,367.4 L583.0,367.6 L581.3,367.7 L579.7,367.9 L578.0,368.0 L576.3,368.2 L574.7,368.3 L573.0,368.5 L571.3,368.6 L569.6,368.8 L568.0,369.0 L566.3,369.1 L564.6,369.3 L563.0,369.5 L561.3,369.6 L559.6,369.8 L558.0,370.0 L556.3,370.2 L554.6,370.3 L552.9,370.5 L551.3,370.7 L549.6,370.9 L547.9,371.0 L546.3,371.2 L544.6,371.4 L542.9,371.6 L541.3,371.8 L539.6,372.0 L537.9,372.2 L536.2,372.4 L534.6,372.5 L532.9,372.7 L531.2,372.9 L529.6,373.1 L527.9,373.3 L526.2,373.5 L524.6,373.7 L522.9,373.9 L521.2,374.1 L519.5,374.4 L517.9,374.6 L516.2,374.8 L514.5,375.0 L512.9,375.2 L511.2,375.4 L509.5,375.6 L507.9,375.9 L506.2,376.1 L504.5,376.3 L502.8,376.5 L501.2,376.8 L499.5,377.0 L497.8,377.2 L496.2,377.4 L494.5,377.7 L492.8,377.9 L491.1,378.1 L489.5,378.4 L487.8,378.6 L486.1,378.9 L484.5,379.1 L482.8,379.4 L481.1,379.6 L479.5,379.9 L477.8,380.1 L476.1,380.4 L474.4,380.6 L472.8,380.9 L471.1,381.1 L469.4,381.4 L467.8,381.7 L466.1,381.9 L464.4,382.2 L462.7,382.5 L461.1,382.7 L459.4,383.0 L457.7,383.3 L456.1,383.5 L454.4,383.8 L452.7,384.1 L451.0,384.4 L449.4,384.7 L447.7,385.0 L446.0,385.2 L444.4,385.5 L442.7,385.8 L441.0,386.1 L439.3,386.4 L437.7,386.7 L436.0,387.0 L434.3,387.3 L432.7,387.6 L431.0,387.9 L429.3,388.2 L427.6,388.5 L426.0,388.9 L424.3,389.2 L422.6,389.5 L421.0,389.8 L419.3,390.1 L417.6,390.5 L415.9,390.8 L414.3,391.1 L412.6,391.4 L410.9,391.8 L409.3,392.1 L407.6,392.4 L405.9,392.8 L404.2,393.1 L402.6,393.5 L400.9,393.8 L399.2,394.2 L397.6,394.5 L395.9,394.9 L394.2,395.2 L392.5,395.6 L390.9,395.9 L389.2,396.3 L387.5,396.6 L385.9,397.0 L384.2,397.4 L382.5,397.7 L380.8,398.1 L379.2,398.5 L377.5,398.9 L375.8,399.2 L374.2,399.6 L372.5,400.0 L370.8,400.4 L369.1,400.8 L367.5,401.2 L365.8,401.5 L364.1,401.9 L362.5,402.3 L360.8,402.7 L359.1,403.1 L357.4,403.5 L355.8,403.9 L354.1,404.3 L352.4,404.7 L350.8,405.1 L349.1,405.6 L347.4,406.0 L345.7,406.4 L344.1,406.8 L342.4,407.2 L340.7,407.6 L339.1,408.1 L337.4,408.5 L335.7,408.9 L334.1,409.3 L332.4,409.8 L330.7,410.2 L329.0,410.6 L327.4,411.1 L325.7,411.5 L324.0,412.0 L322.4,412.4 L320.7,412.8 L319.0,413.3 L317.3,413.7 L315.7,414.2 L314.0,414.6 L312.3,415.1 L310.7,415.5 L309.0,416.0 L307.3,416.5 L305.6,416.9 L304.0,417.4 L302.3,417.8 L300.6,418.3 L299.0,418.8 L297.3,419.2 L295.6,419.7 L294.0,420.2 L292.3,420.7 L290.6,421.1 L288.9,421.6 L287.3,422.1 L285.6,422.6 L283.9,423.1 L282.3,423.5 L280.6,424.0 L278.9,424.5 L277.2,425.0 L275.6,425.5 L273.9,426.0 L272.2,426.5 L270.6,427.0 L268.9,427.5 L267.2,428.0 L265.6,428.5 L263.9,429.0 L262.2,429.5 L260.5,430.0 L258.9,430.5 L257.2,431.0 L255.5,431.5 L253.9,432.0 L252.2,432.6 L250.5,433.1 L248.8,433.6 L247.2,434.1 L245.5,434.6 L243.8,435.2 L242.2,435.7 L240.5,436.2 L238.8,436.7 L237.2,437.3 L235.5,437.8 L233.8,438.3 L232.1,438.9 L230.5,439.4 L228.8,439.9 L227.1,440.5 L225.5,441.0 L223.8,441.5 L222.1,442.1 L220.5,442.6 L218.8,443.2 L217.1,443.7 L215.4,444.3 L213.8,444.8 L212.1,445.4 L210.4,445.9 L208.8,446.5 L207.1,447.0 L205.4,447.6 L203.8,448.1 L202.1,448.7 L200.4,449.3 L198.7,449.8 L197.1,450.4 L195.4,451.0 L193.7,451.5 L192.1,452.1 L190.4,452.7 L188.7,453.2 L187.1,453.8 L185.4,454.4 L183.7,454.9 L182.1,455.5 L180.4,456.1 L178.7,456.7 L177.0,457.2 L175.4,457.8 L173.7,458.4 L172.0,459.0 L170.4,459.6 L168.7,460.1 L167.0,460.7 L165.4,461.3 L163.7,461.9 L162.0,462.5 L160.4,463.1 L158.7,463.7 L157.0,464.2 L155.3,464.8 L153.7,465.4 L152.0,466.0 L150.3,466.6 L148.7,467.2 L147.0,467.8 L145.3,468.4 L143.7,469.0 L142.0,469.6 L140.3,470.2 L138.7,470.8 L137.0,471.4 L135.3,472.0 L133.7,472.6 L132.0,473.2 L130.3,473.8 L128.6,474.4 L127.0,475.0 L125.3,475.6 L123.6,476.2 L122.0,476.8 L120.3,477.4 L118.6,478.0 L117.0,478.6 L115.3,479.2 L113.6,479.8 L112.0,480.4 L110.3,481.0 L108.6,481.6 L107.0,482.2 L105.3,482.8 L103.6,483.5 L102.0,484.1 L100.3,484.7 L98.6,485.3 L97.0,486.0 L95.3,486.6 L93.7,487.3 L92.0,487.9 L90.4,488.6 L88.7,489.3 L87.1,489.9 L85.4,490.6 L83.7,491.2 L82.0,491.9 L80.3,492.6 L78.7,493.3 L77.2,494.0 L75.7,494.8 L74.3,495.5 L72.9,496.3 L71.6,497.1 L70.3,497.9 L69.1,498.8 L68.1,499.7 L67.1,500.6 L66.2,501.5 L65.2,502.5 L64.0,503.8 L62.6,505.2 L61.0,506.8 L59.2,508.6 L57.4,510.6 L55.7,512.6 L54.1,514.7 L52.6,516.9 L51.3,519.1 L50.1,521.3 L48.9,523.6 L47.7,525.9 L46.4,528.2 L44.9,530.7 L43.4,533.4 L41.9,536.2 L40.4,538.9 L38.9,541.6 L37.5,544.1 L36.1,546.7 L34.6,549.3 L33.3,551.8 L32.0,554.2 L30.9,556.1 L30.2,557.6Z" fill="url(#hatchB)"/>
<path d="M31.5,558.3 C31.7,555.0 31.7,545.2 32.5,538.4 C33.3,531.6 35.0,524.0 36.5,517.5 C38.0,511.0 39.7,505.8 41.7,499.2 C43.7,492.6 46.3,483.8 48.5,478.0 C50.7,472.2 52.9,468.0 55.1,464.3 C57.4,460.6 59.9,457.9 62.0,455.6 C64.2,453.4 65.6,452.6 68.0,450.8 C70.4,449.1 73.3,447.0 76.5,445.1 C79.7,443.2 83.4,441.1 86.9,439.3 C90.4,437.6 93.6,436.2 97.4,434.6 C101.2,433.0 106.2,431.3 110.0,429.7 C113.8,428.2 116.7,426.8 120.0,425.3 C123.3,423.9 126.7,422.4 130.0,421.0 C133.3,419.6 136.7,418.2 140.0,416.8 C143.3,415.4 146.7,414.0 150.0,412.6 C153.3,411.3 156.7,409.9 160.0,408.6 C163.3,407.2 166.7,405.9 170.0,404.6 C173.3,403.3 176.7,402.0 180.0,400.7 C183.3,399.4 186.7,398.2 190.0,396.9 C193.3,395.7 196.7,394.4 200.0,393.2 C203.3,392.0 206.7,390.8 210.0,389.6 C213.3,388.4 216.7,387.2 220.0,386.1 C223.3,384.9 226.7,383.7 230.0,382.6 C233.3,381.5 236.7,380.3 240.0,379.2 C243.3,378.1 246.7,377.0 250.0,375.9 C253.3,374.9 256.7,373.8 260.0,372.7 C263.3,371.7 266.7,370.6 270.0,369.6 C273.3,368.6 276.7,367.6 280.0,366.6 C283.3,365.6 286.7,364.6 290.0,363.6 C293.3,362.7 296.7,361.7 300.0,360.8 C303.3,359.8 306.7,358.9 310.0,358.0 C313.3,357.0 316.7,356.1 320.0,355.3 C323.3,354.4 326.7,353.5 330.0,352.6 C333.3,351.8 336.7,350.9 340.0,350.1 C343.3,349.2 346.7,348.4 350.0,347.6 C353.3,346.8 356.7,346.0 360.0,345.2 C363.3,344.4 366.7,343.7 370.0,342.9 C373.3,342.2 376.7,341.4 380.0,340.7 C383.3,340.0 386.7,339.3 390.0,338.5 C393.3,337.8 396.7,337.2 400.0,336.5 C403.3,335.8 406.7,335.1 410.0,334.5 C413.3,333.8 416.7,333.2 420.0,332.6 C423.3,332.0 426.7,331.3 430.0,330.7 C433.3,330.1 436.7,329.6 440.0,329.0 C443.3,328.4 446.7,327.8 450.0,327.3 C453.3,326.8 456.7,326.2 460.0,325.7 C463.3,325.2 466.7,324.7 470.0,324.2 C473.3,323.7 476.7,323.2 480.0,322.7 C483.3,322.2 486.7,321.8 490.0,321.3 C493.3,320.9 496.7,320.5 500.0,320.0 C503.3,319.6 506.7,319.2 510.0,318.8 C513.3,318.4 516.7,318.0 520.0,317.6 C523.3,317.3 526.7,316.9 530.0,316.6 C533.3,316.2 536.7,315.9 540.0,315.6 C543.3,315.2 546.7,314.9 550.0,314.6 C553.3,314.3 556.7,314.0 560.0,313.8 C563.3,313.5 566.7,313.2 570.0,313.0 C573.3,312.7 576.7,312.5 580.0,312.3 C583.3,312.0 586.7,311.8 590.0,311.6 C593.3,311.4 596.7,311.2 600.0,311.0 C603.3,310.9 606.7,310.7 610.0,310.5 C613.3,310.4 616.7,310.2 620.0,310.1 C623.3,310.0 626.7,309.9 630.0,309.7 C633.3,309.6 636.7,309.5 640.0,309.4 C643.3,309.4 646.7,309.3 650.0,309.2 C653.3,309.2 656.7,309.1 660.0,309.1 C663.3,309.0 666.7,309.0 670.0,309.0 C673.3,309.0 676.7,309.0 680.0,309.0 C683.3,309.0 686.7,309.0 690.0,309.0 C693.3,309.0 696.7,309.1 700.0,309.1 C703.3,309.2 706.7,309.2 710.0,309.3 C713.3,309.4 716.7,309.5 720.0,309.6 C723.3,309.7 726.7,309.8 730.0,309.9 C733.3,310.0 736.7,310.1 740.0,310.3 C743.3,310.4 746.7,310.6 750.0,310.7 C753.3,310.9 756.7,311.1 760.0,311.2 C763.3,311.4 766.7,311.6 770.0,311.8 C773.3,312.0 776.7,312.0 780.0,312.5 C783.3,312.9 786.6,313.5 790.0,314.5 C793.4,315.5 796.0,315.8 800.4,318.3 C804.8,320.8 812.3,326.0 816.4,329.5 C820.5,333.0 821.3,334.9 825.0,339.2 C828.7,343.5 834.1,350.2 838.7,355.1 C843.3,360.0 848.4,363.6 852.5,368.3 C856.6,373.0 860.8,378.5 863.5,383.5 C866.2,388.5 868.1,396.0 869.0,398.5" fill="none" stroke="#202018" stroke-width="0.9"/>
<path d="M31.5,558.3 C32.8,556.1 36.2,549.8 39.0,545.0 C41.8,540.2 45.4,534.1 48.2,529.3 C51.0,524.5 53.0,520.1 56.0,516.2 C59.0,512.3 63.3,508.4 66.0,505.8 C68.7,503.2 69.7,502.1 72.0,500.5 C74.3,498.9 77.0,497.7 80.0,496.4 C83.0,495.1 86.7,493.9 90.0,492.7 C93.3,491.5 96.7,490.3 100.0,489.0 C103.3,487.8 106.7,486.6 110.0,485.4 C113.3,484.2 116.7,482.9 120.0,481.7 C123.3,480.5 126.7,479.3 130.0,478.1 C133.3,476.9 136.7,475.7 140.0,474.5 C143.3,473.3 146.7,472.1 150.0,470.9 C153.3,469.7 156.7,468.6 160.0,467.4 C163.3,466.2 166.7,465.0 170.0,463.9 C173.3,462.7 176.7,461.5 180.0,460.4 C183.3,459.2 186.7,458.1 190.0,456.9 C193.3,455.8 196.7,454.7 200.0,453.5 C203.3,452.4 206.7,451.3 210.0,450.2 C213.3,449.1 216.7,448.0 220.0,446.9 C223.3,445.8 226.7,444.7 230.0,443.6 C233.3,442.6 236.7,441.5 240.0,440.4 C243.3,439.4 246.7,438.3 250.0,437.3 C253.3,436.3 256.7,435.2 260.0,434.2 C263.3,433.2 266.7,432.2 270.0,431.2 C273.3,430.2 276.7,429.2 280.0,428.2 C283.3,427.2 286.7,426.3 290.0,425.3 C293.3,424.3 296.7,423.4 300.0,422.5 C303.3,421.5 306.7,420.6 310.0,419.7 C313.3,418.8 316.7,417.9 320.0,417.0 C323.3,416.1 326.7,415.2 330.0,414.3 C333.3,413.5 336.7,412.6 340.0,411.7 C343.3,410.9 346.7,410.1 350.0,409.2 C353.3,408.4 356.7,407.6 360.0,406.8 C363.3,406.0 366.7,405.2 370.0,404.4 C373.3,403.7 376.7,402.9 380.0,402.2 C383.3,401.4 386.7,400.7 390.0,400.0 C393.3,399.2 396.7,398.5 400.0,397.8 C403.3,397.1 406.7,396.4 410.0,395.8 C413.3,395.1 416.7,394.4 420.0,393.8 C423.3,393.2 426.7,392.5 430.0,391.9 C433.3,391.3 436.7,390.7 440.0,390.1 C443.3,389.5 446.7,388.9 450.0,388.3 C453.3,387.8 456.7,387.2 460.0,386.6 C463.3,386.1 466.7,385.6 470.0,385.0 C473.3,384.5 476.7,384.0 480.0,383.5 C483.3,383.0 486.7,382.5 490.0,382.0 C493.3,381.5 496.7,381.1 500.0,380.6 C503.3,380.2 506.7,379.7 510.0,379.3 C513.3,378.8 516.7,378.4 520.0,378.0 C523.3,377.6 526.7,377.2 530.0,376.8 C533.3,376.4 536.7,376.0 540.0,375.6 C543.3,375.2 546.7,374.8 550.0,374.5 C553.3,374.1 556.7,373.8 560.0,373.4 C563.3,373.1 566.7,372.7 570.0,372.4 C573.3,372.1 576.7,371.8 580.0,371.4 C583.3,371.1 586.7,370.8 590.0,370.5 C593.3,370.2 596.7,370.0 600.0,369.7 C603.3,369.4 606.7,369.1 610.0,368.9 C613.3,368.6 616.7,368.3 620.0,368.1 C623.3,367.8 626.7,367.6 630.0,367.4 C633.3,367.1 636.7,366.9 640.0,366.7 C643.3,366.5 646.7,366.2 650.0,366.0 C653.3,365.8 656.7,365.6 660.0,365.4 C663.3,365.2 666.7,365.0 670.0,364.8 C673.3,364.7 676.7,364.5 680.0,364.3 C683.3,364.1 686.7,364.0 690.0,363.8 C693.3,363.6 696.7,363.5 700.0,363.3 C703.3,363.2 706.7,363.0 710.0,362.9 C713.3,362.7 716.7,362.6 720.0,362.4 C723.3,362.3 726.7,362.2 730.0,362.0 C733.3,361.9 736.7,361.8 740.0,361.7 C743.3,361.5 746.7,361.4 750.0,361.3 C753.3,361.2 756.7,361.1 760.0,361.0 C763.3,360.9 766.7,360.8 770.0,360.7 C773.3,360.6 776.7,360.5 780.0,360.4 C783.3,360.3 786.6,360.2 790.0,360.1 C793.4,359.9 797.1,359.0 800.4,359.5 C803.7,360.0 805.9,361.4 810.0,363.0 C814.1,364.6 820.2,366.8 825.0,368.9 C829.8,370.9 834.1,372.7 838.7,375.3 C843.3,377.9 848.4,381.4 852.5,384.5 C856.6,387.6 860.8,391.3 863.5,393.6 C866.2,395.9 868.1,397.7 869.0,398.5" fill="none" stroke="#101010" stroke-width="1"/>
<path d="M31.5,556.0 C31.8,555.0 32.7,552.0 33.5,550.0 C34.3,548.0 34.9,548.2 36.5,543.7 C38.1,539.2 40.8,529.2 43.0,522.7 C45.2,516.2 47.5,509.4 49.5,504.4 C51.5,499.4 52.2,497.0 54.8,492.7 C57.4,488.4 62.3,481.8 65.2,478.3 C68.1,474.9 69.5,474.1 72.0,472.0 C74.5,469.9 77.0,467.4 80.0,465.5 C83.0,463.7 86.7,462.5 90.0,461.0 C93.3,459.4 96.7,457.9 100.0,456.5 C103.3,455.0 106.7,453.5 110.0,452.1 C113.3,450.6 116.7,449.2 120.0,447.7 C123.3,446.3 126.7,444.9 130.0,443.5 C133.3,442.1 136.7,440.7 140.0,439.3 C143.3,438.0 146.7,436.6 150.0,435.3 C153.3,433.9 156.7,432.6 160.0,431.3 C163.3,430.0 166.7,428.7 170.0,427.4 C173.3,426.1 176.7,424.8 180.0,423.5 C183.3,422.3 186.7,421.0 190.0,419.8 C193.3,418.6 196.7,417.4 200.0,416.1 C203.3,414.9 206.7,413.7 210.0,412.6 C213.3,411.4 216.7,410.2 220.0,409.1 C223.3,407.9 226.7,406.8 230.0,405.6 C233.3,404.5 236.7,403.4 240.0,402.3 C243.3,401.2 246.7,400.1 250.0,399.0 C253.3,398.0 256.7,396.9 260.0,395.9 C263.3,394.8 266.7,393.8 270.0,392.8 C273.3,391.7 276.7,390.7 280.0,389.7 C283.3,388.7 286.7,387.8 290.0,386.8 C293.3,385.8 296.7,384.9 300.0,383.9 C303.3,383.0 306.7,382.1 310.0,381.1 C313.3,380.2 316.7,379.3 320.0,378.4 C323.3,377.5 326.7,376.7 330.0,375.8 C333.3,374.9 336.7,374.1 340.0,373.2 C343.3,372.4 346.7,371.6 350.0,370.8 C353.3,369.9 356.7,369.1 360.0,368.4 C363.3,367.6 366.7,366.8 370.0,366.0 C373.3,365.3 376.7,364.5 380.0,363.8 C383.3,363.0 386.7,362.3 390.0,361.6 C393.3,360.9 396.7,360.2 400.0,359.5 C403.3,358.8 406.7,358.1 410.0,357.5 C413.3,356.8 416.7,356.2 420.0,355.5 C423.3,354.9 426.7,354.3 430.0,353.7 C433.3,353.0 436.7,352.4 440.0,351.9 C443.3,351.3 446.7,350.7 450.0,350.1 C453.3,349.6 456.7,349.0 460.0,348.5 C463.3,347.9 466.7,347.4 470.0,346.9 C473.3,346.4 476.7,345.9 480.0,345.4 C483.3,344.9 486.7,344.4 490.0,343.9 C493.3,343.5 496.7,343.0 500.0,342.6 C503.3,342.1 506.7,341.7 510.0,341.3 C513.3,340.9 516.7,340.5 520.0,340.1 C523.3,339.7 526.7,339.3 530.0,338.9 C533.3,338.5 536.7,338.2 540.0,337.8 C543.3,337.5 546.7,337.2 550.0,336.8 C553.3,336.5 556.7,336.2 560.0,335.9 C563.3,335.6 566.7,335.3 570.0,335.0 C573.3,334.8 576.7,334.5 580.0,334.2 C583.3,334.0 586.7,333.7 590.0,333.5 C593.3,333.3 596.7,333.1 600.0,332.8 C603.3,332.6 606.7,332.4 610.0,332.3 C613.3,332.1 616.7,331.9 620.0,331.7 C623.3,331.6 626.7,331.4 630.0,331.3 C633.3,331.1 636.7,331.0 640.0,330.9 C643.3,330.8 646.7,330.7 650.0,330.6 C653.3,330.5 656.7,330.4 660.0,330.3 C663.3,330.3 666.7,330.2 670.0,330.2 C673.3,330.1 676.7,330.1 680.0,330.0 C683.3,330.0 686.7,330.0 690.0,330.0 C693.3,330.0 696.7,330.0 700.0,330.0 C703.3,330.0 706.7,330.1 710.0,330.1 C713.3,330.1 716.7,330.2 720.0,330.2 C723.3,330.3 726.7,330.4 730.0,330.5 C733.3,330.5 736.7,330.6 740.0,330.7 C743.3,330.8 746.7,331.0 750.0,331.1 C753.3,331.2 756.7,331.3 760.0,331.5 C763.3,331.6 766.7,331.8 770.0,332.0 C773.3,332.1 776.2,332.1 780.0,332.5 C783.8,332.9 788.5,333.1 792.9,334.3 C797.3,335.5 802.3,337.6 806.6,339.5 C810.9,341.4 815.4,344.1 818.5,346.0 C821.6,347.9 820.9,348.0 825.0,350.6 C829.1,353.2 838.0,357.5 843.3,361.6 C848.6,365.7 853.5,371.2 857.0,375.3 C860.5,379.4 862.6,383.2 864.4,386.3 C866.2,389.4 867.4,392.7 868.0,394.0" fill="none" stroke="#101010" stroke-width="1.1"/>
<path d="M32.5,556.0 C32.7,555.0 32.7,553.8 33.8,550.0 C34.9,546.2 37.0,538.8 39.0,533.0 C41.0,527.2 43.4,520.2 45.6,515.0 C47.8,509.8 49.6,506.0 52.0,501.8 C54.4,497.6 57.7,493.1 60.0,490.0 C62.3,486.9 63.7,485.8 66.0,483.5 C68.3,481.2 71.7,478.0 74.0,476.0 C76.3,474.0 77.3,472.9 80.0,471.3 C82.7,469.7 86.7,468.2 90.0,466.6 C93.3,465.1 96.7,463.6 100.0,462.1 C103.3,460.6 106.7,459.1 110.0,457.6 C113.3,456.1 116.7,454.7 120.0,453.2 C123.3,451.8 126.7,450.4 130.0,448.9 C133.3,447.5 136.7,446.1 140.0,444.7 C143.3,443.3 146.7,442.0 150.0,440.6 C153.3,439.3 156.7,437.9 160.0,436.6 C163.3,435.3 166.7,433.9 170.0,432.6 C173.3,431.3 176.7,430.1 180.0,428.8 C183.3,427.5 186.7,426.3 190.0,425.0 C193.3,423.8 196.7,422.5 200.0,421.3 C203.3,420.1 206.7,418.9 210.0,417.7 C213.3,416.5 216.7,415.4 220.0,414.2 C223.3,413.0 226.7,411.9 230.0,410.8 C233.3,409.6 236.7,408.5 240.0,407.4 C243.3,406.3 246.7,405.2 250.0,404.1 C253.3,403.1 256.7,402.0 260.0,401.0 C263.3,399.9 266.7,398.9 270.0,397.9 C273.3,396.8 276.7,395.8 280.0,394.8 C283.3,393.8 286.7,392.9 290.0,391.9 C293.3,390.9 296.7,390.0 300.0,389.0 C303.3,388.1 306.7,387.2 310.0,386.2 C313.3,385.3 316.7,384.4 320.0,383.5 C323.3,382.6 326.7,381.8 330.0,380.9 C333.3,380.0 336.7,379.2 340.0,378.4 C343.3,377.5 346.7,376.7 350.0,375.9 C353.3,375.1 356.7,374.3 360.0,373.5 C363.3,372.7 366.7,371.9 370.0,371.2 C373.3,370.4 376.7,369.7 380.0,368.9 C383.3,368.2 386.7,367.5 390.0,366.8 C393.3,366.1 396.7,365.4 400.0,364.7 C403.3,364.0 406.7,363.3 410.0,362.7 C413.3,362.0 416.7,361.4 420.0,360.7 C423.3,360.1 426.7,359.5 430.0,358.9 C433.3,358.3 436.7,357.7 440.0,357.1 C443.3,356.5 446.7,355.9 450.0,355.4 C453.3,354.8 456.7,354.3 460.0,353.7 C463.3,353.2 466.7,352.7 470.0,352.1 C473.3,351.6 476.7,351.1 480.0,350.6 C483.3,350.2 486.7,349.7 490.0,349.2 C493.3,348.7 496.7,348.3 500.0,347.8 C503.3,347.4 506.7,347.0 510.0,346.6 C513.3,346.1 516.7,345.7 520.0,345.3 C523.3,344.9 526.7,344.5 530.0,344.2 C533.3,343.8 536.7,343.4 540.0,343.1 C543.3,342.7 546.7,342.4 550.0,342.1 C553.3,341.7 556.7,341.4 560.0,341.1 C563.3,340.8 566.7,340.5 570.0,340.2 C573.3,339.9 576.7,339.7 580.0,339.4 C583.3,339.1 586.7,338.9 590.0,338.7 C593.3,338.4 596.7,338.2 600.0,338.0 C603.3,337.7 606.7,337.5 610.0,337.3 C613.3,337.1 616.7,337.0 620.0,336.8 C623.3,336.6 626.7,336.4 630.0,336.3 C633.3,336.1 636.7,336.0 640.0,335.9 C643.3,335.7 646.7,335.6 650.0,335.5 C653.3,335.4 656.7,335.3 660.0,335.2 C663.3,335.1 666.7,335.0 670.0,334.9 C673.3,334.9 676.7,334.8 680.0,334.8 C683.3,334.7 686.7,334.7 690.0,334.6 C693.3,334.6 696.7,334.6 700.0,334.6 C703.3,334.6 706.7,334.6 710.0,334.6 C713.3,334.6 716.7,334.6 720.0,334.6 C723.3,334.7 726.7,334.7 730.0,334.7 C733.3,334.8 736.7,334.8 740.0,334.9 C743.3,335.0 746.7,335.1 750.0,335.1 C753.3,335.2 756.7,335.3 760.0,335.4 C763.3,335.5 766.7,335.7 770.0,335.8 C773.3,335.9 777.0,335.9 780.0,336.2 C783.0,336.5 785.1,336.8 788.3,337.5 C791.5,338.2 795.0,338.8 799.3,340.3 C803.6,341.8 809.6,344.2 813.9,346.5 C818.2,348.8 820.1,350.8 825.0,354.2 C829.9,357.6 838.0,362.9 843.3,367.0 C848.6,371.1 853.6,375.8 857.0,379.0 C860.4,382.2 861.8,384.0 863.5,386.3 C865.2,388.6 866.4,391.9 867.0,393.0" fill="none" stroke="#101010" stroke-width="1.1"/>
<path d="M414.5,335 L426.5,389" stroke="#101010" stroke-width="1.2"/>
<path d="M795,337 C790,342 792,350 800,356 C804,358 808,360 812,362" fill="none" stroke="#101010" stroke-width="1"/>
<path d="M816,347 C814,352 814,357 815,362" fill="none" stroke="#101010" stroke-width="1"/>
<path d="M70,475 C76,478 78,486 74,494 C71,498 68,501 66,505" fill="none" stroke="#101010" stroke-width="1"/>
<path d="M55,494 C60,497 63,500 66,505" fill="none" stroke="#101010" stroke-width="1"/>
<circle cx="660" cy="365.3" r="1.6" fill="#141414"/><circle cx="201.5" cy="453.6" r="1.3" fill="#141414"/>
<path d="M111.5,487 L111.8,494" stroke="#1c5a68" stroke-width="2.2"/><ellipse cx="112" cy="495.2" rx="1.6" ry="1.3" fill="#807018"/>
<path d="M761.5,361 L762,370.5" stroke="#2a6a80" stroke-width="2.2"/><ellipse cx="762" cy="371" rx="1.7" ry="1.4" fill="#305030"/>
<rect x="155" y="-1" width="687" height="34" fill="#d2d5d9"/>
<path d="M155.5,0 V32.5 H841.5 V0" fill="none" stroke="#7a7e83" stroke-width="1"/>
<path d="M156.5,0 V31.5 H840.5 V0" fill="none" stroke="#e2e4e7" stroke-width="1"/>
<path d="M299.5,3.5 V28.5" stroke="#b6b9bd" stroke-width="1"/><path d="M300.5,3.5 V28.5" stroke="#e6e8ea" stroke-width="1"/>
<path d="M482.5,3.5 V28.5" stroke="#b6b9bd" stroke-width="1"/><path d="M483.5,3.5 V28.5" stroke="#e6e8ea" stroke-width="1"/>
<path d="M194.7,21.4 H200.3 L197.5,24.8Z" fill="#6e6e6e"/>
<path d="M239.5,21.4 H245.10000000000002 L242.3,24.8Z" fill="#6e6e6e"/>
<path d="M284.59999999999997,21.4 H290.2 L287.4,24.8Z" fill="#6e6e6e"/>
<path d="M339.59999999999997,21.4 H345.2 L342.4,24.8Z" fill="#6e6e6e"/>
<rect x="250" y="4" width="30" height="24.8" fill="#e1a9a9"/>
<rect x="520" y="4" width="30" height="24.8" fill="#e1a9a9"/>
<defs><linearGradient id="gem" x1="0" y1="0" x2="1" y2="1"><stop offset="0" stop-color="#f4f8fa"/><stop offset="0.5" stop-color="#dfe9ee"/><stop offset="1" stop-color="#c4d8e4"/></linearGradient></defs>
<path d="M170.5,5.5 L181.6,8.5 L185.6,15.5 L178.6,25 L167.3,24.3 L163.3,14.5Z" fill="#e6eef2"/>
<path d="M170.5,5.5 L181.6,8.5 L179,13.5 L168.5,11.5Z" fill="#fbfdfe"/>
<path d="M163.3,14.5 L168.5,11.5 L170,19.5 L167.3,24.3Z" fill="#c6dce8"/>
<path d="M168.5,11.5 L179,13.5 L180,19 L170,19.5Z" fill="#f2f6f8"/>
<path d="M167.3,24.3 L170,19.5 L180,19 L178.6,25Z" fill="#d0d4d6"/>
<path d="M180,19 L185.6,15.5 L178.6,25Z" fill="#b4cedc"/>
<path d="M179,13.5 L185.6,15.5 L180,19Z" fill="#e4eef4"/>
<path d="M170.5,5.5 L181.6,8.5 L185.6,15.5 L178.6,25 L167.3,24.3 L163.3,14.5Z" fill="none" stroke="#33373b" stroke-width="1.4" stroke-linejoin="round"/>
<path d="M215.5,6.5 H228.8 V20.6 L223.8,25.8 H209.8 V12Z" fill="#c8d4da" stroke="#1e2226" stroke-width="1.8" stroke-linejoin="round"/>
<path d="M209.8,12 L215.5,6.5 H228.8 L223.8,12Z" fill="#fafafa"/>
<rect x="210.8" y="13" width="12" height="11.8" fill="#d4d6d8" stroke="#ffffff" stroke-width="1.3"/>
<path d="M215.5,6.5 H228.8 V20.6 L223.8,25.8 H209.8 V12Z M209.8,12 H223.8 V25.8 M223.8,12 L228.8,6.5" fill="none" stroke="#1e2226" stroke-width="1.8" stroke-linejoin="round"/>
<defs><linearGradient id="cf" x1="0" y1="0" x2="0" y2="1"><stop offset="0" stop-color="#f8d000"/><stop offset="0.15" stop-color="#f0f000"/><stop offset="0.55" stop-color="#70c000"/><stop offset="0.85" stop-color="#20a080"/><stop offset="1" stop-color="#10e0f0"/></linearGradient><linearGradient id="ct" x1="0" y1="0" x2="0" y2="1"><stop offset="0" stop-color="#f02000"/><stop offset="1" stop-color="#f8b000"/></linearGradient><linearGradient id="cr" x1="0" y1="0" x2="0" y2="1"><stop offset="0" stop-color="#f0c000"/><stop offset="0.4" stop-color="#f8f000"/><stop offset="1" stop-color="#30e060"/></linearGradient></defs>
<path d="M255,10.8 L258.8,6.8 H274.1 L269.1,10.8Z" fill="url(#ct)"/>
<rect x="255" y="10.8" width="14.1" height="14.8" fill="url(#cf)"/>
<path d="M269.1,10.8 L274.1,6.8 V22.1 L269.1,25.6Z" fill="url(#cr)"/>
<path d="M258.8,6.8 H274.1 V22.1 L269.1,25.6 H255 V10.8Z M255,10.8 H269.1 V25.6 M269.1,10.8 L274.1,6.8" fill="none" stroke="#141a30" stroke-width="1.6" stroke-linejoin="round"/>
<path d="M310,12 L315.1,6.8 H328.8 V21.1 L323.8,25.6 H310Z" fill="#fbfbfb"/>
<path d="M310,12 L315.3,12 V20.6 L310,25.6Z" fill="#f2c4c4"/>
<rect x="315.3" y="12" width="8.3" height="8.6" fill="#e6f2fa"/>
<path d="M310,12 L315.1,6.8 H328.8 V21.1 L323.8,25.6 H310Z M315.3,12 H323.6 V20.6 H315.3Z M310,12 L315.3,12 M315.1,6.8 L315.3,12 M328.8,6.8 L323.6,12 M328.8,21.1 L323.6,20.6 M323.8,25.6 L323.6,20.6 M310,25.6 L315.3,20.6" fill="none" stroke="#181818" stroke-width="1.4" stroke-linejoin="round"/>
<path d="M367.4,6.9 H373.8 V19.5 H367.4Z M354.8,19.6 H373.8 V25.9 H354.8Z" fill="#f6f9fc" stroke="#181818" stroke-width="1.5" stroke-linejoin="round"/>
<path d="M365.3,9.8 C361.5,10 359,12.5 358.4,15.5" fill="none" stroke="#d42020" stroke-width="1.4"/><path d="M356,15.2 H360.8 L358.4,18Z" fill="#d42020"/>
<path d="M386.7,6.9 H393.3 V19.5 H386.7Z M386.7,19.6 H406.3 V25.9 H386.7Z" fill="#f6f9fc" stroke="#181818" stroke-width="1.5" stroke-linejoin="round"/>
<path d="M395.4,9.8 C399.2,10 401.7,12.5 402.4,15.5" fill="none" stroke="#d42020" stroke-width="1.4"/><path d="M400,15.2 H404.8 L402.4,18Z" fill="#d42020"/>
<rect x="418.8" y="6.8" width="6.8" height="19.1" rx="0.5" fill="#f6f9fc" stroke="#202020" stroke-width="1.5"/>
<rect x="430.4" y="6.8" width="6.5" height="19.1" rx="0.5" fill="#f6f9fc" stroke="#202020" stroke-width="1.5"/>
<path d="M427.8,7.5 V26" stroke="#202020" stroke-width="1.4" stroke-dasharray="1.5 2.2"/>
<rect x="451.5" y="17.5" width="18" height="8.4" fill="#f4f8fc"/>
<path d="M451.6,18 V25.9 M454.8,18 V25.9 M465,18 V25.9 M469.6,18 V25.9" stroke="#202020" stroke-width="1.3"/>
<path d="M450.9,18 L455.3,13.6 H470.5 L469.3,18Z" fill="#fbe8e8" stroke="#e01818" stroke-width="1.4" stroke-linejoin="round"/>
<path d="M460.4,14.5 V9" stroke="#e01818" stroke-width="1.6"/><path d="M456.7,9.6 H464.2 L460.4,6Z" fill="#e01818"/>
<path d="M494,8.5 L509.5,23.5" stroke="#8a8a8a" stroke-width="1.1" stroke-dasharray="1.2 1.2"/>
<rect x="491.3" y="5.8" width="3" height="3" fill="#e8e8e8" stroke="#8a8a8a" stroke-width="1"/>
<rect x="509.2" y="23.2" width="3" height="3" fill="#e8e8e8" stroke="#8a8a8a" stroke-width="1"/>
<rect x="524.9" y="7" width="17.6" height="17.6" fill="none" stroke="#181818" stroke-width="1.1" stroke-dasharray="1.2 1.2"/>
<circle cx="524.9" cy="7" r="2" fill="#101010"/><circle cx="524.9" cy="7" r="0.7" fill="#c8c8c8"/>
<circle cx="542.5" cy="24.6" r="2" fill="#101010"/><circle cx="542.5" cy="24.6" r="0.7" fill="#e8e8e8"/>
<circle cx="565.8" cy="15.4" r="9" fill="none" stroke="#8c8c8c" stroke-width="1.1" stroke-dasharray="1.2 1.3"/>
<path d="M562.8,15.4 H568.8 M565.8,12.4 V18.4" stroke="#8c8c8c" stroke-width="1.3"/>
<path d="M591.4,6 H604.4 L609.3,15.4 L604.4,26 H591.4 L586.5,15.4Z" fill="none" stroke="#8c8c8c" stroke-width="1.1" stroke-dasharray="1.2 1.3"/>
<path d="M595,15.4 H601 M598,12.4 V18.4" stroke="#8c8c8c" stroke-width="1.3"/>
<path d="M621,19.5 C620,16 623,13 627,13 C629.5,13 630,14.5 631.5,12 C633.5,8.5 637,7.5 639.5,9 C641.5,11 640.5,16 637.5,19.5 C634.5,23 630,23.5 626,23.5 C623,23.5 621.5,21.5 621,19.5Z" fill="none" stroke="#8c8c8c" stroke-width="1.1" stroke-dasharray="1.2 1.3"/>
<path d="M666,22 C670,21 673.5,18 673,13 C672.5,9 668,7.5 663,7.8 C657,8.2 652,11.5 652,16.5 C652,20.5 655,23 659,23.2" fill="none" stroke="#303030" stroke-width="1.3" stroke-dasharray="1.3 1.2"/>
<path d="M661.2,16.2 L661.2,25 L663.3,23.2 L665.5,27 L667,26.2 L664.9,22.5 L667.8,22.3Z" fill="#2a2a2a"/>
<rect x="683.5" y="5.5" width="21" height="20.6" fill="none" stroke="#8c8c8c" stroke-width="1.1" stroke-dasharray="1.2 1.3"/>
<path d="M703.5,11 L692,21.5" stroke="#a8a8a8" stroke-width="2.4"/><path d="M703.5,11 L692,21.5" stroke="#d8d8d8" stroke-width="0.8"/>
<path d="M686,23.5 C687.5,21 690.5,19.5 693,20.5 C694,22 692.5,24.5 690,25 C688,25 687,24.5 686,23.5Z" fill="#e8e8e8" stroke="#999" stroke-width="0.9"/>
<g transform="translate(720,7.5) scale(1.0)"><path d="M0,5.5 L5,0.3 H10.5 L15,4.5 V10.5 L8,17.5 Z" fill="#e4e5e7"/><path d="M0,5.5 H12 L15,9.5 V10.5 L8,17.5Z" fill="#dadbdd"/><path d="M0,5.5 L5,0.3 H10.5 L15,4.5 V10.5 L8,17.5 Z M0,5.5 H11.5 L15,10 M10.5,0.3 L12.5,4.2" fill="none" stroke="#8a8a8a" stroke-width="1.1" stroke-linejoin="round"/></g>
<path d="M717,13.5 V19" stroke="#8a8a8a" stroke-width="1.1"/><circle cx="717.5" cy="22.5" r="0.9" fill="#8a8a8a"/>
<g transform="translate(751,5.5) scale(0.92)"><path d="M0,5.5 L5,0.3 H10.5 L15,4.5 V10.5 L8,17.5 Z" fill="#e4e5e7"/><path d="M0,5.5 H12 L15,9.5 V10.5 L8,17.5Z" fill="#dadbdd"/><path d="M0,5.5 L5,0.3 H10.5 L15,4.5 V10.5 L8,17.5 Z M0,5.5 H11.5 L15,10 M10.5,0.3 L12.5,4.2" fill="none" stroke="#8a8a8a" stroke-width="1.1" stroke-linejoin="round"/></g>
<path d="M749,24.8 V22.3 C753,22 756,21.5 758.5,21.3 C761,21.5 764,22 768.5,22.3 V24.8" fill="none" stroke="#8a8a8a" stroke-width="1.2"/>
<path d="M750,23.2 H768" stroke="#e6e7e9" stroke-width="1.2"/>
<path d="M748.5,18.5 C749,15.5 750,13.5 751.5,12" fill="none" stroke="#8a8a8a" stroke-width="1"/>
<path d="M783.4,13.8 V25.8 M780.5,16.5 L783.4,13.6 L786.3,16.5 M780.5,23 L783.4,25.9 L786.3,23" fill="none" stroke="#8a8a8a" stroke-width="1.1"/>
<g transform="translate(788.5,5.5) scale(0.88)"><path d="M0,5.5 L5,0.3 H10.5 L15,4.5 V10.5 L8,17.5 Z" fill="#e4e5e7"/><path d="M0,5.5 H12 L15,9.5 V10.5 L8,17.5Z" fill="#dadbdd"/><path d="M0,5.5 L5,0.3 H10.5 L15,4.5 V10.5 L8,17.5 Z M0,5.5 H11.5 L15,10 M10.5,0.3 L12.5,4.2" fill="none" stroke="#8a8a8a" stroke-width="1.1" stroke-linejoin="round"/></g>
<rect x="811.2" y="5.3" width="21" height="21" fill="#e3e5e8" stroke="#8c8c8c" stroke-width="1.1" stroke-dasharray="1.2 1.3"/>
<path d="M814.7,15.6 C817,12 819.5,10.6 821.9,10.6 C824.3,10.6 826.8,12 829.1,15.6 C826.8,19.3 824.3,20.7 821.9,20.7 C819.5,20.7 817,19.3 814.7,15.6Z" fill="none" stroke="#666" stroke-width="1.1"/>
<circle cx="821.9" cy="15.7" r="2.7" fill="none" stroke="#666" stroke-width="1.2"/>
<path d="M983.8,4.2 V13 H991.8Z" fill="#ffffff"/>
<path d="M984,4 L991.8,12.8" stroke="#484848" stroke-width="1.3" stroke-dasharray="1.1 0.9"/>
<rect x="955" y="139.00" width="37" height="24.70" fill="#e82a00"/>
<rect x="955" y="163.30" width="37" height="24.70" fill="#ea3c00"/>
<rect x="955" y="187.60" width="37" height="24.70" fill="#ec5000"/>
<rect x="955" y="211.90" width="37" height="24.70" fill="#ee6400"/>
<rect x="955" y="236.20" width="37" height="24.70" fill="#ee7400"/>
<rect x="955" y="260.50" width="37" height="24.70" fill="#ee8c00"/>
<rect x="955" y="284.80" width="37" height="24.70" fill="#eea400"/>
<rect x="955" y="309.10" width="37" height="24.70" fill="#eeb800"/>
<rect x="955" y="333.40" width="37" height="24.70" fill="#eed000"/>
<rect x="955" y="357.70" width="37" height="24.70" fill="#f0dc00"/>
<rect x="955" y="382.00" width="37" height="24.70" fill="#00e0f0"/>
<rect x="955" y="406.30" width="37" height="24.70" fill="#00d0e4"/>
<rect x="955" y="430.60" width="37" height="24.70" fill="#00bce0"/>
<rect x="955" y="454.90" width="37" height="24.70" fill="#08a8dc"/>
<rect x="955" y="479.20" width="37" height="24.70" fill="#0c94d4"/>
<rect x="955" y="503.50" width="37" height="24.70" fill="#1080cc"/>
<rect x="955" y="527.80" width="37" height="24.70" fill="#1070c8"/>
<rect x="955" y="552.10" width="37" height="24.70" fill="#1060c4"/>
<rect x="955" y="576.40" width="37" height="24.70" fill="#1048bc"/>
<rect x="955" y="600.70" width="37" height="24.70" fill="#1234b8"/>
<path d="M955,187.60 H992" stroke="#000" stroke-opacity="0.35" stroke-width="0.8" stroke-dasharray="1 1.5"/>
<path d="M955,236.20 H992" stroke="#000" stroke-opacity="0.35" stroke-width="0.8" stroke-dasharray="1 1.5"/>
<path d="M955,284.80 H992" stroke="#000" stroke-opacity="0.35" stroke-width="0.8" stroke-dasharray="1 1.5"/>
<path d="M955,333.40 H992" stroke="#000" stroke-opacity="0.35" stroke-width="0.8" stroke-dasharray="1 1.5"/>
<path d="M955,430.60 H992" stroke="#000" stroke-opacity="0.35" stroke-width="0.8" stroke-dasharray="1 1.5"/>
<path d="M955,479.20 H992" stroke="#000" stroke-opacity="0.35" stroke-width="0.8" stroke-dasharray="1 1.5"/>
<path d="M955,527.80 H992" stroke="#000" stroke-opacity="0.35" stroke-width="0.8" stroke-dasharray="1 1.5"/>
<path d="M955,576.40 H992" stroke="#000" stroke-opacity="0.35" stroke-width="0.8" stroke-dasharray="1 1.5"/>
<rect x="958.2" y="357.2" width="30.5" height="48.6" fill="#0aa60a" stroke="#101010" stroke-width="1" stroke-dasharray="3 1"/>
<rect x="955.5" y="114.5" width="37" height="19" fill="#ff0000" stroke="#141414" stroke-width="1.2"/>
<rect x="955.5" y="631.5" width="37" height="18.5" fill="#0000ff" stroke="#141414" stroke-width="1.2"/>
<path d="M943.3,132.9 L955.5,139.4 L943.3,145.9Z" fill="#000"/>
<path d="M943.3,375.5 L955.5,382.0 L943.3,388.5Z" fill="#000"/>
<path d="M943.3,618.8 L955.5,625.3 L943.3,631.8Z" fill="#000"/>
<path d="M943.8,351.2 L955,357.2 L943.8,363.2Z" fill="#18a018" stroke="#101010" stroke-width="1"/>
<path d="M943.8,400.0 L955,406.0 L943.8,412.0Z" fill="#18a018" stroke="#101010" stroke-width="1"/>
<g style="will-change:transform" opacity="0.999"><text transform="translate(938.1,144.5) scale(0.9,1)" x="0" y="0" fill="#000" font-size="13.4" text-anchor="end">1.0000</text>
<text transform="translate(939.6,191.10000000000002) scale(0.9,1)" x="0" y="0" fill="#505050" font-size="13.4" text-anchor="end">0.8</text>
<text transform="translate(939.6,239.9) scale(0.9,1)" x="0" y="0" fill="#505050" font-size="13.4" text-anchor="end">0.6</text>
<text transform="translate(939.6,288.3) scale(0.9,1)" x="0" y="0" fill="#505050" font-size="13.4" text-anchor="end">0.4</text>
<text transform="translate(938.1,362.1) scale(0.9,1)" x="0" y="0" fill="#18a018" font-size="13.4" text-anchor="end">0.1</text>
<text transform="translate(938.1,386.7) scale(0.9,1)" x="0" y="0" fill="#000" font-size="13.4" text-anchor="end">0.0000</text>
<text transform="translate(938.1,410.90000000000003) scale(0.9,1)" x="0" y="0" fill="#18a018" font-size="13.4" text-anchor="end">-0.1</text>
<text transform="translate(939.6,483.3) scale(0.9,1)" x="0" y="0" fill="#505050" font-size="13.4" text-anchor="end">-0.4</text>
<text transform="translate(939.6,531.9) scale(0.9,1)" x="0" y="0" fill="#505050" font-size="13.4" text-anchor="end">-0.6</text>
<text transform="translate(939.6,580.3) scale(0.9,1)" x="0" y="0" fill="#505050" font-size="13.4" text-anchor="end">-0.8</text>
<text transform="translate(938.1,629.9) scale(0.9,1)" x="0" y="0" fill="#000" font-size="13.4" text-anchor="end">-1.0000</text>
<path d="M48,714.8 L24.5,719.8" stroke="#e01010" stroke-width="2.3"/>
<path d="M48,714.8 L46.1,696" stroke="#1010e0" stroke-width="2.3"/>
<path d="M48,714.8 L53.5,733" stroke="#10d010" stroke-width="2.3"/>
<text x="20" y="725.8" fill="#b01818" font-size="14.5" text-anchor="middle">X</text>
<text x="45.3" y="695.8" fill="#1010b0" font-size="14.5" text-anchor="middle">Z</text>
<text x="53.7" y="735" fill="#10a010" font-size="14.5" text-anchor="middle">Y</text>
<rect x="24" y="735" width="153" height="9.8" fill="#2c2c2c"/>
<rect x="25" y="736" width="151" height="4.3" fill="#ffffff"/>
<text x="181.5" y="742.6" fill="#333" font-size="13" textLength="44.8" lengthAdjust="spacingAndGlyphs">250 mm</text></g>
</svg>
</body></html>
